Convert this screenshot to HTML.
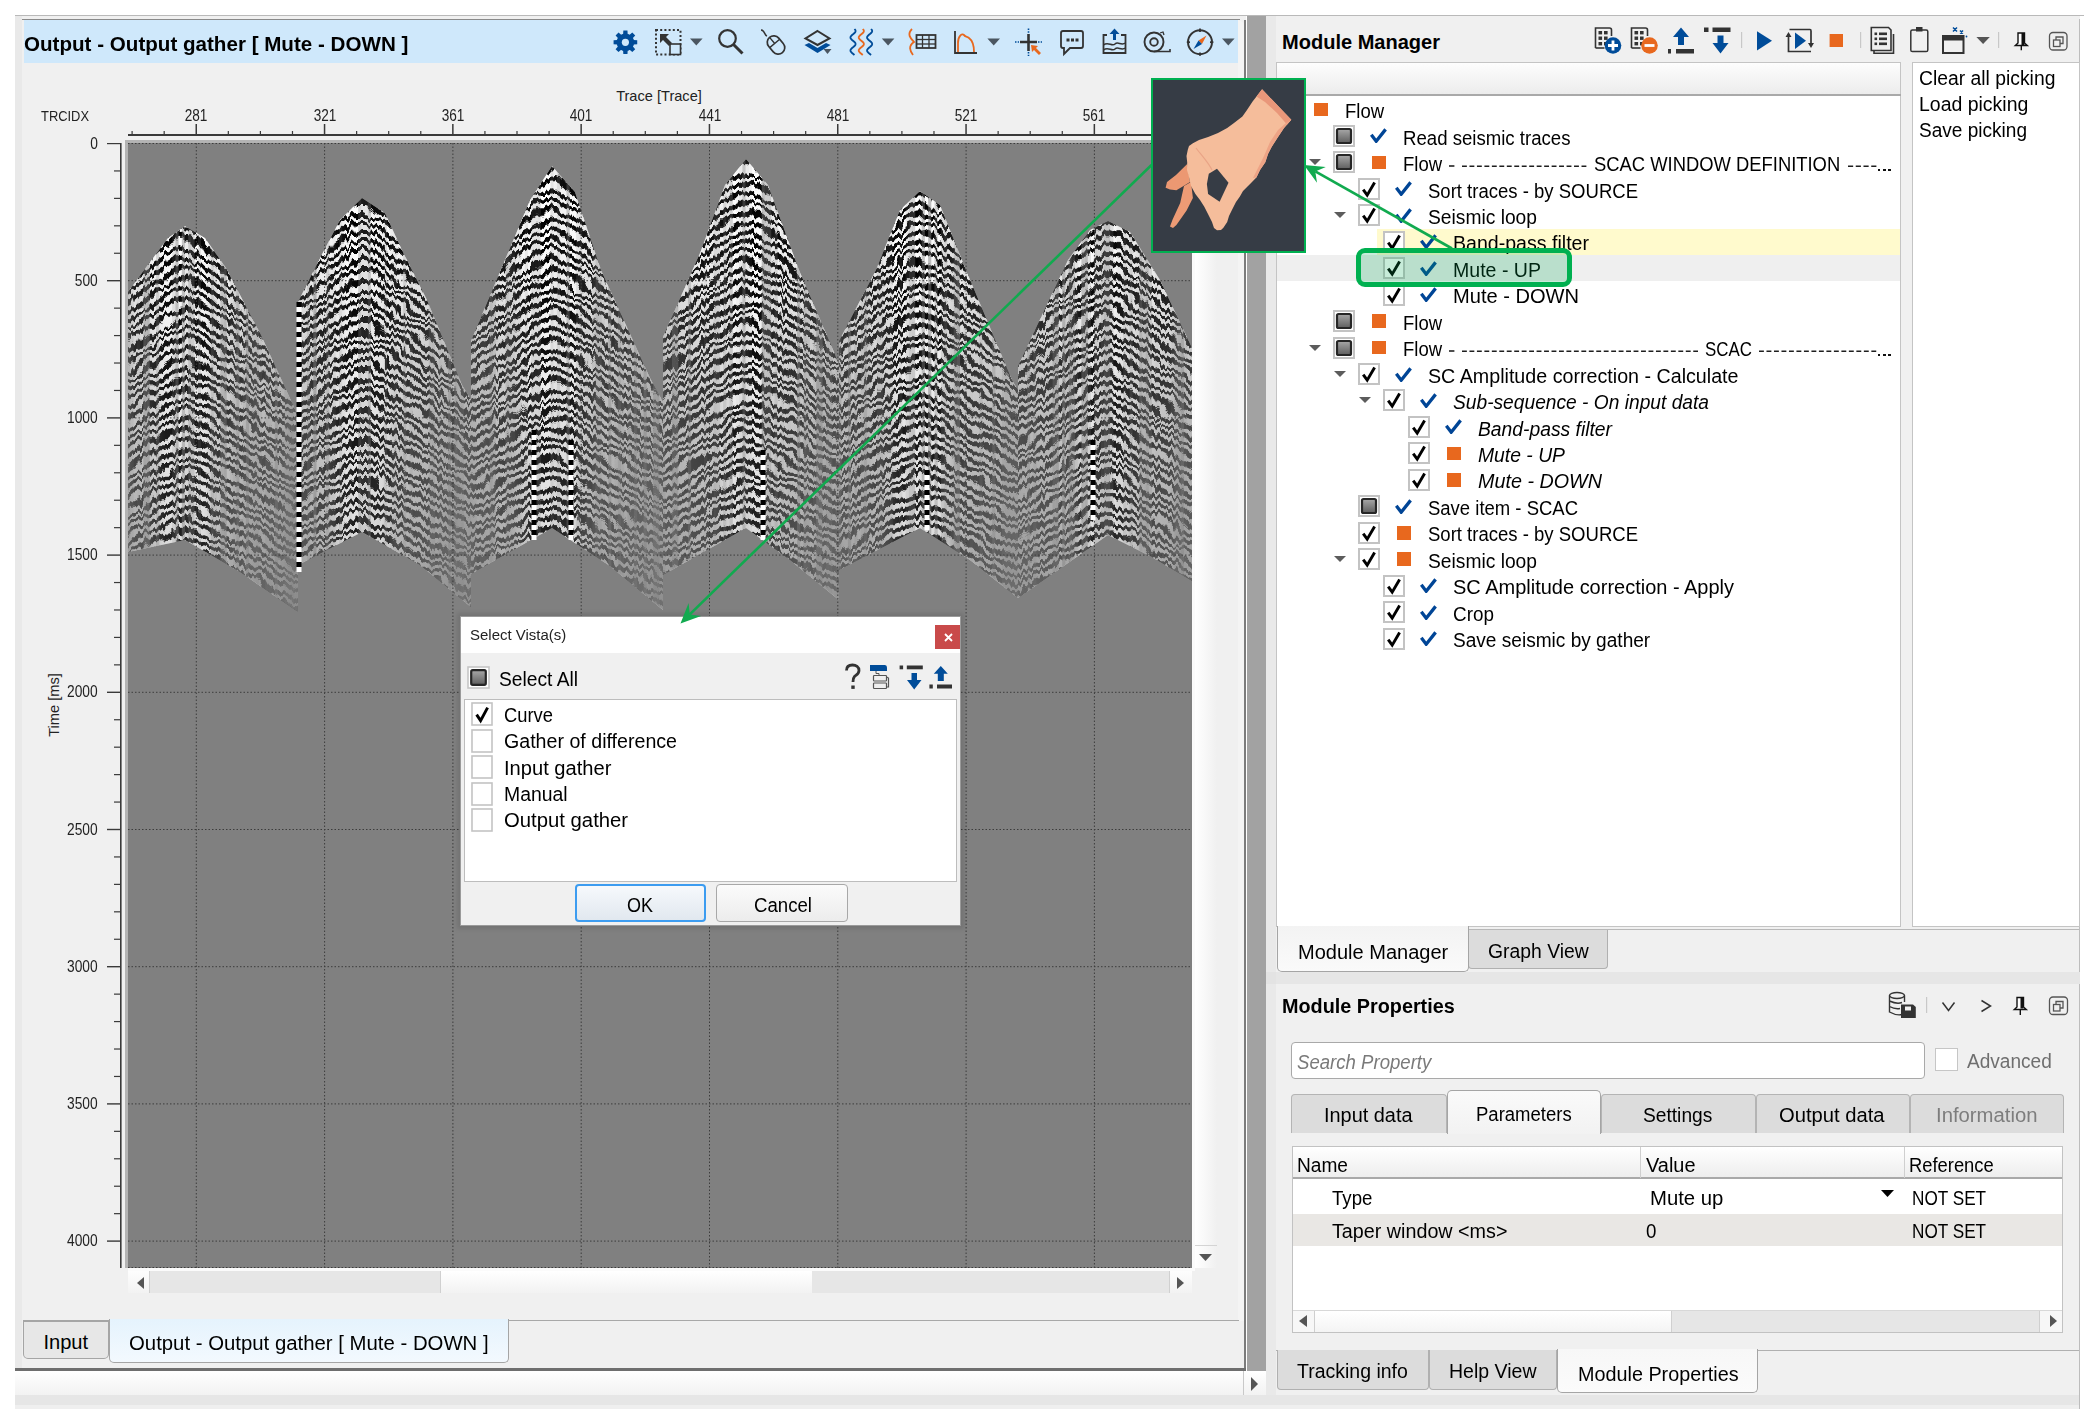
<!DOCTYPE html>
<html><head><meta charset="utf-8"><style>
html,body{margin:0;padding:0;}
body{width:2098px;height:1418px;position:relative;overflow:hidden;background:#fff;font-family:"Liberation Sans", sans-serif;}
</style></head><body>
<div style="position:absolute;left:15px;top:15px;width:2069px;height:1px;background:#b9b9b9"></div><div style="position:absolute;left:15px;top:16px;width:1231px;height:1355px;background:#f0f0f0"></div><div style="position:absolute;left:15px;top:16px;width:7px;height:1355px;background:#e9e9e9"></div><div style="position:absolute;left:22px;top:19px;width:1218px;height:1px;background:#8a8a8a"></div><div style="position:absolute;left:24px;top:20px;width:1214px;height:43px;background:#cfe8fb"></div><div style="position:absolute;left:1238px;top:20px;width:6px;height:1301px;background:#f4f4f4;border-top-right-radius:6px"></div><div style="position:absolute;left:1244px;top:20px;width:2px;height:1351px;background:#7c7c7c"></div><div style="position:absolute;left:15px;top:1368px;width:1231px;height:3px;background:#6e6e6e"></div><div style="position:absolute;left:1247px;top:16px;width:19px;height:1355px;background:#a2a2a2"></div><div style="position:absolute;left:15px;top:1371px;width:1251px;height:24px;background:linear-gradient(#ffffff,#f2f2f2)"></div><div style="position:absolute;left:1243px;top:1371px;width:1px;height:24px;background:#c9c9c9"></div><svg style="position:absolute;left:1250px;top:1377px;" width="9" height="14" viewBox="0 0 9 14"><path d="M1 0 L8 7 L1 14 Z" fill="#555"/></svg><div style="position:absolute;left:15px;top:1395px;width:2065px;height:13.6px;background:#efefef"></div><div style="position:absolute;left:15px;top:1395px;width:2065px;height:10px;background:#e6e6e6"></div><div style="position:absolute;left:1266px;top:16px;width:814px;height:1379px;background:#f0f0f0"></div><div style="position:absolute;left:1266px;top:16px;width:10px;height:1379px;background:#e9e9e9"></div><div style="position:absolute;left:2079px;top:19px;width:1.2px;height:1389.5px;background:#bdbdbd"></div><div style="position:absolute;top:33.53px;font-size:20.4px;line-height:20.4px;white-space:nowrap;color:#000;font-weight:700;left:24px;transform:scaleX(1.01);transform-origin:left 0;">Output - Output gather [ Mute - DOWN ]</div><div style="position:absolute;top:88.64px;font-size:14.6px;line-height:14.6px;white-space:nowrap;color:#222;left:359px;width:600px;text-align:center;">Trace [Trace]</div><div style="position:absolute;top:108.00px;font-size:15px;line-height:15px;white-space:nowrap;color:#222;left:41px;transform:scaleX(0.86);transform-origin:left 0;">TRCIDX</div><div style="position:absolute;top:108.45px;font-size:16px;line-height:16px;white-space:nowrap;color:#222;left:-103.69999999999999px;width:600px;text-align:center;transform:scaleX(0.85);transform-origin:center 0;">281</div><div style="position:absolute;top:108.45px;font-size:16px;line-height:16px;white-space:nowrap;color:#222;left:24.600000000000023px;width:600px;text-align:center;transform:scaleX(0.85);transform-origin:center 0;">321</div><div style="position:absolute;top:108.45px;font-size:16px;line-height:16px;white-space:nowrap;color:#222;left:152.90000000000003px;width:600px;text-align:center;transform:scaleX(0.85);transform-origin:center 0;">361</div><div style="position:absolute;top:108.45px;font-size:16px;line-height:16px;white-space:nowrap;color:#222;left:281.20000000000005px;width:600px;text-align:center;transform:scaleX(0.85);transform-origin:center 0;">401</div><div style="position:absolute;top:108.45px;font-size:16px;line-height:16px;white-space:nowrap;color:#222;left:409.5px;width:600px;text-align:center;transform:scaleX(0.85);transform-origin:center 0;">441</div><div style="position:absolute;top:108.45px;font-size:16px;line-height:16px;white-space:nowrap;color:#222;left:537.8px;width:600px;text-align:center;transform:scaleX(0.85);transform-origin:center 0;">481</div><div style="position:absolute;top:108.45px;font-size:16px;line-height:16px;white-space:nowrap;color:#222;left:666.1000000000001px;width:600px;text-align:center;transform:scaleX(0.85);transform-origin:center 0;">521</div><div style="position:absolute;top:108.45px;font-size:16px;line-height:16px;white-space:nowrap;color:#222;left:794.4000000000001px;width:600px;text-align:center;transform:scaleX(0.85);transform-origin:center 0;">561</div><svg style="position:absolute;left:128px;top:124px;" width="1064" height="12" viewBox="0 0 1064 12"><rect x="0" y="10" width="1064" height="2" fill="#3a3a3a"/><rect x="3.50" y="7" width="1.2" height="4" fill="#3a3a3a"/><rect x="35.58" y="7" width="1.2" height="4" fill="#3a3a3a"/><rect x="67.50" y="0" width="1.5" height="11" fill="#3a3a3a"/><rect x="99.72" y="7" width="1.2" height="4" fill="#3a3a3a"/><rect x="131.80" y="7" width="1.2" height="4" fill="#3a3a3a"/><rect x="163.88" y="7" width="1.2" height="4" fill="#3a3a3a"/><rect x="195.80" y="0" width="1.5" height="11" fill="#3a3a3a"/><rect x="228.03" y="7" width="1.2" height="4" fill="#3a3a3a"/><rect x="260.10" y="7" width="1.2" height="4" fill="#3a3a3a"/><rect x="292.17" y="7" width="1.2" height="4" fill="#3a3a3a"/><rect x="324.10" y="0" width="1.5" height="11" fill="#3a3a3a"/><rect x="356.33" y="7" width="1.2" height="4" fill="#3a3a3a"/><rect x="388.40" y="7" width="1.2" height="4" fill="#3a3a3a"/><rect x="420.48" y="7" width="1.2" height="4" fill="#3a3a3a"/><rect x="452.40" y="0" width="1.5" height="11" fill="#3a3a3a"/><rect x="484.62" y="7" width="1.2" height="4" fill="#3a3a3a"/><rect x="516.70" y="7" width="1.2" height="4" fill="#3a3a3a"/><rect x="548.78" y="7" width="1.2" height="4" fill="#3a3a3a"/><rect x="580.70" y="0" width="1.5" height="11" fill="#3a3a3a"/><rect x="612.93" y="7" width="1.2" height="4" fill="#3a3a3a"/><rect x="645.00" y="7" width="1.2" height="4" fill="#3a3a3a"/><rect x="677.08" y="7" width="1.2" height="4" fill="#3a3a3a"/><rect x="709.00" y="0" width="1.5" height="11" fill="#3a3a3a"/><rect x="741.23" y="7" width="1.2" height="4" fill="#3a3a3a"/><rect x="773.30" y="7" width="1.2" height="4" fill="#3a3a3a"/><rect x="805.38" y="7" width="1.2" height="4" fill="#3a3a3a"/><rect x="837.30" y="0" width="1.5" height="11" fill="#3a3a3a"/><rect x="869.53" y="7" width="1.2" height="4" fill="#3a3a3a"/><rect x="901.60" y="7" width="1.2" height="4" fill="#3a3a3a"/><rect x="933.68" y="7" width="1.2" height="4" fill="#3a3a3a"/><rect x="965.60" y="0" width="1.5" height="11" fill="#3a3a3a"/><rect x="997.82" y="7" width="1.2" height="4" fill="#3a3a3a"/><rect x="1029.90" y="7" width="1.2" height="4" fill="#3a3a3a"/><rect x="1061.98" y="7" width="1.2" height="4" fill="#3a3a3a"/></svg><svg style="position:absolute;left:107px;top:143px;" width="16" height="1126" viewBox="0 0 16 1126"><rect x="13" y="0" width="1.6" height="1125" fill="#3a3a3a"/><rect x="0" y="-0.20" width="14" height="1.4" fill="#3a3a3a"/><rect x="7" y="27.34" width="7" height="1.2" fill="#3a3a3a"/><rect x="7" y="54.78" width="7" height="1.2" fill="#3a3a3a"/><rect x="7" y="82.22" width="7" height="1.2" fill="#3a3a3a"/><rect x="7" y="109.66" width="7" height="1.2" fill="#3a3a3a"/><rect x="0" y="137.00" width="14" height="1.4" fill="#3a3a3a"/><rect x="7" y="164.54" width="7" height="1.2" fill="#3a3a3a"/><rect x="7" y="191.98" width="7" height="1.2" fill="#3a3a3a"/><rect x="7" y="219.42" width="7" height="1.2" fill="#3a3a3a"/><rect x="7" y="246.86" width="7" height="1.2" fill="#3a3a3a"/><rect x="0" y="274.20" width="14" height="1.4" fill="#3a3a3a"/><rect x="7" y="301.74" width="7" height="1.2" fill="#3a3a3a"/><rect x="7" y="329.18" width="7" height="1.2" fill="#3a3a3a"/><rect x="7" y="356.62" width="7" height="1.2" fill="#3a3a3a"/><rect x="7" y="384.06" width="7" height="1.2" fill="#3a3a3a"/><rect x="0" y="411.40" width="14" height="1.4" fill="#3a3a3a"/><rect x="7" y="438.94" width="7" height="1.2" fill="#3a3a3a"/><rect x="7" y="466.38" width="7" height="1.2" fill="#3a3a3a"/><rect x="7" y="493.82" width="7" height="1.2" fill="#3a3a3a"/><rect x="7" y="521.26" width="7" height="1.2" fill="#3a3a3a"/><rect x="0" y="548.60" width="14" height="1.4" fill="#3a3a3a"/><rect x="7" y="576.14" width="7" height="1.2" fill="#3a3a3a"/><rect x="7" y="603.58" width="7" height="1.2" fill="#3a3a3a"/><rect x="7" y="631.02" width="7" height="1.2" fill="#3a3a3a"/><rect x="7" y="658.46" width="7" height="1.2" fill="#3a3a3a"/><rect x="0" y="685.80" width="14" height="1.4" fill="#3a3a3a"/><rect x="7" y="713.34" width="7" height="1.2" fill="#3a3a3a"/><rect x="7" y="740.78" width="7" height="1.2" fill="#3a3a3a"/><rect x="7" y="768.22" width="7" height="1.2" fill="#3a3a3a"/><rect x="7" y="795.66" width="7" height="1.2" fill="#3a3a3a"/><rect x="0" y="823.00" width="14" height="1.4" fill="#3a3a3a"/><rect x="7" y="850.54" width="7" height="1.2" fill="#3a3a3a"/><rect x="7" y="877.98" width="7" height="1.2" fill="#3a3a3a"/><rect x="7" y="905.42" width="7" height="1.2" fill="#3a3a3a"/><rect x="7" y="932.86" width="7" height="1.2" fill="#3a3a3a"/><rect x="0" y="960.20" width="14" height="1.4" fill="#3a3a3a"/><rect x="7" y="987.74" width="7" height="1.2" fill="#3a3a3a"/><rect x="7" y="1015.18" width="7" height="1.2" fill="#3a3a3a"/><rect x="7" y="1042.62" width="7" height="1.2" fill="#3a3a3a"/><rect x="7" y="1070.06" width="7" height="1.2" fill="#3a3a3a"/><rect x="0" y="1097.40" width="14" height="1.4" fill="#3a3a3a"/></svg><div style="position:absolute;top:135.55px;font-size:16px;line-height:16px;white-space:nowrap;color:#222;right:2000px;text-align:right;transform:scaleX(0.86);transform-origin:right 0;">0</div><div style="position:absolute;top:272.75px;font-size:16px;line-height:16px;white-space:nowrap;color:#222;right:2000px;text-align:right;transform:scaleX(0.86);transform-origin:right 0;">500</div><div style="position:absolute;top:409.95px;font-size:16px;line-height:16px;white-space:nowrap;color:#222;right:2000px;text-align:right;transform:scaleX(0.86);transform-origin:right 0;">1000</div><div style="position:absolute;top:547.15px;font-size:16px;line-height:16px;white-space:nowrap;color:#222;right:2000px;text-align:right;transform:scaleX(0.86);transform-origin:right 0;">1500</div><div style="position:absolute;top:684.35px;font-size:16px;line-height:16px;white-space:nowrap;color:#222;right:2000px;text-align:right;transform:scaleX(0.86);transform-origin:right 0;">2000</div><div style="position:absolute;top:821.55px;font-size:16px;line-height:16px;white-space:nowrap;color:#222;right:2000px;text-align:right;transform:scaleX(0.86);transform-origin:right 0;">2500</div><div style="position:absolute;top:958.75px;font-size:16px;line-height:16px;white-space:nowrap;color:#222;right:2000px;text-align:right;transform:scaleX(0.86);transform-origin:right 0;">3000</div><div style="position:absolute;top:1095.95px;font-size:16px;line-height:16px;white-space:nowrap;color:#222;right:2000px;text-align:right;transform:scaleX(0.86);transform-origin:right 0;">3500</div><div style="position:absolute;top:1233.15px;font-size:16px;line-height:16px;white-space:nowrap;color:#222;right:2000px;text-align:right;transform:scaleX(0.86);transform-origin:right 0;">4000</div><div style="position:absolute;left:54px;top:705px;width:0;height:0;"><div style="position:absolute;left:-60px;top:-8px;width:120px;text-align:center;font-size:14.6px;line-height:16px;color:#222;transform:rotate(-90deg);white-space:nowrap;">Time [ms]</div></div><div style="position:absolute;left:125px;top:140px;width:1067px;height:3px;background:#b4b4b4"></div><div style="position:absolute;left:125px;top:143px;width:3px;height:1125px;background:#b4b4b4"></div><div style="position:absolute;left:128px;top:143px;width:1064px;height:1125px;background:#808080"></div><svg style="position:absolute;left:128px;top:143px;" width="1064" height="1125" viewBox="0 0 1064 1125"><defs><filter id="wob" x="-10%" y="-10%" width="120%" height="120%">
<feTurbulence type="fractalNoise" baseFrequency="0.035 0.05" numOctaves="2" seed="11" result="n"/>
<feDisplacementMap in="SourceGraphic" in2="n" scale="14" xChannelSelector="R" yChannelSelector="G" result="d1"/>
<feTurbulence type="fractalNoise" baseFrequency="0.33 0.006" numOctaves="1" seed="5" result="n2"/>
<feDisplacementMap in="d1" in2="n2" scale="9" xChannelSelector="A" yChannelSelector="R"/><feGaussianBlur stdDeviation="0.5"/>
</filter>
<linearGradient id="fade" gradientUnits="userSpaceOnUse" x1="0" y1="100" x2="0" y2="450">
<stop offset="0" stop-color="#808080" stop-opacity="0"/>
<stop offset="0.3" stop-color="#808080" stop-opacity="0.32"/>
<stop offset="0.6" stop-color="#808080" stop-opacity="0.58"/>
<stop offset="1" stop-color="#808080" stop-opacity="0.85"/>
</linearGradient><clipPath id="c0"><path d="M0,149 L22,119 L40,95 L57,83 L77,95 L98,125 L133,192 L165,262 L170,275 L170,469 L112,429 L57,397 L0,409 Z"/></clipPath><linearGradient id="mg0" gradientUnits="userSpaceOnUse" x1="-63" y1="0" x2="177" y2="0"><stop offset="0" stop-color="#fff"/><stop offset="0.35" stop-color="#bbb"/><stop offset="0.42" stop-color="#555"/><stop offset="0.58" stop-color="#555"/><stop offset="0.65" stop-color="#bbb"/><stop offset="1" stop-color="#fff"/></linearGradient><mask id="m0" maskUnits="userSpaceOnUse" x="0" y="0" width="1064" height="1125"><rect x="0" y="0" width="1064" height="1125" fill="url(#mg0)"/></mask><linearGradient id="hf0" gradientUnits="userSpaceOnUse" x1="-73" y1="0" x2="187" y2="0"><stop offset="0" stop-color="#808080" stop-opacity="0.35"/><stop offset="0.35" stop-color="#808080" stop-opacity="0.08"/><stop offset="0.5" stop-color="#808080" stop-opacity="0"/><stop offset="0.65" stop-color="#808080" stop-opacity="0.08"/><stop offset="1" stop-color="#808080" stop-opacity="0.35"/></linearGradient><clipPath id="c1"><path d="M170,159 L192,115 L212,77 L234,55 L257,70 L274,107 L299,157 L334,242 L343,257 L343,464 L292,422 L234,389 L170,422 Z"/></clipPath><linearGradient id="mg1" gradientUnits="userSpaceOnUse" x1="114" y1="0" x2="354" y2="0"><stop offset="0" stop-color="#fff"/><stop offset="0.35" stop-color="#bbb"/><stop offset="0.42" stop-color="#555"/><stop offset="0.58" stop-color="#555"/><stop offset="0.65" stop-color="#bbb"/><stop offset="1" stop-color="#fff"/></linearGradient><mask id="m1" maskUnits="userSpaceOnUse" x="0" y="0" width="1064" height="1125"><rect x="0" y="0" width="1064" height="1125" fill="url(#mg1)"/></mask><linearGradient id="hf1" gradientUnits="userSpaceOnUse" x1="104" y1="0" x2="364" y2="0"><stop offset="0" stop-color="#808080" stop-opacity="0.35"/><stop offset="0.35" stop-color="#808080" stop-opacity="0.08"/><stop offset="0.5" stop-color="#808080" stop-opacity="0"/><stop offset="0.65" stop-color="#808080" stop-opacity="0.08"/><stop offset="1" stop-color="#808080" stop-opacity="0.35"/></linearGradient><clipPath id="c2"><path d="M343,198 L374,124 L402,57 L424,23 L447,49 L473,127 L522,235 L535,259 L535,467 L482,423 L424,385 L343,431 Z"/></clipPath><linearGradient id="mg2" gradientUnits="userSpaceOnUse" x1="304" y1="0" x2="544" y2="0"><stop offset="0" stop-color="#fff"/><stop offset="0.35" stop-color="#bbb"/><stop offset="0.42" stop-color="#555"/><stop offset="0.58" stop-color="#555"/><stop offset="0.65" stop-color="#bbb"/><stop offset="1" stop-color="#fff"/></linearGradient><mask id="m2" maskUnits="userSpaceOnUse" x="0" y="0" width="1064" height="1125"><rect x="0" y="0" width="1064" height="1125" fill="url(#mg2)"/></mask><linearGradient id="hf2" gradientUnits="userSpaceOnUse" x1="294" y1="0" x2="554" y2="0"><stop offset="0" stop-color="#808080" stop-opacity="0.35"/><stop offset="0.35" stop-color="#808080" stop-opacity="0.08"/><stop offset="0.5" stop-color="#808080" stop-opacity="0"/><stop offset="0.65" stop-color="#808080" stop-opacity="0.08"/><stop offset="1" stop-color="#808080" stop-opacity="0.35"/></linearGradient><clipPath id="c3"><path d="M535,194 L572,110 L597,42 L618,16 L640,42 L671,127 L706,209 L711,222 L711,457 L662,417 L618,385 L535,432 Z"/></clipPath><linearGradient id="mg3" gradientUnits="userSpaceOnUse" x1="498" y1="0" x2="738" y2="0"><stop offset="0" stop-color="#fff"/><stop offset="0.35" stop-color="#bbb"/><stop offset="0.42" stop-color="#555"/><stop offset="0.58" stop-color="#555"/><stop offset="0.65" stop-color="#bbb"/><stop offset="1" stop-color="#fff"/></linearGradient><mask id="m3" maskUnits="userSpaceOnUse" x="0" y="0" width="1064" height="1125"><rect x="0" y="0" width="1064" height="1125" fill="url(#mg3)"/></mask><linearGradient id="hf3" gradientUnits="userSpaceOnUse" x1="488" y1="0" x2="748" y2="0"><stop offset="0" stop-color="#808080" stop-opacity="0.35"/><stop offset="0.35" stop-color="#808080" stop-opacity="0.08"/><stop offset="0.5" stop-color="#808080" stop-opacity="0"/><stop offset="0.65" stop-color="#808080" stop-opacity="0.08"/><stop offset="1" stop-color="#808080" stop-opacity="0.35"/></linearGradient><clipPath id="c4"><path d="M711,198 L748,127 L772,67 L792,48 L812,62 L838,127 L884,237 L890,247 L890,455 L842,417 L792,385 L711,427 Z"/></clipPath><linearGradient id="mg4" gradientUnits="userSpaceOnUse" x1="672" y1="0" x2="912" y2="0"><stop offset="0" stop-color="#fff"/><stop offset="0.35" stop-color="#bbb"/><stop offset="0.42" stop-color="#555"/><stop offset="0.58" stop-color="#555"/><stop offset="0.65" stop-color="#bbb"/><stop offset="1" stop-color="#fff"/></linearGradient><mask id="m4" maskUnits="userSpaceOnUse" x="0" y="0" width="1064" height="1125"><rect x="0" y="0" width="1064" height="1125" fill="url(#mg4)"/></mask><linearGradient id="hf4" gradientUnits="userSpaceOnUse" x1="662" y1="0" x2="922" y2="0"><stop offset="0" stop-color="#808080" stop-opacity="0.35"/><stop offset="0.35" stop-color="#808080" stop-opacity="0.08"/><stop offset="0.5" stop-color="#808080" stop-opacity="0"/><stop offset="0.65" stop-color="#808080" stop-opacity="0.08"/><stop offset="1" stop-color="#808080" stop-opacity="0.35"/></linearGradient><clipPath id="c5"><path d="M890,223 L940,117 L962,87 L980,78 L1002,89 L1032,137 L1064,205 L1064,438 L1022,413 L980,392 L890,455 Z"/></clipPath><linearGradient id="mg5" gradientUnits="userSpaceOnUse" x1="860" y1="0" x2="1100" y2="0"><stop offset="0" stop-color="#fff"/><stop offset="0.35" stop-color="#bbb"/><stop offset="0.42" stop-color="#555"/><stop offset="0.58" stop-color="#555"/><stop offset="0.65" stop-color="#bbb"/><stop offset="1" stop-color="#fff"/></linearGradient><mask id="m5" maskUnits="userSpaceOnUse" x="0" y="0" width="1064" height="1125"><rect x="0" y="0" width="1064" height="1125" fill="url(#mg5)"/></mask><linearGradient id="hf5" gradientUnits="userSpaceOnUse" x1="850" y1="0" x2="1110" y2="0"><stop offset="0" stop-color="#808080" stop-opacity="0.35"/><stop offset="0.35" stop-color="#808080" stop-opacity="0.08"/><stop offset="0.5" stop-color="#808080" stop-opacity="0"/><stop offset="0.65" stop-color="#808080" stop-opacity="0.08"/><stop offset="1" stop-color="#808080" stop-opacity="0.35"/></linearGradient></defs><g clip-path="url(#c0)"><rect x="-20" y="0" width="210" height="520" fill="#fff"/><g filter="url(#wob)" fill="#000"><polygon points="-20,73 -12,67 -4,62 4,56 12,50 20,44 28,39 36,33 44,28 52,24 60,23 68,27 76,32 84,38 92,43 100,49 108,54 116,60 124,66 132,72 140,77 148,83 156,89 164,94 172,100 180,106 188,112 196,117 196,122 188,117 180,111 172,105 164,99 156,94 148,88 140,82 132,77 124,71 116,65 108,59 100,54 92,48 84,43 76,37 68,32 60,28 52,29 44,33 36,38 28,44 20,49 12,55 4,61 -4,67 -12,72 -20,78"/><polygon points="-20,83 -12,77 -4,72 4,66 12,60 20,54 28,49 36,43 44,38 52,34 60,33 68,37 76,42 84,48 92,53 100,59 108,64 116,70 124,76 132,82 140,87 148,93 156,99 164,104 172,110 180,116 188,122 196,127 196,132 188,127 180,121 172,115 164,109 156,104 148,98 140,92 132,87 124,81 116,75 108,69 100,64 92,58 84,53 76,47 68,42 60,38 52,39 44,43 36,48 28,54 20,59 12,65 4,71 -4,77 -12,82 -20,88"/><polygon points="-20,93 -12,87 -4,82 4,76 12,70 20,64 28,59 36,53 44,48 52,44 60,43 68,47 76,52 84,58 92,63 100,69 108,74 116,80 124,86 132,92 140,97 148,103 156,109 164,114 172,120 180,126 188,132 196,137 196,142 188,137 180,131 172,125 164,119 156,114 148,108 140,102 132,97 124,91 116,85 108,79 100,74 92,68 84,63 76,57 68,52 60,48 52,49 44,53 36,58 28,64 20,69 12,75 4,81 -4,87 -12,92 -20,98"/><polygon points="-20,103 -12,97 -4,92 4,86 12,80 20,74 28,69 36,63 44,58 52,54 60,53 68,57 76,62 84,68 92,73 100,79 108,84 116,90 124,96 132,102 140,107 148,113 156,119 164,124 172,130 180,136 188,142 196,147 196,152 188,147 180,141 172,135 164,129 156,124 148,118 140,112 132,107 124,101 116,95 108,89 100,84 92,78 84,73 76,67 68,62 60,58 52,59 44,63 36,68 28,74 20,79 12,85 4,91 -4,97 -12,102 -20,108"/><polygon points="-20,113 -12,107 -4,102 4,96 12,90 20,84 28,79 36,73 44,68 52,64 60,63 68,67 76,72 84,78 92,83 100,89 108,94 116,100 124,106 132,112 140,117 148,123 156,129 164,134 172,140 180,146 188,152 196,157 196,162 188,157 180,151 172,145 164,139 156,134 148,128 140,122 132,117 124,111 116,105 108,99 100,94 92,88 84,83 76,77 68,72 60,68 52,69 44,73 36,78 28,84 20,89 12,95 4,101 -4,107 -12,112 -20,118"/><polygon points="-20,123 -12,117 -4,112 4,106 12,100 20,94 28,89 36,83 44,78 52,74 60,73 68,77 76,82 84,88 92,93 100,99 108,104 116,110 124,116 132,122 140,127 148,133 156,139 164,144 172,150 180,156 188,162 196,167 196,172 188,167 180,161 172,155 164,149 156,144 148,138 140,132 132,127 124,121 116,115 108,109 100,104 92,98 84,93 76,87 68,82 60,78 52,79 44,83 36,88 28,94 20,99 12,105 4,111 -4,117 -12,122 -20,128"/><polygon points="-20,133 -12,127 -4,122 4,116 12,110 20,104 28,99 36,93 44,88 52,84 60,83 68,87 76,92 84,98 92,103 100,109 108,114 116,120 124,126 132,132 140,137 148,143 156,149 164,154 172,160 180,166 188,172 196,177 196,182 188,176 180,171 172,165 164,159 156,153 148,148 140,142 132,136 124,131 116,125 108,119 100,114 92,108 84,102 76,97 68,92 60,88 52,89 44,93 36,98 28,104 20,109 12,115 4,121 -4,126 -12,132 -20,138"/><polygon points="-20,143 -12,137 -4,131 4,126 12,120 20,114 28,109 36,103 44,98 52,94 60,93 68,97 76,102 84,107 92,113 100,118 108,124 116,130 124,135 132,141 140,147 148,152 156,158 164,164 172,170 180,175 188,181 196,187 196,191 188,185 180,180 172,174 164,168 156,163 148,157 140,152 132,146 124,140 116,135 108,129 100,123 92,118 84,112 76,107 68,102 60,98 52,99 44,103 36,108 28,114 20,119 12,125 4,130 -4,136 -12,142 -20,147"/><polygon points="-20,152 -12,146 -4,141 4,135 12,130 20,124 28,119 36,113 44,108 52,104 60,103 68,107 76,112 84,117 92,123 100,128 108,134 116,139 124,145 132,151 140,156 148,162 156,168 164,173 172,179 180,184 188,190 196,196 196,200 188,195 180,189 172,183 164,178 156,172 148,167 140,161 132,155 124,150 116,144 108,139 100,133 92,128 84,122 76,117 68,112 60,108 52,109 44,113 36,118 28,124 20,129 12,135 4,140 -4,146 -12,151 -20,157"/><polygon points="-20,162 -12,156 -4,150 4,145 12,139 20,134 28,128 36,123 44,118 52,114 60,113 68,117 76,122 84,127 92,133 100,138 108,144 116,149 124,155 132,160 140,166 148,171 156,177 164,182 172,188 180,194 188,199 196,205 196,209 188,204 180,198 172,193 164,187 156,182 148,176 140,170 132,165 124,159 116,154 108,148 100,143 92,137 84,132 76,127 68,122 60,118 52,119 44,123 36,128 28,133 20,139 12,144 4,150 -4,155 -12,161 -20,166"/><polygon points="-20,171 -12,166 -4,160 4,155 12,149 20,144 28,138 36,133 44,128 52,124 60,123 68,127 76,132 84,137 92,142 100,148 108,153 116,159 124,164 132,170 140,175 148,181 156,186 164,192 172,197 180,203 188,208 196,214 196,218 188,213 180,207 172,202 164,196 156,191 148,185 140,180 132,174 124,169 116,164 108,158 100,153 92,147 84,142 76,137 68,132 60,128 52,129 44,133 36,138 28,143 20,149 12,154 4,159 -4,165 -12,170 -20,176"/><polygon points="-20,181 -12,175 -4,170 4,164 12,159 20,153 28,148 36,143 44,138 52,134 60,133 68,137 76,142 84,147 92,152 100,158 108,163 116,168 124,174 132,179 140,185 148,190 156,196 164,201 172,207 180,212 188,218 196,223 196,228 188,222 180,217 172,211 164,206 156,200 148,195 140,189 132,184 124,179 116,173 108,168 100,162 92,157 84,152 76,147 68,142 60,138 52,139 44,143 36,148 28,153 20,158 12,164 4,169 -4,175 -12,180 -20,185"/><polygon points="-20,190 -12,185 -4,179 4,174 12,169 20,163 28,158 36,153 44,148 52,144 60,143 68,147 76,152 84,157 92,162 100,167 108,173 116,178 124,183 132,189 140,194 148,200 156,205 164,210 172,216 180,221 188,227 196,232 196,237 188,231 180,226 172,220 164,215 156,210 148,204 140,199 132,194 124,188 116,183 108,177 100,172 92,167 84,162 76,157 68,152 60,148 52,149 44,153 36,158 28,163 20,168 12,173 4,179 -4,184 -12,190 -20,195"/><polygon points="-20,200 -12,194 -4,189 4,184 12,178 20,173 28,168 36,163 44,158 52,154 60,153 68,157 76,161 84,167 92,172 100,177 108,182 116,188 124,193 132,198 140,204 148,209 156,214 164,220 172,225 180,230 188,236 196,241 196,246 188,240 180,235 172,230 164,224 156,219 148,214 140,208 132,203 124,198 116,192 108,187 100,182 92,177 84,171 76,166 68,162 60,158 52,159 44,163 36,168 28,173 20,178 12,183 4,189 -4,194 -12,199 -20,204"/><polygon points="-20,209 -12,204 -4,199 4,193 12,188 20,183 28,178 36,173 44,168 52,164 60,163 68,167 76,171 84,176 92,182 100,187 108,192 116,197 124,203 132,208 140,213 148,218 156,224 164,229 172,234 180,240 188,245 196,250 196,255 188,250 180,244 172,239 164,234 156,228 148,223 140,218 132,213 124,207 116,202 108,197 100,192 92,186 84,181 76,176 68,172 60,168 52,169 44,173 36,178 28,183 20,188 12,193 4,198 -4,203 -12,209 -20,214"/><polygon points="-20,219 -12,213 -4,208 4,203 12,198 20,193 28,188 36,183 44,178 52,174 60,173 68,177 76,181 84,186 92,191 100,197 108,202 116,207 124,212 132,217 140,223 148,228 156,233 164,238 172,244 180,249 188,254 196,259 196,264 188,259 180,254 172,248 164,243 156,238 148,233 140,227 132,222 124,217 116,212 108,207 100,201 92,196 84,191 76,186 68,182 60,178 52,179 44,183 36,187 28,192 20,198 12,203 4,208 -4,213 -12,218 -20,223"/><polygon points="-20,228 -12,223 -4,218 4,213 12,208 20,202 28,197 36,192 44,188 52,184 60,183 68,187 76,191 84,196 92,201 100,206 108,211 116,217 124,222 132,227 140,232 148,237 156,243 164,248 172,253 180,258 188,263 196,269 196,273 188,268 180,263 172,258 164,252 156,247 148,242 140,237 132,232 124,227 116,221 108,216 100,211 92,206 84,201 76,196 68,192 60,188 52,189 44,193 36,197 28,202 20,207 12,212 4,218 -4,223 -12,228 -20,233"/><polygon points="-20,238 -12,233 -4,228 4,222 12,217 20,212 28,207 36,202 44,198 52,194 60,193 68,197 76,201 84,206 92,211 100,216 108,221 116,226 124,231 132,236 140,242 148,247 156,252 164,257 172,262 180,267 188,273 196,278 196,282 188,277 180,272 172,267 164,262 156,257 148,251 140,246 132,241 124,236 116,231 108,226 100,221 92,216 84,211 76,206 68,202 60,198 52,199 44,203 36,207 28,212 20,217 12,222 4,227 -4,232 -12,237 -20,243"/><polygon points="-20,247 -12,242 -4,237 4,232 12,227 20,222 28,217 36,212 44,208 52,204 60,203 68,207 76,211 84,216 92,221 100,226 108,231 116,236 124,241 132,246 140,251 148,256 156,261 164,266 172,271 180,277 188,282 196,287 196,291 188,286 180,281 172,276 164,271 156,266 148,261 140,256 132,251 124,246 116,241 108,236 100,231 92,226 84,221 76,216 68,212 60,208 52,209 44,213 36,217 28,222 20,227 12,232 4,237 -4,242 -12,247 -20,252"/><polygon points="-20,257 -12,252 -4,247 4,242 12,237 20,232 28,227 36,222 44,218 52,214 60,213 68,217 76,221 84,226 92,231 100,236 108,241 116,246 124,251 132,256 140,261 148,266 156,271 164,276 172,281 180,286 188,291 196,296 196,300 188,295 180,290 172,285 164,280 156,275 148,270 140,265 132,260 124,255 116,250 108,245 100,240 92,236 84,231 76,226 68,222 60,218 52,219 44,223 36,227 28,232 20,237 12,242 4,247 -4,252 -12,257 -20,262"/><polygon points="-20,266 -12,261 -4,256 4,251 12,247 20,242 28,237 36,232 44,228 52,224 60,223 68,226 76,231 84,236 92,240 100,245 108,250 116,255 124,260 132,265 140,270 148,275 156,280 164,285 172,290 180,295 188,300 196,305 196,310 188,305 180,300 172,295 164,290 156,285 148,280 140,275 132,270 124,265 116,260 108,255 100,250 92,245 84,241 76,236 68,231 60,228 52,229 44,233 36,237 28,242 20,247 12,251 4,256 -4,261 -12,266 -20,271"/><polygon points="-20,276 -12,271 -4,266 4,261 12,256 20,251 28,247 36,242 44,237 52,234 60,233 68,236 76,241 84,245 92,250 100,255 108,260 116,265 124,270 132,275 140,280 148,285 156,289 164,294 172,299 180,304 188,309 196,314 196,319 188,314 180,309 172,304 164,299 156,294 148,289 140,284 132,279 124,275 116,270 108,265 100,260 92,255 84,250 76,246 68,241 60,238 52,239 44,242 36,247 28,252 20,256 12,261 4,266 -4,271 -12,276 -20,281"/><polygon points="-20,285 -12,281 -4,276 4,271 12,266 20,261 28,256 36,252 44,247 52,244 60,243 68,246 76,251 84,255 92,260 100,265 108,270 116,274 124,279 132,284 140,289 148,294 156,299 164,304 172,309 180,313 188,318 196,323 196,328 188,323 180,318 172,313 164,308 156,303 148,299 140,294 132,289 124,284 116,279 108,275 100,270 92,265 84,260 76,256 68,251 60,248 52,249 44,252 36,257 28,261 20,266 12,271 4,276 -4,281 -12,285 -20,290"/><polygon points="-20,295 -12,290 -4,285 4,281 12,276 20,271 28,266 36,262 44,257 52,254 60,253 68,256 76,261 84,265 92,270 100,275 108,279 116,284 124,289 132,294 140,299 148,303 156,308 164,313 172,318 180,323 188,327 196,332 196,337 188,332 180,327 172,322 164,318 156,313 148,308 140,303 132,299 124,294 116,289 108,284 100,279 92,275 84,270 76,266 68,261 60,258 52,259 44,262 36,267 28,271 20,276 12,281 4,285 -4,290 -12,295 -20,300"/><polygon points="-20,304 -12,300 -4,295 4,290 12,286 20,281 28,276 36,272 44,267 52,264 60,263 68,266 76,271 84,275 92,280 100,284 108,289 116,294 124,299 132,303 140,308 148,313 156,318 164,322 172,327 180,332 188,337 196,341 196,346 188,341 180,336 172,332 164,327 156,322 148,318 140,313 132,308 124,303 116,299 108,294 100,289 92,285 84,280 76,275 68,271 60,268 52,269 44,272 36,277 28,281 20,286 12,290 4,295 -4,300 -12,305 -20,309"/><polygon points="-20,314 -12,309 -4,305 4,300 12,295 20,291 28,286 36,282 44,277 52,274 60,273 68,276 76,280 84,285 92,289 100,294 108,299 116,303 124,308 132,313 140,318 148,322 156,327 164,332 172,336 180,341 188,346 196,351 196,355 188,350 180,346 172,341 164,336 156,332 148,327 140,322 132,318 124,313 116,308 108,304 100,299 92,294 84,290 76,285 68,281 60,278 52,279 44,282 36,286 28,291 20,296 12,300 4,305 -4,309 -12,314 -20,319"/><polygon points="-20,324 -12,319 -4,314 4,310 12,305 20,300 28,296 36,291 44,287 52,284 60,283 68,286 76,290 84,295 92,299 100,304 108,308 116,313 124,318 132,322 140,327 148,332 156,336 164,341 172,346 180,350 188,355 196,360 196,364 188,360 180,355 172,350 164,346 156,341 148,336 140,332 132,327 124,323 116,318 108,313 100,309 92,304 84,300 76,295 68,291 60,288 52,289 44,292 36,296 28,301 20,305 12,310 4,314 -4,319 -12,324 -20,328"/><polygon points="-20,333 -12,328 -4,324 4,319 12,315 20,310 28,306 36,301 44,297 52,294 60,293 68,296 76,300 84,305 92,309 100,314 108,318 116,323 124,327 132,332 140,336 148,341 156,346 164,350 172,355 180,360 188,364 196,369 196,373 188,369 180,364 172,360 164,355 156,350 148,346 140,341 132,337 124,332 116,328 108,323 100,318 92,314 84,310 76,305 68,301 60,298 52,299 44,302 36,306 28,311 20,315 12,320 4,324 -4,329 -12,333 -20,338"/><polygon points="-20,343 -12,338 -4,334 4,329 12,325 20,320 28,316 36,311 44,307 52,304 60,303 68,306 76,310 84,314 92,319 100,323 108,328 116,332 124,337 132,341 140,346 148,351 156,355 164,360 172,364 180,369 188,373 196,378 196,382 188,378 180,373 172,369 164,364 156,360 148,355 140,351 132,346 124,342 116,337 108,333 100,328 92,324 84,319 76,315 68,311 60,308 52,309 44,312 36,316 28,321 20,325 12,329 4,334 -4,338 -12,343 -20,347"/><polygon points="-20,352 -12,348 -4,343 4,339 12,334 20,330 28,325 36,321 44,317 52,314 60,313 68,316 76,320 84,324 92,329 100,333 108,338 116,342 124,347 132,351 140,355 148,360 156,364 164,369 172,373 180,378 188,382 196,387 196,391 188,387 180,383 172,378 164,374 156,369 148,365 140,360 132,356 124,351 116,347 108,342 100,338 92,334 84,329 76,325 68,321 60,318 52,319 44,322 36,326 28,330 20,335 12,339 4,344 -4,348 -12,352 -20,357"/><polygon points="-20,362 -12,357 -4,353 4,348 12,344 20,340 28,335 36,331 44,327 52,324 60,323 68,326 76,330 84,334 92,339 100,343 108,347 116,352 124,356 132,361 140,365 148,369 156,374 164,378 172,383 180,387 188,392 196,396 196,401 188,396 180,392 172,387 164,383 156,379 148,374 140,370 132,365 124,361 116,357 108,352 100,348 92,343 84,339 76,335 68,331 60,328 52,329 44,332 36,336 28,340 20,345 12,349 4,353 -4,358 -12,362 -20,366"/><polygon points="-20,371 -12,367 -4,362 4,358 12,354 20,349 28,345 36,341 44,337 52,334 60,333 68,336 76,340 84,344 92,348 100,353 108,357 116,361 124,366 132,370 140,374 148,379 156,383 164,388 172,392 180,396 188,401 196,405 196,410 188,405 180,401 172,397 164,392 156,388 148,384 140,379 132,375 124,370 116,366 108,362 100,358 92,353 84,349 76,345 68,341 60,338 52,339 44,342 36,346 28,350 20,354 12,359 4,363 -4,367 -12,372 -20,376"/><polygon points="-20,381 -12,376 -4,372 4,368 12,363 20,359 28,355 36,351 44,347 52,344 60,343 68,346 76,350 84,354 92,358 100,362 108,367 116,371 124,375 132,380 140,384 148,388 156,393 164,397 172,401 180,406 188,410 196,414 196,419 188,414 180,410 172,406 164,402 156,397 148,393 140,389 132,384 124,380 116,376 108,372 100,367 92,363 84,359 76,355 68,351 60,348 52,349 44,352 36,356 28,360 20,364 12,368 4,373 -4,377 -12,381 -20,385"/><polygon points="-20,390 -12,386 -4,382 4,377 12,373 20,369 28,365 36,361 44,357 52,354 60,353 68,356 76,360 84,364 92,368 100,372 108,376 116,381 124,385 132,389 140,393 148,398 156,402 164,406 172,411 180,415 188,419 196,423 196,428 188,424 180,419 172,415 164,411 156,407 148,402 140,398 132,394 124,390 116,385 108,381 100,377 92,373 84,369 76,365 68,361 60,358 52,359 44,362 36,366 28,370 20,374 12,378 4,382 -4,387 -12,391 -20,395"/><polygon points="-20,400 -12,396 -4,391 4,387 12,383 20,379 28,375 36,371 44,367 52,364 60,363 68,366 76,370 84,374 92,378 100,382 108,386 116,390 124,394 132,399 140,403 148,407 156,411 164,416 172,420 180,424 188,428 196,432 196,437 188,433 180,429 172,424 164,420 156,416 148,412 140,408 132,403 124,399 116,395 108,391 100,387 92,383 84,379 76,375 68,371 60,368 52,369 44,372 36,376 28,380 20,384 12,388 4,392 -4,396 -12,400 -20,405"/><polygon points="-20,409 -12,405 -4,401 4,397 12,393 20,389 28,385 36,381 44,377 52,374 60,373 68,376 76,380 84,384 92,388 100,392 108,396 116,400 124,404 132,408 140,412 148,417 156,421 164,425 172,429 180,433 188,437 196,442 196,446 188,442 180,438 172,434 164,430 156,425 148,421 140,417 132,413 124,409 116,405 108,401 100,397 92,392 84,388 76,385 68,381 60,378 52,379 44,382 36,386 28,389 20,393 12,398 4,402 -4,406 -12,410 -20,414"/><polygon points="-20,419 -12,415 -4,411 4,407 12,402 20,398 28,394 36,390 44,387 52,384 60,383 68,386 76,390 84,393 92,397 100,401 108,405 116,410 124,414 132,418 140,422 148,426 156,430 164,434 172,438 180,442 188,447 196,451 196,455 188,451 180,447 172,443 164,439 156,435 148,431 140,427 132,423 124,418 116,414 108,410 100,406 92,402 84,398 76,394 68,391 60,388 52,389 44,392 36,395 28,399 20,403 12,407 4,411 -4,415 -12,419 -20,424"/><polygon points="-20,428 -12,424 -4,420 4,416 12,412 20,408 28,404 36,400 44,397 52,394 60,393 68,396 76,399 84,403 92,407 100,411 108,415 116,419 124,423 132,427 140,431 148,435 156,439 164,444 172,448 180,452 188,456 196,460 196,464 188,460 180,456 172,452 164,448 156,444 148,440 140,436 132,432 124,428 116,424 108,420 100,416 92,412 84,408 76,404 68,401 60,398 52,399 44,402 36,405 28,409 20,413 12,417 4,421 -4,425 -12,429 -20,433"/><polygon points="-20,438 -12,434 -4,430 4,426 12,422 20,418 28,414 36,410 44,407 52,404 60,403 68,406 76,409 84,413 92,417 100,421 108,425 116,429 124,433 132,437 140,441 148,445 156,449 164,453 172,457 180,461 188,465 196,469 196,473 188,469 180,465 172,462 164,458 156,454 148,450 140,446 132,442 124,438 116,434 108,430 100,426 92,422 84,418 76,414 68,411 60,408 52,409 44,412 36,415 28,419 20,423 12,427 4,431 -4,435 -12,439 -20,443"/><polygon points="-20,447 -12,443 -4,440 4,436 12,432 20,428 28,424 36,420 44,417 52,414 60,413 68,416 76,419 84,423 92,427 100,431 108,435 116,439 124,442 132,446 140,450 148,454 156,458 164,462 172,466 180,470 188,474 196,478 196,483 188,479 180,475 172,471 164,467 156,463 148,459 140,455 132,451 124,447 116,443 108,439 100,436 92,432 84,428 76,424 68,421 60,418 52,419 44,422 36,425 28,429 20,433 12,437 4,440 -4,444 -12,448 -20,452"/><polygon points="-20,457 -12,453 -4,449 4,445 12,441 20,438 28,434 36,430 44,427 52,424 60,423 68,426 76,429 84,433 92,437 100,440 108,444 116,448 124,452 132,456 140,460 148,464 156,468 164,472 172,475 180,479 188,483 196,487 196,492 188,488 180,484 172,480 164,476 156,472 148,468 140,465 132,461 124,457 116,453 108,449 100,445 92,442 84,438 76,434 68,431 60,428 52,429 44,432 36,435 28,439 20,442 12,446 4,450 -4,454 -12,458 -20,462"/><polygon points="-20,466 -12,463 -4,459 4,455 12,451 20,447 28,444 36,440 44,436 52,434 60,433 68,436 76,439 84,443 92,446 100,450 108,454 116,458 124,462 132,465 140,469 148,473 156,477 164,481 172,485 180,489 188,492 196,496 196,501 188,497 180,493 172,489 164,485 156,482 148,478 140,474 132,470 124,466 116,463 108,459 100,455 92,451 84,448 76,444 68,441 60,438 52,439 44,441 36,445 28,449 20,452 12,456 4,460 -4,464 -12,467 -20,471"/><polygon points="-20,476 -12,472 -4,468 4,465 12,461 20,457 28,453 36,450 44,446 52,444 60,443 68,446 76,449 84,453 92,456 100,460 108,464 116,467 124,471 132,475 140,479 148,483 156,486 164,490 172,494 180,498 188,502 196,505 196,510 188,506 180,502 172,499 164,495 156,491 148,487 140,484 132,480 124,476 116,472 108,469 100,465 92,461 84,458 76,454 68,451 60,448 52,449 44,451 36,455 28,458 20,462 12,466 4,470 -4,473 -12,477 -20,481"/><polygon points="-20,485 -12,482 -4,478 4,474 12,471 20,467 28,463 36,460 44,456 52,454 60,453 68,456 76,459 84,462 92,466 100,470 108,473 116,477 124,481 132,485 140,488 148,492 156,496 164,499 172,503 180,507 188,511 196,514 196,519 188,515 180,512 172,508 164,504 156,500 148,497 140,493 132,489 124,486 116,482 108,478 100,475 92,471 84,467 76,464 68,461 60,458 52,459 44,461 36,465 28,468 20,472 12,476 4,479 -4,483 -12,487 -20,490"/><polygon points="-20,495 -12,491 -4,488 4,484 12,480 20,477 28,473 36,470 44,466 52,464 60,463 68,466 76,469 84,472 92,476 100,479 108,483 116,487 124,490 132,494 140,498 148,501 156,505 164,509 172,512 180,516 188,520 196,524 196,528 188,524 180,521 172,517 164,513 156,510 148,506 140,503 132,499 124,495 116,492 108,488 100,484 92,481 84,477 76,474 68,471 60,468 52,469 44,471 36,475 28,478 20,482 12,485 4,489 -4,493 -12,496 -20,500"/><polygon points="-20,505 -12,501 -4,497 4,494 12,490 20,487 28,483 36,480 44,476 52,474 60,473 68,476 76,479 84,482 92,486 100,489 108,493 116,496 124,500 132,504 140,507 148,511 156,515 164,518 172,522 180,525 188,529 196,533 196,537 188,534 180,530 172,526 164,523 156,519 148,516 140,512 132,508 124,505 116,501 108,498 100,494 92,491 84,487 76,484 68,481 60,478 52,479 44,481 36,485 28,488 20,491 12,495 4,499 -4,502 -12,506 -20,509"/><polygon points="-20,514 -12,511 -4,507 4,503 12,500 20,496 28,493 36,489 44,486 52,484 60,483 68,486 76,489 84,492 92,495 100,499 108,503 116,506 124,510 132,513 140,517 148,520 156,524 164,527 172,531 180,535 188,538 196,542 196,546 188,543 180,539 172,536 164,532 156,529 148,525 140,521 132,518 124,514 116,511 108,507 100,504 92,500 84,497 76,494 68,490 60,488 52,489 44,491 36,494 28,498 20,501 12,505 4,508 -4,512 -12,515 -20,519"/><polygon points="-20,524 -12,520 -4,517 4,513 12,510 20,506 28,503 36,499 44,496 52,494 60,493 68,495 76,499 84,502 92,505 100,509 108,512 116,516 124,519 132,523 140,526 148,530 156,533 164,537 172,540 180,544 188,547 196,551 196,555 188,552 180,548 172,545 164,541 156,538 148,534 140,531 132,527 124,524 116,521 108,517 100,514 92,510 84,507 76,504 68,500 60,498 52,499 44,501 36,504 28,508 20,511 12,514 4,518 -4,521 -12,525 -20,528"/><polygon points="-20,533 -12,530 -4,526 4,523 12,519 20,516 28,513 36,509 44,506 52,504 60,503 68,505 76,508 84,512 92,515 100,519 108,522 116,525 124,529 132,532 140,536 148,539 156,543 164,546 172,550 180,553 188,556 196,560 196,565 188,561 180,558 172,554 164,551 156,547 148,544 140,540 132,537 124,534 116,530 108,527 100,523 92,520 84,517 76,513 68,510 60,508 52,509 44,511 36,514 28,518 20,521 12,524 4,528 -4,531 -12,534 -20,538"/><polygon points="-20,543 -12,539 -4,536 4,532 12,529 20,526 28,522 36,519 44,516 52,514 60,513 68,515 76,518 84,522 92,525 100,528 108,532 116,535 124,538 132,542 140,545 148,549 156,552 164,555 172,559 180,562 188,566 196,569 196,574 188,570 180,567 172,563 164,560 156,557 148,553 140,550 132,547 124,543 116,540 108,536 100,533 92,530 84,527 76,523 68,520 60,518 52,519 44,521 36,524 28,527 20,531 12,534 4,537 -4,541 -12,544 -20,547"/><polygon points="-20,552 -12,549 -4,546 4,542 12,539 20,536 28,532 36,529 44,526 52,524 60,523 68,525 76,528 84,531 92,535 100,538 108,541 116,545 124,548 132,551 140,555 148,558 156,561 164,565 172,568 180,571 188,575 196,578 196,583 188,579 180,576 172,573 164,569 156,566 148,563 140,559 132,556 124,553 116,549 108,546 100,543 92,540 84,536 76,533 68,530 60,528 52,529 44,531 36,534 28,537 20,540 12,544 4,547 -4,550 -12,554 -20,557"/><polygon points="-20,562 -12,558 -4,555 4,552 12,549 20,545 28,542 36,539 44,536 52,534 60,533 68,535 76,538 84,541 92,545 100,548 108,551 116,554 124,558 132,561 140,564 148,567 156,571 164,574 172,577 180,581 188,584 196,587 196,592 188,589 180,585 172,582 164,579 156,575 148,572 140,569 132,566 124,562 116,559 108,556 100,553 92,549 84,546 76,543 68,540 60,538 52,539 44,541 36,544 28,547 20,550 12,553 4,557 -4,560 -12,563 -20,566"/><polygon points="-20,571 -12,568 -4,565 4,562 12,558 20,555 28,552 36,549 44,546 52,544 60,543 68,545 76,548 84,551 92,554 100,558 108,561 116,564 124,567 132,570 140,574 148,577 156,580 164,583 172,587 180,590 188,593 196,596 196,601 188,598 180,594 172,591 164,588 156,585 148,582 140,578 132,575 124,572 116,569 108,566 100,562 92,559 84,556 76,553 68,550 60,548 52,549 44,551 36,554 28,557 20,560 12,563 4,566 -4,570 -12,573 -20,576"/></g><rect x="-16.8" y="0" width="3.21" height="520" fill="#808080" fill-opacity="0.09"/><rect x="-13.6" y="0" width="3.21" height="520" fill="#808080" fill-opacity="0.28"/><rect x="-10.4" y="0" width="3.21" height="520" fill="#808080" fill-opacity="0.23"/><rect x="-7.2" y="0" width="3.21" height="520" fill="#808080" fill-opacity="0.25"/><rect x="-4.0" y="0" width="3.21" height="520" fill="#808080" fill-opacity="0.08"/><rect x="-0.8" y="0" width="3.21" height="520" fill="#808080" fill-opacity="0.31"/><rect x="2.5" y="0" width="3.21" height="520" fill="#808080" fill-opacity="0.13"/><rect x="8.9" y="0" width="3.21" height="520" fill="#808080" fill-opacity="0.09"/><rect x="15.3" y="0" width="3.21" height="520" fill="#808080" fill-opacity="0.43"/><rect x="18.5" y="0" width="3.21" height="520" fill="#808080" fill-opacity="0.44"/><rect x="28.1" y="0" width="3.21" height="520" fill="#808080" fill-opacity="0.28"/><rect x="44.2" y="0" width="3.21" height="520" fill="#808080" fill-opacity="0.18"/><rect x="47.4" y="0" width="3.21" height="520" fill="#808080" fill-opacity="0.46"/><rect x="53.8" y="0" width="3.21" height="520" fill="#808080" fill-opacity="0.45"/><rect x="57.0" y="0" width="3.21" height="520" fill="#808080" fill-opacity="0.14"/><rect x="60.2" y="0" width="3.21" height="520" fill="#808080" fill-opacity="0.40"/><rect x="63.4" y="0" width="3.21" height="520" fill="#808080" fill-opacity="0.32"/><rect x="69.8" y="0" width="3.21" height="520" fill="#808080" fill-opacity="0.19"/><rect x="79.4" y="0" width="3.21" height="520" fill="#808080" fill-opacity="0.06"/><rect x="82.7" y="0" width="3.21" height="520" fill="#808080" fill-opacity="0.28"/><rect x="85.9" y="0" width="3.21" height="520" fill="#808080" fill-opacity="0.14"/><rect x="92.3" y="0" width="3.21" height="520" fill="#808080" fill-opacity="0.34"/><rect x="95.5" y="0" width="3.21" height="520" fill="#808080" fill-opacity="0.41"/><rect x="101.9" y="0" width="3.21" height="520" fill="#808080" fill-opacity="0.09"/><rect x="105.1" y="0" width="3.21" height="520" fill="#808080" fill-opacity="0.19"/><rect x="108.3" y="0" width="3.21" height="520" fill="#808080" fill-opacity="0.40"/><rect x="114.7" y="0" width="3.21" height="520" fill="#808080" fill-opacity="0.14"/><rect x="117.9" y="0" width="3.21" height="520" fill="#808080" fill-opacity="0.47"/><rect x="121.2" y="0" width="3.21" height="520" fill="#808080" fill-opacity="0.17"/><rect x="124.4" y="0" width="3.21" height="520" fill="#808080" fill-opacity="0.24"/><rect x="127.6" y="0" width="3.21" height="520" fill="#808080" fill-opacity="0.29"/><rect x="130.8" y="0" width="3.21" height="520" fill="#808080" fill-opacity="0.11"/><rect x="137.2" y="0" width="3.21" height="520" fill="#808080" fill-opacity="0.16"/><rect x="140.4" y="0" width="3.21" height="520" fill="#808080" fill-opacity="0.12"/><rect x="146.8" y="0" width="3.21" height="520" fill="#808080" fill-opacity="0.35"/><rect x="150.0" y="0" width="3.21" height="520" fill="#808080" fill-opacity="0.05"/><rect x="153.2" y="0" width="3.21" height="520" fill="#808080" fill-opacity="0.10"/><rect x="156.4" y="0" width="3.21" height="520" fill="#808080" fill-opacity="0.27"/><rect x="159.6" y="0" width="3.21" height="520" fill="#808080" fill-opacity="0.32"/><rect x="162.9" y="0" width="3.21" height="520" fill="#808080" fill-opacity="0.39"/><rect x="166.1" y="0" width="3.21" height="520" fill="#808080" fill-opacity="0.19"/><rect x="172.5" y="0" width="3.21" height="520" fill="#808080" fill-opacity="0.35"/><rect x="175.7" y="0" width="3.21" height="520" fill="#808080" fill-opacity="0.41"/><rect x="178.9" y="0" width="3.21" height="520" fill="#808080" fill-opacity="0.24"/><rect x="182.1" y="0" width="3.21" height="520" fill="#808080" fill-opacity="0.28"/><rect x="185.3" y="0" width="3.21" height="520" fill="#808080" fill-opacity="0.12"/><rect x="188.5" y="0" width="3.21" height="520" fill="#808080" fill-opacity="0.11"/><rect x="-20" y="0" width="210" height="520" fill="url(#hf0)"/><rect x="-20" y="0" width="210" height="520" fill="url(#fade)" mask="url(#m0)"/></g><g clip-path="url(#c1)"><rect x="150" y="0" width="213" height="520" fill="#fff"/><g filter="url(#wob)" fill="#000"><polygon points="150,50 158,44 166,39 174,33 182,27 190,21 198,16 206,10 214,5 222,-0 230,-4 238,-4 246,-0 254,5 262,10 270,16 278,21 286,27 294,33 302,39 310,44 318,50 326,56 334,61 342,67 350,73 358,79 366,84 366,89 358,84 350,78 342,72 334,66 326,61 318,55 310,49 302,44 294,38 286,32 278,26 270,21 262,15 254,10 246,5 238,1 230,1 222,5 214,10 206,15 198,21 190,26 182,32 174,38 166,44 158,49 150,55"/><polygon points="150,60 158,54 166,49 174,43 182,37 190,31 198,26 206,20 214,15 222,10 230,6 238,6 246,10 254,15 262,20 270,26 278,31 286,37 294,43 302,49 310,54 318,60 326,66 334,71 342,77 350,83 358,89 366,94 366,99 358,94 350,88 342,82 334,76 326,71 318,65 310,59 302,54 294,48 286,42 278,36 270,31 262,25 254,20 246,15 238,11 230,11 222,15 214,20 206,25 198,31 190,36 182,42 174,48 166,54 158,59 150,65"/><polygon points="150,70 158,64 166,59 174,53 182,47 190,41 198,36 206,30 214,25 222,20 230,16 238,16 246,20 254,25 262,30 270,36 278,41 286,47 294,53 302,59 310,64 318,70 326,76 334,81 342,87 350,93 358,99 366,104 366,109 358,104 350,98 342,92 334,86 326,81 318,75 310,69 302,64 294,58 286,52 278,46 270,41 262,35 254,30 246,25 238,21 230,21 222,25 214,30 206,35 198,41 190,46 182,52 174,58 166,64 158,69 150,75"/><polygon points="150,80 158,74 166,69 174,63 182,57 190,51 198,46 206,40 214,35 222,30 230,26 238,26 246,30 254,35 262,40 270,46 278,51 286,57 294,63 302,69 310,74 318,80 326,86 334,91 342,97 350,103 358,109 366,114 366,119 358,114 350,108 342,102 334,96 326,91 318,85 310,79 302,74 294,68 286,62 278,56 270,51 262,45 254,40 246,35 238,31 230,31 222,35 214,40 206,45 198,51 190,56 182,62 174,68 166,74 158,79 150,85"/><polygon points="150,90 158,84 166,79 174,73 182,67 190,61 198,56 206,50 214,45 222,40 230,36 238,36 246,40 254,45 262,50 270,56 278,61 286,67 294,73 302,79 310,84 318,90 326,96 334,101 342,107 350,113 358,119 366,124 366,129 358,124 350,118 342,112 334,106 326,101 318,95 310,89 302,84 294,78 286,72 278,66 270,61 262,55 254,50 246,45 238,41 230,41 222,45 214,50 206,55 198,61 190,66 182,72 174,78 166,84 158,89 150,95"/><polygon points="150,100 158,94 166,89 174,83 182,77 190,71 198,66 206,60 214,55 222,50 230,46 238,46 246,50 254,55 262,60 270,66 278,71 286,77 294,83 302,89 310,94 318,100 326,106 334,111 342,117 350,123 358,129 366,134 366,139 358,134 350,128 342,122 334,116 326,111 318,105 310,99 302,94 294,88 286,82 278,76 270,71 262,65 254,60 246,55 238,51 230,51 222,55 214,60 206,65 198,71 190,76 182,82 174,88 166,94 158,99 150,105"/><polygon points="150,110 158,104 166,99 174,93 182,87 190,81 198,76 206,70 214,65 222,60 230,56 238,56 246,60 254,65 262,70 270,76 278,81 286,87 294,93 302,99 310,104 318,110 326,116 334,121 342,127 350,133 358,139 366,144 366,149 358,143 350,138 342,132 334,126 326,120 318,115 310,109 302,103 294,98 286,92 278,86 270,81 262,75 254,70 246,65 238,61 230,61 222,65 214,70 206,75 198,81 190,86 182,92 174,98 166,103 158,109 150,115"/><polygon points="150,119 158,114 166,108 174,102 182,97 190,91 198,86 206,80 214,75 222,70 230,66 238,66 246,70 254,75 262,80 270,86 278,91 286,97 294,102 302,108 310,114 318,119 326,125 334,131 342,137 350,142 358,148 366,154 366,158 358,153 350,147 342,141 334,136 326,130 318,124 310,119 302,113 294,107 286,102 278,96 270,90 262,85 254,80 246,75 238,71 230,71 222,75 214,80 206,85 198,90 190,96 182,102 174,107 166,113 158,119 150,124"/><polygon points="150,129 158,123 166,118 174,112 182,107 190,101 198,95 206,90 214,85 222,80 230,76 238,76 246,80 254,85 262,90 270,95 278,101 286,107 294,112 302,118 310,123 318,129 326,135 334,140 342,146 350,151 358,157 366,163 366,167 358,162 350,156 342,151 334,145 326,139 318,134 310,128 302,123 294,117 286,111 278,106 270,100 262,95 254,90 246,85 238,81 230,81 222,85 214,90 206,95 198,100 190,106 182,111 174,117 166,123 158,128 150,134"/><polygon points="150,138 158,133 166,127 174,122 182,116 190,111 198,105 206,100 214,94 222,89 230,86 238,86 246,89 254,94 262,100 270,105 278,111 286,116 294,122 302,127 310,133 318,138 326,144 334,150 342,155 350,161 358,166 366,172 366,176 358,171 350,165 342,160 334,154 326,149 318,143 310,138 302,132 294,127 286,121 278,116 270,110 262,105 254,99 246,94 238,91 230,91 222,94 214,99 206,105 198,110 190,116 182,121 174,127 166,132 158,138 150,143"/><polygon points="150,148 158,142 166,137 174,131 182,126 190,120 198,115 206,110 214,104 222,99 230,96 238,96 246,99 254,104 262,110 270,115 278,120 286,126 294,131 302,137 310,142 318,148 326,153 334,159 342,164 350,170 358,176 366,181 366,186 358,180 350,175 342,169 334,164 326,158 318,153 310,147 302,142 294,136 286,131 278,125 270,120 262,115 254,109 246,104 238,101 230,101 222,104 214,109 206,115 198,120 190,125 182,131 174,136 166,142 158,147 150,153"/><polygon points="150,157 158,152 166,146 174,141 182,136 190,130 198,125 206,119 214,114 222,109 230,106 238,106 246,109 254,114 262,119 270,125 278,130 286,136 294,141 302,146 310,152 318,157 326,163 334,168 342,174 350,179 358,185 366,190 366,195 358,189 350,184 342,178 334,173 326,168 318,162 310,157 302,151 294,146 286,140 278,135 270,130 262,124 254,119 246,114 238,111 230,111 222,114 214,119 206,124 198,130 190,135 182,140 174,146 166,151 158,157 150,162"/><polygon points="150,167 158,161 166,156 174,151 182,145 190,140 198,135 206,129 214,124 222,119 230,116 238,116 246,119 254,124 262,129 270,135 278,140 286,145 294,151 302,156 310,161 318,167 326,172 334,178 342,183 350,189 358,194 366,199 366,204 358,199 350,193 342,188 334,182 326,177 318,172 310,166 302,161 294,155 286,150 278,145 270,140 262,134 254,129 246,124 238,121 230,121 222,124 214,129 206,134 198,140 190,145 182,150 174,155 166,161 158,166 150,172"/><polygon points="150,176 158,171 166,166 174,160 182,155 190,150 198,144 206,139 214,134 222,129 230,126 238,126 246,129 254,134 262,139 270,144 278,150 286,155 294,160 302,166 310,171 318,176 326,182 334,187 342,192 350,198 358,203 366,209 366,213 358,208 350,202 342,197 334,192 326,186 318,181 310,176 302,170 294,165 286,160 278,155 270,149 262,144 254,139 246,134 238,131 230,131 222,134 214,139 206,144 198,149 190,155 182,160 174,165 166,170 158,176 150,181"/><polygon points="150,186 158,181 166,175 174,170 182,165 190,159 198,154 206,149 214,144 222,139 230,136 238,136 246,139 254,144 262,149 270,154 278,159 286,165 294,170 302,175 310,181 318,186 326,191 334,196 342,202 350,207 358,212 366,218 366,222 358,217 350,212 342,206 334,201 326,196 318,191 310,185 302,180 294,175 286,170 278,164 270,159 262,154 254,149 246,144 238,141 230,141 222,144 214,149 206,154 198,159 190,164 182,170 174,175 166,180 158,185 150,191"/><polygon points="150,195 158,190 166,185 174,180 182,174 190,169 198,164 206,159 214,154 222,149 230,146 238,146 246,149 254,154 262,159 270,164 278,169 286,174 294,180 302,185 310,190 318,195 326,201 334,206 342,211 350,216 358,222 366,227 366,231 358,226 350,221 342,216 334,210 326,205 318,200 310,195 302,190 294,184 286,179 278,174 270,169 262,164 254,159 246,154 238,151 230,151 222,154 214,159 206,164 198,169 190,174 182,179 174,184 166,190 158,195 150,200"/><polygon points="150,205 158,200 166,194 174,189 182,184 190,179 198,174 206,169 214,164 222,159 230,156 238,156 246,159 254,164 262,169 270,174 278,179 286,184 294,189 302,194 310,200 318,205 326,210 334,215 342,220 350,226 358,231 366,236 366,241 358,235 350,230 342,225 334,220 326,215 318,210 310,204 302,199 294,194 286,189 278,184 270,179 262,174 254,169 246,164 238,161 230,161 222,164 214,169 206,174 198,179 190,184 182,189 174,194 166,199 158,204 150,210"/><polygon points="150,214 158,209 166,204 174,199 182,194 190,189 198,184 206,179 214,174 222,169 230,166 238,166 246,169 254,174 262,179 270,184 278,189 286,194 294,199 302,204 310,209 318,214 326,219 334,225 342,230 350,235 358,240 366,245 366,250 358,245 350,239 342,234 334,229 326,224 318,219 310,214 302,209 294,204 286,199 278,194 270,189 262,184 254,179 246,174 238,171 230,171 222,174 214,179 206,184 198,189 190,194 182,199 174,204 166,209 158,214 150,219"/><polygon points="150,224 158,219 166,214 174,209 182,203 190,198 198,193 206,188 214,184 222,179 230,176 238,176 246,179 254,184 262,188 270,193 278,198 286,203 294,209 302,214 310,219 318,224 326,229 334,234 342,239 350,244 358,249 366,254 366,259 358,254 350,249 342,244 334,239 326,234 318,228 310,223 302,218 294,213 286,208 278,203 270,198 262,193 254,189 246,184 238,181 230,181 222,184 214,189 206,193 198,198 190,203 182,208 174,213 166,218 158,223 150,228"/><polygon points="150,233 158,228 166,223 174,218 182,213 190,208 198,203 206,198 214,194 222,189 230,186 238,186 246,189 254,194 262,198 270,203 278,208 286,213 294,218 302,223 310,228 318,233 326,238 334,243 342,248 350,253 358,258 366,263 366,268 358,263 350,258 342,253 334,248 326,243 318,238 310,233 302,228 294,223 286,218 278,213 270,208 262,203 254,199 246,194 238,191 230,191 222,194 214,199 206,203 198,208 190,213 182,218 174,223 166,228 158,233 150,238"/><polygon points="150,243 158,238 166,233 174,228 182,223 190,218 198,213 206,208 214,203 222,199 230,196 238,196 246,199 254,203 262,208 270,213 278,218 286,223 294,228 302,233 310,238 318,243 326,248 334,253 342,258 350,263 358,268 366,273 366,277 358,272 350,267 342,262 334,257 326,252 318,247 310,243 302,238 294,233 286,228 278,223 270,218 262,213 254,208 246,204 238,201 230,201 222,204 214,208 206,213 198,218 190,223 182,228 174,233 166,238 158,243 150,247"/><polygon points="150,252 158,247 166,242 174,237 182,233 190,228 198,223 206,218 214,213 222,209 230,206 238,206 246,209 254,213 262,218 270,223 278,228 286,233 294,237 302,242 310,247 318,252 326,257 334,262 342,267 350,272 358,277 366,282 366,286 358,281 350,277 342,272 334,267 326,262 318,257 310,252 302,247 294,242 286,237 278,233 270,228 262,223 254,218 246,214 238,211 230,211 222,214 214,218 206,223 198,228 190,233 182,237 174,242 166,247 158,252 150,257"/><polygon points="150,262 158,257 166,252 174,247 182,242 190,237 198,233 206,228 214,223 222,219 230,216 238,216 246,219 254,223 262,228 270,233 278,237 286,242 294,247 302,252 310,257 318,262 326,267 334,271 342,276 350,281 358,286 366,291 366,295 358,291 350,286 342,281 334,276 326,271 318,266 310,262 302,257 294,252 286,247 278,242 270,238 262,233 254,228 246,224 238,221 230,221 222,224 214,228 206,233 198,238 190,242 182,247 174,252 166,257 158,262 150,266"/><polygon points="150,271 158,266 166,262 174,257 182,252 190,247 198,242 206,238 214,233 222,229 230,226 238,226 246,229 254,233 262,238 270,242 278,247 286,252 294,257 302,262 310,266 318,271 326,276 334,281 342,286 350,290 358,295 366,300 366,305 358,300 350,295 342,290 334,285 326,281 318,276 310,271 302,266 294,262 286,257 278,252 270,247 262,243 254,238 246,234 238,231 230,231 222,234 214,238 206,243 198,247 190,252 182,257 174,262 166,266 158,271 150,276"/><polygon points="150,281 158,276 166,271 174,266 182,262 190,257 198,252 206,248 214,243 222,239 230,236 238,236 246,239 254,243 262,248 270,252 278,257 286,262 294,266 302,271 310,276 318,281 326,285 334,290 342,295 350,300 358,304 366,309 366,314 358,309 350,304 342,300 334,295 326,290 318,285 310,281 302,276 294,271 286,267 278,262 270,257 262,253 254,248 246,244 238,241 230,241 222,244 214,248 206,253 198,257 190,262 182,267 174,271 166,276 158,281 150,285"/><polygon points="150,290 158,285 166,281 174,276 182,271 190,267 198,262 206,257 214,253 222,249 230,246 238,246 246,249 254,253 262,257 270,262 278,267 286,271 294,276 302,281 310,285 318,290 326,295 334,300 342,304 350,309 358,314 366,318 366,323 358,318 350,314 342,309 334,304 326,300 318,295 310,290 302,286 294,281 286,276 278,272 270,267 262,262 254,258 246,254 238,251 230,251 222,254 214,258 206,262 198,267 190,272 182,276 174,281 166,286 158,290 150,295"/><polygon points="150,300 158,295 166,290 174,286 182,281 190,276 198,272 206,267 214,263 222,259 230,256 238,256 246,259 254,263 262,267 270,272 278,276 286,281 294,286 302,290 310,295 318,300 326,304 334,309 342,314 350,318 358,323 366,328 366,332 358,327 350,323 342,318 334,314 326,309 318,304 310,300 302,295 294,290 286,286 278,281 270,277 262,272 254,268 246,264 238,261 230,261 222,264 214,268 206,272 198,277 190,281 182,286 174,290 166,295 158,300 150,304"/><polygon points="150,309 158,304 166,300 174,295 182,291 190,286 198,282 206,277 214,273 222,269 230,266 238,266 246,269 254,273 262,277 270,282 278,286 286,291 294,295 302,300 310,304 318,309 326,314 334,318 342,323 350,327 358,332 366,337 366,341 358,337 350,332 342,328 334,323 326,318 318,314 310,309 302,305 294,300 286,296 278,291 270,287 262,282 254,278 246,274 238,271 230,271 222,274 214,278 206,282 198,287 190,291 182,296 174,300 166,305 158,309 150,314"/><polygon points="150,319 158,314 166,309 174,305 182,300 190,296 198,291 206,287 214,283 222,279 230,276 238,276 246,279 254,283 262,287 270,291 278,296 286,300 294,305 302,309 310,314 318,319 326,323 334,328 342,332 350,337 358,341 366,346 366,350 358,346 350,341 342,337 334,332 326,328 318,323 310,319 302,314 294,310 286,305 278,301 270,296 262,292 254,288 246,284 238,281 230,281 222,284 214,288 206,292 198,296 190,301 182,305 174,310 166,314 158,319 150,323"/><polygon points="150,328 158,324 166,319 174,315 182,310 190,306 198,301 206,297 214,293 222,289 230,286 238,286 246,289 254,293 262,297 270,301 278,306 286,310 294,315 302,319 310,324 318,328 326,333 334,337 342,342 350,346 358,351 366,355 366,360 358,355 350,351 342,346 334,342 326,337 318,333 310,328 302,324 294,319 286,315 278,311 270,306 262,302 254,298 246,294 238,291 230,291 222,294 214,298 206,302 198,306 190,311 182,315 174,319 166,324 158,328 150,333"/><polygon points="150,338 158,333 166,329 174,324 182,320 190,315 198,311 206,307 214,303 222,299 230,296 238,296 246,299 254,303 262,307 270,311 278,315 286,320 294,324 302,329 310,333 318,338 326,342 334,346 342,351 350,355 358,360 366,364 366,369 358,364 350,360 342,355 334,351 326,347 318,342 310,338 302,333 294,329 286,325 278,320 270,316 262,312 254,307 246,304 238,301 230,301 222,304 214,307 206,312 198,316 190,320 182,325 174,329 166,333 158,338 150,342"/><polygon points="150,347 158,343 166,338 174,334 182,330 190,325 198,321 206,317 214,312 222,309 230,306 238,306 246,309 254,312 262,317 270,321 278,325 286,330 294,334 302,338 310,343 318,347 326,351 334,356 342,360 350,365 358,369 366,373 366,378 358,374 350,369 342,365 334,360 326,356 318,352 310,347 302,343 294,339 286,334 278,330 270,326 262,322 254,317 246,314 238,311 230,311 222,314 214,317 206,322 198,326 190,330 182,334 174,339 166,343 158,347 150,352"/><polygon points="150,356 158,352 166,348 174,344 182,339 190,335 198,331 206,326 214,322 222,318 230,316 238,316 246,318 254,322 262,326 270,331 278,335 286,339 294,344 302,348 310,352 318,356 326,361 334,365 342,369 350,374 358,378 366,382 366,387 358,383 350,378 342,374 334,370 326,366 318,361 310,357 302,353 294,348 286,344 278,340 270,336 262,331 254,327 246,323 238,321 230,321 222,323 214,327 206,331 198,336 190,340 182,344 174,348 166,353 158,357 150,361"/><polygon points="150,366 158,362 166,357 174,353 182,349 190,345 198,340 206,336 214,332 222,328 230,326 238,326 246,328 254,332 262,336 270,340 278,345 286,349 294,353 302,357 310,362 318,366 326,370 334,374 342,379 350,383 358,387 366,392 366,396 358,392 350,388 342,383 334,379 326,375 318,371 310,366 302,362 294,358 286,354 278,350 270,345 262,341 254,337 246,333 238,331 230,331 222,333 214,337 206,341 198,345 190,350 182,354 174,358 166,362 158,366 150,371"/><polygon points="150,375 158,371 166,367 174,363 182,359 190,354 198,350 206,346 214,342 222,338 230,335 238,335 246,338 254,342 262,346 270,350 278,354 286,359 294,363 302,367 310,371 318,375 326,380 334,384 342,388 350,392 358,397 366,401 366,405 358,401 350,397 342,393 334,389 326,384 318,380 310,376 302,372 294,368 286,363 278,359 270,355 262,351 254,347 246,343 238,340 230,340 222,343 214,347 206,351 198,355 190,359 182,363 174,368 166,372 158,376 150,380"/><polygon points="150,385 158,381 166,377 174,372 182,368 190,364 198,360 206,356 214,352 222,348 230,345 238,345 246,348 254,352 262,356 270,360 278,364 286,368 294,372 302,377 310,381 318,385 326,389 334,393 342,397 350,402 358,406 366,410 366,415 358,410 350,406 342,402 334,398 326,394 318,390 310,386 302,381 294,377 286,373 278,369 270,365 262,361 254,357 246,353 238,350 230,350 222,353 214,357 206,361 198,365 190,369 182,373 174,377 166,381 158,386 150,390"/><polygon points="150,394 158,390 166,386 174,382 182,378 190,374 198,370 206,366 214,362 222,358 230,355 238,355 246,358 254,362 262,366 270,370 278,374 286,378 294,382 302,386 310,390 318,394 326,399 334,403 342,407 350,411 358,415 366,419 366,424 358,420 350,415 342,411 334,407 326,403 318,399 310,395 302,391 294,387 286,383 278,379 270,375 262,371 254,367 246,363 238,360 230,360 222,363 214,367 206,371 198,375 190,379 182,383 174,387 166,391 158,395 150,399"/><polygon points="150,404 158,400 166,396 174,392 182,388 190,384 198,380 206,376 214,372 222,368 230,365 238,365 246,368 254,372 262,376 270,380 278,384 286,388 294,392 302,396 310,400 318,404 326,408 334,412 342,416 350,420 358,424 366,428 366,433 358,429 350,425 342,421 334,417 326,413 318,409 310,405 302,401 294,397 286,393 278,389 270,385 262,381 254,377 246,373 238,370 230,370 222,373 214,377 206,381 198,385 190,389 182,393 174,397 166,401 158,405 150,409"/><polygon points="150,413 158,409 166,405 174,401 182,397 190,393 198,390 206,386 214,382 222,378 230,375 238,375 246,378 254,382 262,386 270,390 278,393 286,397 294,401 302,405 310,409 318,413 326,417 334,421 342,425 350,429 358,433 366,437 366,442 358,438 350,434 342,430 334,426 326,422 318,418 310,414 302,410 294,406 286,402 278,398 270,394 262,391 254,387 246,383 238,380 230,380 222,383 214,387 206,391 198,394 190,398 182,402 174,406 166,410 158,414 150,418"/><polygon points="150,423 158,419 166,415 174,411 182,407 190,403 198,399 206,395 214,392 222,388 230,385 238,385 246,388 254,392 262,395 270,399 278,403 286,407 294,411 302,415 310,419 318,423 326,427 334,431 342,435 350,439 358,443 366,447 366,451 358,447 350,443 342,439 334,435 326,431 318,428 310,424 302,420 294,416 286,412 278,408 270,404 262,400 254,397 246,393 238,390 230,390 222,393 214,397 206,400 198,404 190,408 182,412 174,416 166,420 158,424 150,428"/><polygon points="150,432 158,428 166,425 174,421 182,417 190,413 198,409 206,405 214,402 222,398 230,395 238,395 246,398 254,402 262,405 270,409 278,413 286,417 294,421 302,425 310,428 318,432 326,436 334,440 342,444 350,448 358,452 366,456 366,460 358,456 350,453 342,449 334,445 326,441 318,437 310,433 302,429 294,425 286,422 278,418 270,414 262,410 254,407 246,403 238,400 230,400 222,403 214,407 206,410 198,414 190,418 182,422 174,425 166,429 158,433 150,437"/><polygon points="150,442 158,438 166,434 174,430 182,426 190,423 198,419 206,415 214,412 222,408 230,405 238,405 246,408 254,412 262,415 270,419 278,423 286,426 294,430 302,434 310,438 318,442 326,446 334,449 342,453 350,457 358,461 366,465 366,469 358,466 350,462 342,458 334,454 326,450 318,447 310,443 302,439 294,435 286,431 278,428 270,424 262,420 254,416 246,413 238,410 230,410 222,413 214,416 206,420 198,424 190,428 182,431 174,435 166,439 158,443 150,447"/><polygon points="150,451 158,447 166,444 174,440 182,436 190,432 198,429 206,425 214,421 222,418 230,415 238,415 246,418 254,421 262,425 270,429 278,432 286,436 294,440 302,444 310,447 318,451 326,455 334,459 342,463 350,466 358,470 366,474 366,479 358,475 350,471 342,467 334,464 326,460 318,456 310,452 302,449 294,445 286,441 278,437 270,434 262,430 254,426 246,423 238,420 230,420 222,423 214,426 206,430 198,434 190,437 182,441 174,445 166,449 158,452 150,456"/><polygon points="150,461 158,457 166,453 174,450 182,446 190,442 198,439 206,435 214,431 222,428 230,425 238,425 246,428 254,431 262,435 270,439 278,442 286,446 294,450 302,453 310,457 318,461 326,464 334,468 342,472 350,476 358,479 366,483 366,488 358,484 350,480 342,477 334,473 326,469 318,465 310,462 302,458 294,454 286,451 278,447 270,443 262,440 254,436 246,433 238,430 230,430 222,433 214,436 206,440 198,443 190,447 182,451 174,454 166,458 158,462 150,465"/><polygon points="150,470 158,467 166,463 174,459 182,456 190,452 198,448 206,445 214,441 222,438 230,435 238,435 246,438 254,441 262,445 270,448 278,452 286,456 294,459 302,463 310,467 318,470 326,474 334,478 342,481 350,485 358,489 366,492 366,497 358,493 350,490 342,486 334,482 326,479 318,475 310,471 302,468 294,464 286,460 278,457 270,453 262,450 254,446 246,443 238,440 230,440 222,443 214,446 206,450 198,453 190,457 182,460 174,464 166,468 158,471 150,475"/><polygon points="150,480 158,476 166,472 174,469 182,465 190,462 198,458 206,455 214,451 222,448 230,445 238,445 246,448 254,451 262,455 270,458 278,462 286,465 294,469 302,472 310,476 318,480 326,483 334,487 342,491 350,494 358,498 366,501 366,506 358,502 350,499 342,495 334,492 326,488 318,484 310,481 302,477 294,474 286,470 278,467 270,463 262,460 254,456 246,453 238,450 230,450 222,453 214,456 206,460 198,463 190,467 182,470 174,474 166,477 158,481 150,484"/><polygon points="150,489 158,486 166,482 174,479 182,475 190,471 198,468 206,464 214,461 222,458 230,455 238,455 246,458 254,461 262,464 270,468 278,471 286,475 294,479 302,482 310,486 318,489 326,493 334,496 342,500 350,503 358,507 366,511 366,515 358,512 350,508 342,505 334,501 326,497 318,494 310,490 302,487 294,483 286,480 278,476 270,473 262,469 254,466 246,463 238,460 230,460 222,463 214,466 206,469 198,473 190,476 182,480 174,483 166,487 158,490 150,494"/><polygon points="150,499 158,495 166,492 174,488 182,485 190,481 198,478 206,474 214,471 222,468 230,465 238,465 246,468 254,471 262,474 270,478 278,481 286,485 294,488 302,492 310,495 318,499 326,502 334,506 342,509 350,513 358,516 366,520 366,524 358,521 350,517 342,514 334,510 326,507 318,503 310,500 302,496 294,493 286,490 278,486 270,483 262,479 254,476 246,473 238,470 230,470 222,473 214,476 206,479 198,483 190,486 182,490 174,493 166,496 158,500 150,503"/><polygon points="150,508 158,505 166,501 174,498 182,494 190,491 198,488 206,484 214,481 222,478 230,475 238,475 246,478 254,481 262,484 270,488 278,491 286,494 294,498 302,501 310,505 318,508 326,512 334,515 342,519 350,522 358,525 366,529 366,534 358,530 350,527 342,523 334,520 326,516 318,513 310,509 302,506 294,503 286,499 278,496 270,492 262,489 254,486 246,483 238,480 230,480 222,483 214,486 206,489 198,492 190,496 182,499 174,503 166,506 158,509 150,513"/><polygon points="150,518 158,514 166,511 174,507 182,504 190,501 198,497 206,494 214,491 222,488 230,485 238,485 246,488 254,491 262,494 270,497 278,501 286,504 294,507 302,511 310,514 318,518 326,521 334,524 342,528 350,531 358,535 366,538 366,543 358,539 350,536 342,533 334,529 326,526 318,522 310,519 302,516 294,512 286,509 278,506 270,502 262,499 254,496 246,493 238,490 230,490 222,493 214,496 206,499 198,502 190,506 182,509 174,512 166,516 158,519 150,522"/><polygon points="150,527 158,524 166,520 174,517 182,514 190,510 198,507 206,504 214,501 222,498 230,495 238,495 246,498 254,501 262,504 270,507 278,510 286,514 294,517 302,520 310,524 318,527 326,530 334,534 342,537 350,541 358,544 366,547 366,552 358,548 350,545 342,542 334,538 326,535 318,532 310,529 302,525 294,522 286,519 278,515 270,512 262,509 254,506 246,503 238,500 230,500 222,503 214,506 206,509 198,512 190,515 182,519 174,522 166,525 158,529 150,532"/><polygon points="150,537 158,533 166,530 174,527 182,523 190,520 198,517 206,514 214,511 222,508 230,505 238,505 246,508 254,511 262,514 270,517 278,520 286,523 294,527 302,530 310,533 318,537 326,540 334,543 342,546 350,550 358,553 366,556 366,561 358,558 350,554 342,551 334,548 326,545 318,541 310,538 302,535 294,532 286,528 278,525 270,522 262,519 254,516 246,513 238,510 230,510 222,513 214,516 206,519 198,522 190,525 182,528 174,532 166,535 158,538 150,541"/><polygon points="150,546 158,543 166,540 174,536 182,533 190,530 198,527 206,524 214,521 222,518 230,515 238,515 246,518 254,521 262,524 270,527 278,530 286,533 294,536 302,540 310,543 318,546 326,549 334,553 342,556 350,559 358,562 366,566 366,570 358,567 350,564 342,560 334,557 326,554 318,551 310,548 302,544 294,541 286,538 278,535 270,532 262,529 254,525 246,523 238,520 230,520 222,523 214,525 206,529 198,532 190,535 182,538 174,541 166,544 158,548 150,551"/></g><rect x="150.0" y="0" width="3.21" height="520" fill="#808080" fill-opacity="0.15"/><rect x="156.4" y="0" width="3.21" height="520" fill="#808080" fill-opacity="0.46"/><rect x="159.6" y="0" width="3.21" height="520" fill="#808080" fill-opacity="0.42"/><rect x="162.8" y="0" width="3.21" height="520" fill="#808080" fill-opacity="0.09"/><rect x="166.0" y="0" width="3.21" height="520" fill="#808080" fill-opacity="0.20"/><rect x="178.9" y="0" width="3.21" height="520" fill="#808080" fill-opacity="0.22"/><rect x="185.3" y="0" width="3.21" height="520" fill="#808080" fill-opacity="0.47"/><rect x="198.1" y="0" width="3.21" height="520" fill="#808080" fill-opacity="0.28"/><rect x="201.3" y="0" width="3.21" height="520" fill="#808080" fill-opacity="0.05"/><rect x="204.5" y="0" width="3.21" height="520" fill="#808080" fill-opacity="0.10"/><rect x="211.0" y="0" width="3.21" height="520" fill="#808080" fill-opacity="0.19"/><rect x="214.2" y="0" width="3.21" height="520" fill="#808080" fill-opacity="0.07"/><rect x="220.6" y="0" width="3.21" height="520" fill="#808080" fill-opacity="0.08"/><rect x="230.2" y="0" width="3.21" height="520" fill="#808080" fill-opacity="0.33"/><rect x="233.4" y="0" width="3.21" height="520" fill="#808080" fill-opacity="0.21"/><rect x="236.6" y="0" width="3.21" height="520" fill="#808080" fill-opacity="0.20"/><rect x="239.8" y="0" width="3.21" height="520" fill="#808080" fill-opacity="0.38"/><rect x="243.0" y="0" width="3.21" height="520" fill="#808080" fill-opacity="0.06"/><rect x="246.2" y="0" width="3.21" height="520" fill="#808080" fill-opacity="0.06"/><rect x="249.4" y="0" width="3.21" height="520" fill="#808080" fill-opacity="0.08"/><rect x="252.7" y="0" width="3.21" height="520" fill="#808080" fill-opacity="0.07"/><rect x="255.9" y="0" width="3.21" height="520" fill="#808080" fill-opacity="0.21"/><rect x="262.3" y="0" width="3.21" height="520" fill="#808080" fill-opacity="0.09"/><rect x="265.5" y="0" width="3.21" height="520" fill="#808080" fill-opacity="0.13"/><rect x="275.1" y="0" width="3.21" height="520" fill="#808080" fill-opacity="0.23"/><rect x="281.5" y="0" width="3.21" height="520" fill="#808080" fill-opacity="0.14"/><rect x="300.8" y="0" width="3.21" height="520" fill="#808080" fill-opacity="0.22"/><rect x="304.0" y="0" width="3.21" height="520" fill="#808080" fill-opacity="0.25"/><rect x="307.2" y="0" width="3.21" height="520" fill="#808080" fill-opacity="0.05"/><rect x="310.4" y="0" width="3.21" height="520" fill="#808080" fill-opacity="0.20"/><rect x="313.6" y="0" width="3.21" height="520" fill="#808080" fill-opacity="0.10"/><rect x="316.8" y="0" width="3.21" height="520" fill="#808080" fill-opacity="0.11"/><rect x="320.0" y="0" width="3.21" height="520" fill="#808080" fill-opacity="0.37"/><rect x="326.4" y="0" width="3.21" height="520" fill="#808080" fill-opacity="0.37"/><rect x="329.6" y="0" width="3.21" height="520" fill="#808080" fill-opacity="0.22"/><rect x="332.9" y="0" width="3.21" height="520" fill="#808080" fill-opacity="0.22"/><rect x="348.9" y="0" width="3.21" height="520" fill="#808080" fill-opacity="0.44"/><rect x="352.1" y="0" width="3.21" height="520" fill="#808080" fill-opacity="0.37"/><rect x="355.3" y="0" width="3.21" height="520" fill="#808080" fill-opacity="0.34"/><rect x="361.7" y="0" width="3.21" height="520" fill="#808080" fill-opacity="0.23"/><rect x="150" y="0" width="213" height="520" fill="url(#hf1)"/><rect x="150" y="0" width="213" height="520" fill="url(#fade)" mask="url(#m1)"/></g><g clip-path="url(#c2)"><rect x="323" y="0" width="232" height="520" fill="#fff"/><g filter="url(#wob)" fill="#000"><polygon points="323,30 331,24 339,19 347,13 355,7 363,2 371,-4 379,-10 387,-16 395,-21 403,-27 411,-32 419,-36 427,-37 435,-33 443,-28 451,-22 459,-17 467,-11 475,-6 483,0 491,6 499,12 507,17 515,23 523,29 531,34 539,40 547,46 555,52 555,57 547,51 539,45 531,39 523,34 515,28 507,22 499,17 491,11 483,5 475,-1 467,-6 459,-12 451,-17 443,-23 435,-28 427,-32 419,-31 411,-27 403,-22 395,-16 387,-11 379,-5 371,1 363,7 355,12 347,18 339,24 331,29 323,35"/><polygon points="323,40 331,34 339,29 347,23 355,17 363,12 371,6 379,0 387,-6 395,-11 403,-17 411,-22 419,-26 427,-27 435,-23 443,-18 451,-12 459,-7 467,-1 475,4 483,10 491,16 499,22 507,27 515,33 523,39 531,44 539,50 547,56 555,62 555,67 547,61 539,55 531,49 523,44 515,38 507,32 499,27 491,21 483,15 475,9 467,4 459,-2 451,-7 443,-13 435,-18 427,-22 419,-21 411,-17 403,-12 395,-6 387,-1 379,5 371,11 363,17 355,22 347,28 339,34 331,39 323,45"/><polygon points="323,50 331,44 339,39 347,33 355,27 363,22 371,16 379,10 387,4 395,-1 403,-7 411,-12 419,-16 427,-17 435,-13 443,-8 451,-2 459,3 467,9 475,14 483,20 491,26 499,32 507,37 515,43 523,49 531,54 539,60 547,66 555,72 555,77 547,71 539,65 531,59 523,54 515,48 507,42 499,37 491,31 483,25 475,19 467,14 459,8 451,3 443,-3 435,-8 427,-12 419,-11 411,-7 403,-2 395,4 387,9 379,15 371,21 363,27 355,32 347,38 339,44 331,49 323,55"/><polygon points="323,60 331,54 339,49 347,43 355,37 363,32 371,26 379,20 387,14 395,9 403,3 411,-2 419,-6 427,-7 435,-3 443,2 451,8 459,13 467,19 475,24 483,30 491,36 499,42 507,47 515,53 523,59 531,64 539,70 547,76 555,82 555,87 547,81 539,75 531,69 523,64 515,58 507,52 499,47 491,41 483,35 475,29 467,24 459,18 451,13 443,7 435,2 427,-2 419,-1 411,3 403,8 395,14 387,19 379,25 371,31 363,37 355,42 347,48 339,54 331,59 323,65"/><polygon points="323,70 331,64 339,59 347,53 355,47 363,42 371,36 379,30 387,24 395,19 403,13 411,8 419,4 427,3 435,7 443,12 451,18 459,23 467,29 475,34 483,40 491,46 499,52 507,57 515,63 523,69 531,74 539,80 547,86 555,92 555,97 547,91 539,85 531,79 523,74 515,68 507,62 499,57 491,51 483,45 475,39 467,34 459,28 451,23 443,17 435,12 427,8 419,9 411,13 403,18 395,24 387,29 379,35 371,41 363,47 355,52 347,58 339,64 331,69 323,75"/><polygon points="323,80 331,74 339,69 347,63 355,57 363,52 371,46 379,40 387,34 395,29 403,23 411,18 419,14 427,13 435,17 443,22 451,28 459,33 467,39 475,44 483,50 491,56 499,62 507,67 515,73 523,79 531,84 539,90 547,96 555,102 555,107 547,101 539,95 531,89 523,84 515,78 507,72 499,67 491,61 483,55 475,49 467,44 459,38 451,33 443,27 435,22 427,18 419,19 411,23 403,28 395,34 387,39 379,45 371,51 363,57 355,62 347,68 339,74 331,79 323,85"/><polygon points="323,90 331,84 339,79 347,73 355,67 363,62 371,56 379,50 387,44 395,39 403,33 411,28 419,24 427,23 435,27 443,32 451,38 459,43 467,49 475,54 483,60 491,66 499,72 507,77 515,83 523,89 531,94 539,100 547,106 555,112 555,116 547,111 539,105 531,99 523,93 515,88 507,82 499,76 491,71 483,65 475,59 467,54 459,48 451,42 443,37 435,32 427,28 419,29 411,33 403,38 395,44 387,49 379,55 371,61 363,66 355,72 347,78 339,83 331,89 323,95"/><polygon points="323,100 331,94 339,88 347,83 355,77 363,71 371,66 379,60 387,54 395,49 403,43 411,38 419,34 427,33 435,37 443,42 451,47 459,53 467,58 475,64 483,70 491,75 499,81 507,87 515,92 523,98 531,104 539,110 547,115 555,121 555,125 547,120 539,114 531,108 523,103 515,97 507,92 499,86 491,80 483,75 475,69 467,63 459,58 451,52 443,47 435,42 427,38 419,39 411,43 403,48 395,54 387,59 379,65 371,70 363,76 355,82 347,87 339,93 331,99 323,104"/><polygon points="323,109 331,103 339,98 347,92 355,86 363,81 371,75 379,70 387,64 395,59 403,53 411,48 419,44 427,43 435,47 443,52 451,57 459,63 467,68 475,74 483,79 491,85 499,91 507,96 515,102 523,108 531,113 539,119 547,124 555,130 555,135 547,129 539,123 531,118 523,112 515,107 507,101 499,95 491,90 483,84 475,79 467,73 459,68 451,62 443,57 435,52 427,48 419,49 411,53 403,58 395,64 387,69 379,75 371,80 363,86 355,91 347,97 339,102 331,108 323,114"/><polygon points="323,118 331,113 339,107 347,102 355,96 363,90 371,85 379,79 387,74 395,68 403,63 411,58 419,54 427,53 435,57 443,62 451,67 459,73 467,78 475,84 483,89 491,95 499,100 507,106 515,111 523,117 531,122 539,128 547,134 555,139 555,144 547,138 539,133 531,127 523,122 515,116 507,110 499,105 491,99 483,94 475,88 467,83 459,77 451,72 443,67 435,62 427,58 419,59 411,63 403,68 395,73 387,79 379,84 371,90 363,95 355,101 347,106 339,112 331,117 323,123"/><polygon points="323,128 331,122 339,117 347,111 355,106 363,100 371,95 379,89 387,84 395,78 403,73 411,68 419,64 427,63 435,67 443,72 451,77 459,82 467,88 475,93 483,99 491,104 499,110 507,115 515,121 523,126 531,132 539,137 547,143 555,148 555,153 547,147 539,142 531,136 523,131 515,125 507,120 499,114 491,109 483,104 475,98 467,93 459,87 451,82 443,77 435,72 427,68 419,69 411,73 403,78 395,83 387,89 379,94 371,99 363,105 355,110 347,116 339,121 331,127 323,132"/><polygon points="323,137 331,132 339,126 347,121 355,115 363,110 371,104 379,99 387,93 395,88 403,83 411,78 419,74 427,73 435,77 443,82 451,87 459,92 467,98 475,103 483,108 491,114 499,119 507,125 515,130 523,136 531,141 539,147 547,152 555,158 555,162 547,157 539,151 531,146 523,140 515,135 507,129 499,124 491,119 483,113 475,108 467,102 459,97 451,92 443,87 435,82 427,78 419,79 411,83 403,88 395,93 387,98 379,104 371,109 363,115 355,120 347,125 339,131 331,136 323,142"/><polygon points="323,146 331,141 339,136 347,130 355,125 363,119 371,114 379,109 387,103 395,98 403,93 411,88 419,84 427,83 435,87 443,92 451,97 459,102 467,107 475,113 483,118 491,123 499,129 507,134 515,140 523,145 531,150 539,156 547,161 555,167 555,171 547,166 539,160 531,155 523,150 515,144 507,139 499,134 491,128 483,123 475,117 467,112 459,107 451,102 443,97 435,92 427,88 419,89 411,93 403,98 395,103 387,108 379,113 371,119 363,124 355,130 347,135 339,140 331,146 323,151"/><polygon points="323,156 331,150 339,145 347,140 355,134 363,129 371,124 379,118 387,113 395,108 403,103 411,98 419,94 427,93 435,97 443,101 451,107 459,112 467,117 475,122 483,128 491,133 499,138 507,144 515,149 523,154 531,160 539,165 547,170 555,176 555,180 547,175 539,170 531,164 523,159 515,154 507,148 499,143 491,138 483,132 475,127 467,122 459,117 451,111 443,106 435,102 427,98 419,99 411,103 403,108 395,113 387,118 379,123 371,129 363,134 355,139 347,144 339,150 331,155 323,160"/><polygon points="323,165 331,160 339,154 347,149 355,144 363,139 371,133 379,128 387,123 395,118 403,113 411,108 419,104 427,103 435,107 443,111 451,116 459,122 467,127 475,132 483,137 491,143 499,148 507,153 515,158 523,164 531,169 539,174 547,180 555,185 555,190 547,184 539,179 531,174 523,168 515,163 507,158 499,153 491,147 483,142 475,137 467,132 459,126 451,121 443,116 435,112 427,108 419,109 411,113 403,118 395,123 387,128 379,133 371,138 363,143 355,149 347,154 339,159 331,165 323,170"/><polygon points="323,174 331,169 339,164 347,159 355,153 363,148 371,143 379,138 387,133 395,128 403,123 411,118 419,114 427,113 435,117 443,121 451,126 459,131 467,137 475,142 483,147 491,152 499,157 507,163 515,168 523,173 531,178 539,184 547,189 555,194 555,199 547,194 539,188 531,183 523,178 515,173 507,167 499,162 491,157 483,152 475,147 467,141 459,136 451,131 443,126 435,122 427,118 419,119 411,123 403,127 395,132 387,138 379,143 371,148 363,153 355,158 347,163 339,169 331,174 323,179"/><polygon points="323,184 331,179 339,173 347,168 355,163 363,158 371,153 379,148 387,142 395,137 403,132 411,128 419,124 427,123 435,127 443,131 451,136 459,141 467,146 475,151 483,157 491,162 499,167 507,172 515,177 523,183 531,188 539,193 547,198 555,203 555,208 547,203 539,198 531,192 523,187 515,182 507,177 499,172 491,167 483,161 475,156 467,151 459,146 451,141 443,136 435,132 427,128 419,129 411,133 403,137 395,142 387,147 379,152 371,158 363,163 355,168 347,173 339,178 331,183 323,189"/><polygon points="323,193 331,188 339,183 347,178 355,173 363,168 371,162 379,157 387,152 395,147 403,142 411,138 419,134 427,133 435,137 443,141 451,146 459,151 467,156 475,161 483,166 491,171 499,176 507,182 515,187 523,192 531,197 539,202 547,207 555,213 555,217 547,212 539,207 531,202 523,197 515,191 507,186 499,181 491,176 483,171 475,166 467,161 459,156 451,151 443,146 435,142 427,138 419,139 411,143 403,147 395,152 387,157 379,162 371,167 363,172 355,177 347,183 339,188 331,193 323,198"/><polygon points="323,203 331,197 339,192 347,187 355,182 363,177 371,172 379,167 387,162 395,157 403,152 411,148 419,144 427,143 435,147 443,151 451,156 459,161 467,166 475,171 483,176 491,181 499,186 507,191 515,196 523,201 531,206 539,211 547,217 555,222 555,226 547,221 539,216 531,211 523,206 515,201 507,196 499,191 491,186 483,181 475,176 467,171 459,166 451,161 443,156 435,152 427,148 419,149 411,153 403,157 395,162 387,167 379,172 371,177 363,182 355,187 347,192 339,197 331,202 323,207"/><polygon points="323,212 331,207 339,202 347,197 355,192 363,187 371,182 379,177 387,172 395,167 403,162 411,158 419,154 427,153 435,157 443,161 451,166 459,171 467,176 475,181 483,186 491,191 499,196 507,201 515,206 523,211 531,216 539,221 547,226 555,231 555,235 547,230 539,225 531,220 523,215 515,210 507,205 499,200 491,195 483,190 475,185 467,180 459,176 451,171 443,166 435,162 427,158 419,159 411,163 403,167 395,172 387,177 379,182 371,187 363,192 355,197 347,202 339,207 331,212 323,217"/><polygon points="323,221 331,216 339,211 347,206 355,201 363,196 371,191 379,187 387,182 395,177 403,172 411,168 419,164 427,163 435,166 443,171 451,176 459,180 467,185 475,190 483,195 491,200 499,205 507,210 515,215 523,220 531,225 539,230 547,235 555,240 555,245 547,240 539,235 531,230 523,225 515,220 507,215 499,210 491,205 483,200 475,195 467,190 459,185 451,181 443,176 435,171 427,168 419,169 411,173 403,177 395,182 387,187 379,191 371,196 363,201 355,206 347,211 339,216 331,221 323,226"/><polygon points="323,231 331,226 339,221 347,216 355,211 363,206 371,201 379,196 387,191 395,187 403,182 411,177 419,174 427,173 435,176 443,181 451,185 459,190 467,195 475,200 483,205 491,210 499,215 507,220 515,225 523,229 531,234 539,239 547,244 555,249 555,254 547,249 539,244 531,239 523,234 515,229 507,224 499,219 491,215 483,210 475,205 467,200 459,195 451,190 443,186 435,181 427,178 419,179 411,182 403,187 395,192 387,196 379,201 371,206 363,211 355,216 347,221 339,226 331,230 323,235"/><polygon points="323,240 331,235 339,230 347,225 355,221 363,216 371,211 379,206 387,201 395,196 403,192 411,187 419,184 427,183 435,186 443,191 451,195 459,200 467,205 475,210 483,214 491,219 499,224 507,229 515,234 523,239 531,244 539,249 547,253 555,258 555,263 547,258 539,253 531,248 523,243 515,239 507,234 499,229 491,224 483,219 475,215 467,210 459,205 451,200 443,196 435,191 427,188 419,189 411,192 403,197 395,201 387,206 379,211 371,216 363,221 355,225 347,230 339,235 331,240 323,245"/><polygon points="323,249 331,245 339,240 347,235 355,230 363,225 371,221 379,216 387,211 395,206 403,202 411,197 419,194 427,193 435,196 443,201 451,205 459,210 467,215 475,219 483,224 491,229 499,234 507,239 515,243 523,248 531,253 539,258 547,263 555,267 555,272 547,267 539,262 531,258 523,253 515,248 507,243 499,239 491,234 483,229 475,224 467,219 459,215 451,210 443,206 435,201 427,198 419,199 411,202 403,207 395,211 387,216 379,221 371,225 363,230 355,235 347,240 339,244 331,249 323,254"/><polygon points="323,259 331,254 339,249 347,244 355,240 363,235 371,230 379,226 387,221 395,216 403,212 411,207 419,204 427,203 435,206 443,211 451,215 459,220 467,224 475,229 483,234 491,239 499,243 507,248 515,253 523,258 531,262 539,267 547,272 555,277 555,281 547,276 539,272 531,267 523,262 515,258 507,253 499,248 491,243 483,239 475,234 467,229 459,225 451,220 443,215 435,211 427,208 419,209 411,212 403,217 395,221 387,226 379,230 371,235 363,240 355,245 347,249 339,254 331,259 323,263"/><polygon points="323,268 331,263 339,259 347,254 355,249 363,245 371,240 379,235 387,231 395,226 403,222 411,217 419,214 427,213 435,216 443,220 451,225 459,229 467,234 475,239 483,243 491,248 499,253 507,258 515,262 523,267 531,272 539,276 547,281 555,286 555,290 547,286 539,281 531,276 523,272 515,267 507,262 499,258 491,253 483,248 475,244 467,239 459,234 451,230 443,225 435,221 427,218 419,219 411,222 403,226 395,231 387,236 379,240 371,245 363,249 355,254 347,259 339,263 331,268 323,273"/><polygon points="323,277 331,273 339,268 347,264 355,259 363,254 371,250 379,245 387,240 395,236 403,231 411,227 419,224 427,223 435,226 443,230 451,235 459,239 467,244 475,248 483,253 491,258 499,262 507,267 515,272 523,276 531,281 539,286 547,290 555,295 555,300 547,295 539,290 531,286 523,281 515,276 507,272 499,267 491,263 483,258 475,253 467,249 459,244 451,240 443,235 435,231 427,228 419,229 411,232 403,236 395,241 387,245 379,250 371,254 363,259 355,264 347,268 339,273 331,278 323,282"/><polygon points="323,287 331,282 339,278 347,273 355,268 363,264 371,259 379,255 387,250 395,246 403,241 411,237 419,234 427,233 435,236 443,240 451,245 459,249 467,254 475,258 483,263 491,267 499,272 507,276 515,281 523,286 531,290 539,295 547,300 555,304 555,309 547,304 539,300 531,295 523,290 515,286 507,281 499,277 491,272 483,268 475,263 467,258 459,254 451,250 443,245 435,241 427,238 419,239 411,242 403,246 395,251 387,255 379,260 371,264 363,269 355,273 347,278 339,282 331,287 323,292"/><polygon points="323,296 331,292 339,287 347,283 355,278 363,274 371,269 379,265 387,260 395,256 403,251 411,247 419,244 427,243 435,246 443,250 451,254 459,259 467,263 475,268 483,272 491,277 499,281 507,286 515,291 523,295 531,300 539,304 547,309 555,313 555,318 547,313 539,309 531,304 523,300 515,295 507,291 499,286 491,282 483,277 475,273 467,268 459,264 451,259 443,255 435,251 427,248 419,249 411,252 403,256 395,261 387,265 379,269 371,274 363,278 355,283 347,287 339,292 331,296 323,301"/><polygon points="323,306 331,301 339,297 347,292 355,288 363,283 371,279 379,274 387,270 395,265 403,261 411,257 419,254 427,253 435,256 443,260 451,264 459,269 467,273 475,278 483,282 491,287 499,291 507,295 515,300 523,304 531,309 539,313 547,318 555,322 555,327 547,323 539,318 531,314 523,309 515,305 507,300 499,296 491,291 483,287 475,282 467,278 459,274 451,269 443,265 435,261 427,258 419,259 411,262 403,266 395,270 387,275 379,279 371,284 363,288 355,292 347,297 339,301 331,306 323,310"/><polygon points="323,315 331,311 339,306 347,302 355,297 363,293 371,288 379,284 387,280 395,275 403,271 411,267 419,264 427,263 435,266 443,270 451,274 459,279 467,283 475,287 483,292 491,296 499,301 507,305 515,309 523,314 531,318 539,323 547,327 555,332 555,336 547,332 539,327 531,323 523,319 515,314 507,310 499,305 491,301 483,297 475,292 467,288 459,283 451,279 443,275 435,271 427,268 419,269 411,272 403,276 395,280 387,285 379,289 371,293 363,298 355,302 347,306 339,311 331,315 323,320"/><polygon points="323,324 331,320 339,316 347,311 355,307 363,302 371,298 379,294 387,289 395,285 403,281 411,277 419,274 427,273 435,276 443,280 451,284 459,288 467,293 475,297 483,301 491,306 499,310 507,314 515,319 523,323 531,328 539,332 547,336 555,341 555,345 547,341 539,337 531,332 523,328 515,324 507,319 499,315 491,310 483,306 475,302 467,298 459,293 451,289 443,285 435,281 427,278 419,279 411,282 403,286 395,290 387,294 379,299 371,303 363,307 355,312 347,316 339,320 331,325 323,329"/><polygon points="323,334 331,329 339,325 347,321 355,316 363,312 371,308 379,303 387,299 395,295 403,291 411,287 419,284 427,283 435,286 443,290 451,294 459,298 467,302 475,307 483,311 491,315 499,320 507,324 515,328 523,333 531,337 539,341 547,346 555,350 555,354 547,350 539,346 531,342 523,337 515,333 507,329 499,324 491,320 483,316 475,312 467,307 459,303 451,299 443,295 435,291 427,288 419,289 411,292 403,296 395,300 387,304 379,308 371,313 363,317 355,321 347,325 339,330 331,334 323,338"/><polygon points="323,343 331,339 339,334 347,330 355,326 363,322 371,317 379,313 387,309 395,305 403,301 411,297 419,294 427,293 435,296 443,300 451,304 459,308 467,312 475,316 483,321 491,325 499,329 507,333 515,338 523,342 531,346 539,351 547,355 555,359 555,364 547,359 539,355 531,351 523,347 515,342 507,338 499,334 491,330 483,325 475,321 467,317 459,313 451,309 443,305 435,301 427,298 419,299 411,302 403,306 395,310 387,314 379,318 371,322 363,327 355,331 347,335 339,339 331,343 323,348"/><polygon points="323,352 331,348 339,344 347,340 355,336 363,331 371,327 379,323 387,319 395,315 403,311 411,307 419,304 427,303 435,306 443,310 451,314 459,318 467,322 475,326 483,330 491,334 499,339 507,343 515,347 523,351 531,356 539,360 547,364 555,368 555,373 547,369 539,364 531,360 523,356 515,352 507,348 499,343 491,339 483,335 475,331 467,327 459,323 451,319 443,315 435,311 427,308 419,309 411,312 403,316 395,320 387,324 379,328 371,332 363,336 355,340 347,345 339,349 331,353 323,357"/><polygon points="323,362 331,358 339,353 347,349 355,345 363,341 371,337 379,333 387,329 395,325 403,321 411,317 419,314 427,313 435,316 443,320 451,324 459,328 467,332 475,336 483,340 491,344 499,348 507,352 515,357 523,361 531,365 539,369 547,373 555,377 555,382 547,378 539,374 531,370 523,365 515,361 507,357 499,353 491,349 483,345 475,341 467,337 459,332 451,328 443,325 435,321 427,318 419,319 411,322 403,326 395,329 387,333 379,338 371,342 363,346 355,350 347,354 339,358 331,362 323,366"/><polygon points="323,371 331,367 339,363 347,359 355,355 363,351 371,347 379,342 387,338 395,334 403,330 411,327 419,324 427,323 435,326 443,330 451,333 459,337 467,341 475,345 483,350 491,354 499,358 507,362 515,366 523,370 531,374 539,378 547,382 555,387 555,391 547,387 539,383 531,379 523,375 515,371 507,367 499,363 491,358 483,354 475,350 467,346 459,342 451,338 443,334 435,331 427,328 419,329 411,332 403,335 395,339 387,343 379,347 371,351 363,355 355,359 347,364 339,368 331,372 323,376"/><polygon points="323,380 331,376 339,372 347,368 355,364 363,360 371,356 379,352 387,348 395,344 403,340 411,337 419,334 427,333 435,336 443,339 451,343 459,347 467,351 475,355 483,359 491,363 499,367 507,371 515,375 523,379 531,384 539,388 547,392 555,396 555,400 547,396 539,392 531,388 523,384 515,380 507,376 499,372 491,368 483,364 475,360 467,356 459,352 451,348 443,344 435,341 427,338 419,339 411,342 403,345 395,349 387,353 379,357 371,361 363,365 355,369 347,373 339,377 331,381 323,385"/><polygon points="323,390 331,386 339,382 347,378 355,374 363,370 371,366 379,362 387,358 395,354 403,350 411,347 419,344 427,343 435,346 443,349 451,353 459,357 467,361 475,365 483,369 491,373 499,377 507,381 515,385 523,389 531,393 539,397 547,401 555,405 555,409 547,405 539,402 531,398 523,394 515,390 507,386 499,382 491,378 483,374 475,370 467,366 459,362 451,358 443,354 435,351 427,348 419,349 411,352 403,355 395,359 387,363 379,367 371,371 363,375 355,379 347,383 339,387 331,391 323,395"/><polygon points="323,399 331,395 339,391 347,387 355,383 363,380 371,376 379,372 387,368 395,364 403,360 411,357 419,354 427,353 435,356 443,359 451,363 459,367 467,371 475,375 483,379 491,382 499,386 507,390 515,394 523,398 531,402 539,406 547,410 555,414 555,419 547,415 539,411 531,407 523,403 515,399 507,395 499,391 491,387 483,383 475,379 467,376 459,372 451,368 443,364 435,361 427,358 419,359 411,362 403,365 395,369 387,373 379,377 371,380 363,384 355,388 347,392 339,396 331,400 323,404"/><polygon points="323,409 331,405 339,401 347,397 355,393 363,389 371,385 379,381 387,378 395,374 403,370 411,367 419,364 427,363 435,366 443,369 451,373 459,377 467,380 475,384 483,388 491,392 499,396 507,400 515,404 523,408 531,412 539,415 547,419 555,423 555,428 547,424 539,420 531,416 523,412 515,408 507,405 499,401 491,397 483,393 475,389 467,385 459,382 451,378 443,374 435,371 427,368 419,369 411,372 403,375 395,379 387,382 379,386 371,390 363,394 355,398 347,402 339,406 331,409 323,413"/><polygon points="323,418 331,414 339,410 347,406 355,403 363,399 371,395 379,391 387,387 395,384 403,380 411,376 419,374 427,373 435,376 443,379 451,383 459,386 467,390 475,394 483,398 491,402 499,405 507,409 515,413 523,417 531,421 539,425 547,429 555,432 555,437 547,433 539,429 531,425 523,422 515,418 507,414 499,410 491,406 483,403 475,399 467,395 459,391 451,388 443,384 435,381 427,378 419,379 411,381 403,385 395,389 387,392 379,396 371,400 363,404 355,407 347,411 339,415 331,419 323,423"/><polygon points="323,427 331,424 339,420 347,416 355,412 363,408 371,405 379,401 387,397 395,393 403,390 411,386 419,384 427,383 435,386 443,389 451,393 459,396 467,400 475,404 483,407 491,411 499,415 507,419 515,423 523,426 531,430 539,434 547,438 555,442 555,446 547,442 539,439 531,435 523,431 515,427 507,424 499,420 491,416 483,412 475,409 467,405 459,401 451,398 443,394 435,391 427,388 419,389 411,391 403,395 395,398 387,402 379,406 371,410 363,413 355,417 347,421 339,424 331,428 323,432"/><polygon points="323,437 331,433 339,429 347,425 355,422 363,418 371,414 379,411 387,407 395,403 403,400 411,396 419,394 427,393 435,396 443,399 451,402 459,406 467,410 475,413 483,417 491,421 499,425 507,428 515,432 523,436 531,439 539,443 547,447 555,451 555,455 547,452 539,448 531,444 523,440 515,437 507,433 499,429 491,426 483,422 475,418 467,415 459,411 451,407 443,404 435,401 427,398 419,399 411,401 403,405 395,408 387,412 379,416 371,419 363,423 355,427 347,430 339,434 331,438 323,441"/><polygon points="323,446 331,442 339,439 347,435 355,431 363,428 371,424 379,420 387,417 395,413 403,410 411,406 419,404 427,403 435,406 443,409 451,412 459,416 467,419 475,423 483,427 491,430 499,434 507,438 515,441 523,445 531,449 539,452 547,456 555,460 555,464 547,461 539,457 531,453 523,450 515,446 507,443 499,439 491,435 483,432 475,428 467,424 459,421 451,417 443,414 435,411 427,408 419,409 411,411 403,415 395,418 387,422 379,425 371,429 363,433 355,436 347,440 339,443 331,447 323,451"/><polygon points="323,455 331,452 339,448 347,445 355,441 363,437 371,434 379,430 387,427 395,423 403,420 411,416 419,414 427,413 435,416 443,419 451,422 459,426 467,429 475,433 483,436 491,440 499,444 507,447 515,451 523,455 531,458 539,462 547,465 555,469 555,474 547,470 539,466 531,463 523,459 515,456 507,452 499,448 491,445 483,441 475,438 467,434 459,431 451,427 443,424 435,421 427,418 419,419 411,421 403,425 395,428 387,431 379,435 371,439 363,442 355,446 347,449 339,453 331,456 323,460"/><polygon points="323,465 331,461 339,458 347,454 355,451 363,447 371,443 379,440 387,436 395,433 403,429 411,426 419,424 427,423 435,426 443,429 451,432 459,435 467,439 475,443 483,446 491,450 499,453 507,457 515,460 523,464 531,467 539,471 547,475 555,478 555,483 547,479 539,476 531,472 523,469 515,465 507,461 499,458 491,454 483,451 475,447 467,444 459,440 451,437 443,434 435,430 427,428 419,429 411,431 403,434 395,438 387,441 379,445 371,448 363,452 355,455 347,459 339,462 331,466 323,469"/><polygon points="323,474 331,471 339,467 347,464 355,460 363,457 371,453 379,450 387,446 395,443 403,439 411,436 419,434 427,433 435,435 443,439 451,442 459,445 467,449 475,452 483,456 491,459 499,463 507,466 515,470 523,473 531,477 539,480 547,484 555,487 555,492 547,488 539,485 531,481 523,478 515,474 507,471 499,467 491,464 483,461 475,457 467,454 459,450 451,447 443,444 435,440 427,438 419,439 411,441 403,444 395,448 387,451 379,454 371,458 363,461 355,465 347,468 339,472 331,475 323,479"/><polygon points="323,484 331,480 339,477 347,473 355,470 363,466 371,463 379,459 387,456 395,453 403,449 411,446 419,444 427,443 435,445 443,448 451,452 459,455 467,459 475,462 483,465 491,469 499,472 507,476 515,479 523,483 531,486 539,490 547,493 555,496 555,501 547,498 539,494 531,491 523,487 515,484 507,480 499,477 491,474 483,470 475,467 467,463 459,460 451,457 443,453 435,450 427,448 419,449 411,451 403,454 395,458 387,461 379,464 371,468 363,471 355,474 347,478 339,481 331,485 323,488"/><polygon points="323,493 331,489 339,486 347,483 355,479 363,476 371,472 379,469 387,466 395,462 403,459 411,456 419,454 427,453 435,455 443,458 451,462 459,465 467,468 475,472 483,475 491,478 499,482 507,485 515,489 523,492 531,495 539,499 547,502 555,506 555,510 547,507 539,503 531,500 523,497 515,493 507,490 499,487 491,483 483,480 475,476 467,473 459,470 451,467 443,463 435,460 427,458 419,459 411,461 403,464 395,467 387,471 379,474 371,477 363,481 355,484 347,487 339,491 331,494 323,498"/><polygon points="323,502 331,499 339,496 347,492 355,489 363,486 371,482 379,479 387,476 395,472 403,469 411,466 419,464 427,463 435,465 443,468 451,471 459,475 467,478 475,481 483,485 491,488 499,491 507,495 515,498 523,501 531,505 539,508 547,511 555,515 555,519 547,516 539,513 531,509 523,506 515,503 507,499 499,496 491,493 483,489 475,486 467,483 459,480 451,476 443,473 435,470 427,468 419,469 411,471 403,474 395,477 387,480 379,484 371,487 363,490 355,494 347,497 339,500 331,504 323,507"/><polygon points="323,512 331,508 339,505 347,502 355,498 363,495 371,492 379,489 387,485 395,482 403,479 411,476 419,474 427,473 435,475 443,478 451,481 459,485 467,488 475,491 483,494 491,498 499,501 507,504 515,507 523,511 531,514 539,517 547,521 555,524 555,529 547,525 539,522 531,519 523,515 515,512 507,509 499,506 491,502 483,499 475,496 467,493 459,489 451,486 443,483 435,480 427,478 419,479 411,481 403,484 395,487 387,490 379,493 371,497 363,500 355,503 347,506 339,510 331,513 323,516"/><polygon points="323,521 331,518 339,514 347,511 355,508 363,505 371,502 379,498 387,495 395,492 403,489 411,486 419,484 427,483 435,485 443,488 451,491 459,494 467,498 475,501 483,504 491,507 499,510 507,514 515,517 523,520 531,523 539,527 547,530 555,533 555,538 547,534 539,531 531,528 523,525 515,522 507,518 499,515 491,512 483,509 475,506 467,502 459,499 451,496 443,493 435,490 427,488 419,489 411,491 403,494 395,497 387,500 379,503 371,506 363,510 355,513 347,516 339,519 331,522 323,526"/></g><rect x="326.2" y="0" width="3.21" height="520" fill="#808080" fill-opacity="0.17"/><rect x="332.6" y="0" width="3.21" height="520" fill="#808080" fill-opacity="0.24"/><rect x="335.8" y="0" width="3.21" height="520" fill="#808080" fill-opacity="0.17"/><rect x="339.0" y="0" width="3.21" height="520" fill="#808080" fill-opacity="0.06"/><rect x="342.2" y="0" width="3.21" height="520" fill="#808080" fill-opacity="0.17"/><rect x="345.5" y="0" width="3.21" height="520" fill="#808080" fill-opacity="0.14"/><rect x="351.9" y="0" width="3.21" height="520" fill="#808080" fill-opacity="0.12"/><rect x="355.1" y="0" width="3.21" height="520" fill="#808080" fill-opacity="0.17"/><rect x="358.3" y="0" width="3.21" height="520" fill="#808080" fill-opacity="0.12"/><rect x="361.5" y="0" width="3.21" height="520" fill="#808080" fill-opacity="0.38"/><rect x="364.7" y="0" width="3.21" height="520" fill="#808080" fill-opacity="0.25"/><rect x="367.9" y="0" width="3.21" height="520" fill="#808080" fill-opacity="0.06"/><rect x="377.5" y="0" width="3.21" height="520" fill="#808080" fill-opacity="0.31"/><rect x="380.7" y="0" width="3.21" height="520" fill="#808080" fill-opacity="0.22"/><rect x="384.0" y="0" width="3.21" height="520" fill="#808080" fill-opacity="0.17"/><rect x="387.2" y="0" width="3.21" height="520" fill="#808080" fill-opacity="0.08"/><rect x="390.4" y="0" width="3.21" height="520" fill="#808080" fill-opacity="0.11"/><rect x="396.8" y="0" width="3.21" height="520" fill="#808080" fill-opacity="0.12"/><rect x="403.2" y="0" width="3.21" height="520" fill="#808080" fill-opacity="0.18"/><rect x="406.4" y="0" width="3.21" height="520" fill="#808080" fill-opacity="0.18"/><rect x="409.6" y="0" width="3.21" height="520" fill="#808080" fill-opacity="0.21"/><rect x="422.4" y="0" width="3.21" height="520" fill="#808080" fill-opacity="0.22"/><rect x="425.7" y="0" width="3.21" height="520" fill="#808080" fill-opacity="0.11"/><rect x="428.9" y="0" width="3.21" height="520" fill="#808080" fill-opacity="0.26"/><rect x="432.1" y="0" width="3.21" height="520" fill="#808080" fill-opacity="0.08"/><rect x="435.3" y="0" width="3.21" height="520" fill="#808080" fill-opacity="0.07"/><rect x="438.5" y="0" width="3.21" height="520" fill="#808080" fill-opacity="0.40"/><rect x="448.1" y="0" width="3.21" height="520" fill="#808080" fill-opacity="0.16"/><rect x="451.3" y="0" width="3.21" height="520" fill="#808080" fill-opacity="0.18"/><rect x="454.5" y="0" width="3.21" height="520" fill="#808080" fill-opacity="0.08"/><rect x="457.7" y="0" width="3.21" height="520" fill="#808080" fill-opacity="0.14"/><rect x="460.9" y="0" width="3.21" height="520" fill="#808080" fill-opacity="0.08"/><rect x="464.2" y="0" width="3.21" height="520" fill="#808080" fill-opacity="0.21"/><rect x="467.4" y="0" width="3.21" height="520" fill="#808080" fill-opacity="0.39"/><rect x="470.6" y="0" width="3.21" height="520" fill="#808080" fill-opacity="0.33"/><rect x="473.8" y="0" width="3.21" height="520" fill="#808080" fill-opacity="0.19"/><rect x="477.0" y="0" width="3.21" height="520" fill="#808080" fill-opacity="0.10"/><rect x="480.2" y="0" width="3.21" height="520" fill="#808080" fill-opacity="0.44"/><rect x="483.4" y="0" width="3.21" height="520" fill="#808080" fill-opacity="0.09"/><rect x="486.6" y="0" width="3.21" height="520" fill="#808080" fill-opacity="0.18"/><rect x="489.8" y="0" width="3.21" height="520" fill="#808080" fill-opacity="0.37"/><rect x="493.0" y="0" width="3.21" height="520" fill="#808080" fill-opacity="0.22"/><rect x="496.2" y="0" width="3.21" height="520" fill="#808080" fill-opacity="0.06"/><rect x="499.4" y="0" width="3.21" height="520" fill="#808080" fill-opacity="0.26"/><rect x="502.6" y="0" width="3.21" height="520" fill="#808080" fill-opacity="0.16"/><rect x="505.9" y="0" width="3.21" height="520" fill="#808080" fill-opacity="0.41"/><rect x="509.1" y="0" width="3.21" height="520" fill="#808080" fill-opacity="0.18"/><rect x="512.3" y="0" width="3.21" height="520" fill="#808080" fill-opacity="0.13"/><rect x="515.5" y="0" width="3.21" height="520" fill="#808080" fill-opacity="0.47"/><rect x="518.7" y="0" width="3.21" height="520" fill="#808080" fill-opacity="0.12"/><rect x="521.9" y="0" width="3.21" height="520" fill="#808080" fill-opacity="0.07"/><rect x="525.1" y="0" width="3.21" height="520" fill="#808080" fill-opacity="0.43"/><rect x="528.3" y="0" width="3.21" height="520" fill="#808080" fill-opacity="0.44"/><rect x="537.9" y="0" width="3.21" height="520" fill="#808080" fill-opacity="0.36"/><rect x="541.1" y="0" width="3.21" height="520" fill="#808080" fill-opacity="0.38"/><rect x="544.4" y="0" width="3.21" height="520" fill="#808080" fill-opacity="0.06"/><rect x="550.8" y="0" width="3.21" height="520" fill="#808080" fill-opacity="0.22"/><rect x="554.0" y="0" width="3.21" height="520" fill="#808080" fill-opacity="0.44"/><rect x="323" y="0" width="232" height="520" fill="url(#hf2)"/><rect x="323" y="0" width="232" height="520" fill="url(#fade)" mask="url(#m2)"/></g><g clip-path="url(#c3)"><rect x="515" y="0" width="216" height="520" fill="#fff"/><g filter="url(#wob)" fill="#000"><polygon points="515,25 523,19 531,13 539,7 547,2 555,-4 563,-10 571,-15 579,-21 587,-27 595,-32 603,-38 611,-42 619,-44 627,-41 635,-36 643,-31 651,-25 659,-20 667,-14 675,-8 683,-3 691,3 699,9 707,15 715,20 723,26 731,32 731,37 723,31 715,25 707,20 699,14 691,8 683,2 675,-3 667,-9 659,-15 651,-20 643,-26 635,-31 627,-36 619,-39 611,-37 603,-33 595,-27 587,-22 579,-16 571,-10 563,-5 555,1 547,7 539,12 531,18 523,24 515,30"/><polygon points="515,35 523,29 531,23 539,17 547,12 555,6 563,0 571,-5 579,-11 587,-17 595,-22 603,-28 611,-32 619,-34 627,-31 635,-26 643,-21 651,-15 659,-10 667,-4 675,2 683,7 691,13 699,19 707,25 715,30 723,36 731,42 731,47 723,41 715,35 707,30 699,24 691,18 683,12 675,7 667,1 659,-5 651,-10 643,-16 635,-21 627,-26 619,-29 611,-27 603,-23 595,-17 587,-12 579,-6 571,-0 563,5 555,11 547,17 539,22 531,28 523,34 515,40"/><polygon points="515,45 523,39 531,33 539,27 547,22 555,16 563,10 571,5 579,-1 587,-7 595,-12 603,-18 611,-22 619,-24 627,-21 635,-16 643,-11 651,-5 659,0 667,6 675,12 683,17 691,23 699,29 707,35 715,40 723,46 731,52 731,57 723,51 715,45 707,40 699,34 691,28 683,22 675,17 667,11 659,5 651,-0 643,-6 635,-11 627,-16 619,-19 611,-17 603,-13 595,-7 587,-2 579,4 571,10 563,15 555,21 547,27 539,32 531,38 523,44 515,50"/><polygon points="515,55 523,49 531,43 539,37 547,32 555,26 563,20 571,15 579,9 587,3 595,-2 603,-8 611,-12 619,-14 627,-11 635,-6 643,-1 651,5 659,10 667,16 675,22 683,27 691,33 699,39 707,45 715,50 723,56 731,62 731,67 723,61 715,55 707,50 699,44 691,38 683,32 675,27 667,21 659,15 651,10 643,4 635,-1 627,-6 619,-9 611,-7 603,-3 595,3 587,8 579,14 571,20 563,25 555,31 547,37 539,42 531,48 523,54 515,60"/><polygon points="515,65 523,59 531,53 539,47 547,42 555,36 563,30 571,25 579,19 587,13 595,8 603,2 611,-2 619,-4 627,-1 635,4 643,9 651,15 659,20 667,26 675,32 683,37 691,43 699,49 707,55 715,60 723,66 731,72 731,77 723,71 715,65 707,60 699,54 691,48 683,42 675,37 667,31 659,25 651,20 643,14 635,9 627,4 619,1 611,3 603,7 595,13 587,18 579,24 571,30 563,35 555,41 547,47 539,52 531,58 523,64 515,70"/><polygon points="515,75 523,69 531,63 539,57 547,52 555,46 563,40 571,35 579,29 587,23 595,18 603,12 611,8 619,6 627,9 635,14 643,19 651,25 659,30 667,36 675,42 683,47 691,53 699,59 707,65 715,70 723,76 731,82 731,87 723,81 715,75 707,70 699,64 691,58 683,52 675,47 667,41 659,35 651,30 643,24 635,19 627,14 619,11 611,13 603,17 595,23 587,28 579,34 571,40 563,45 555,51 547,57 539,62 531,68 523,74 515,80"/><polygon points="515,85 523,79 531,73 539,67 547,62 555,56 563,50 571,45 579,39 587,33 595,28 603,22 611,18 619,16 627,19 635,24 643,29 651,35 659,40 667,46 675,52 683,57 691,63 699,69 707,75 715,80 723,86 731,92 731,96 723,91 715,85 707,79 699,74 691,68 683,62 675,57 667,51 659,45 651,40 643,34 635,29 627,24 619,21 611,23 603,27 595,33 587,38 579,44 571,49 563,55 555,61 547,66 539,72 531,78 523,84 515,89"/><polygon points="515,94 523,88 531,83 539,77 547,71 555,66 563,60 571,54 579,49 587,43 595,38 603,32 611,28 619,26 627,29 635,34 643,39 651,45 659,50 667,56 675,61 683,67 691,73 699,78 707,84 715,90 723,95 731,101 731,106 723,100 715,94 707,89 699,83 691,77 683,72 675,66 667,61 659,55 651,49 643,44 635,39 627,34 619,31 611,33 603,37 595,43 587,48 579,54 571,59 563,65 555,70 547,76 539,82 531,87 523,93 515,99"/><polygon points="515,103 523,98 531,92 539,86 547,81 555,75 563,70 571,64 579,58 587,53 595,48 603,42 611,38 619,36 627,39 635,44 643,49 651,54 659,60 667,65 675,71 683,77 691,82 699,88 707,93 715,99 723,105 731,110 731,115 723,109 715,104 707,98 699,93 691,87 683,81 675,76 667,70 659,65 651,59 643,54 635,49 627,44 619,41 611,43 603,47 595,52 587,58 579,63 571,69 563,74 555,80 547,86 539,91 531,97 523,102 515,108"/><polygon points="515,113 523,107 531,102 539,96 547,90 555,85 563,79 571,74 579,68 587,63 595,57 603,52 611,48 619,46 627,49 635,54 643,59 651,64 659,70 667,75 675,81 683,86 691,92 699,97 707,103 715,108 723,114 731,120 731,124 723,119 715,113 707,108 699,102 691,97 683,91 675,86 667,80 659,75 651,69 643,64 635,59 627,54 619,51 611,53 603,57 595,62 587,68 579,73 571,79 563,84 555,90 547,95 539,101 531,106 523,112 515,117"/><polygon points="515,122 523,117 531,111 539,105 547,100 555,94 563,89 571,83 579,78 587,73 595,67 603,62 611,58 619,56 627,59 635,63 643,69 651,74 659,79 667,85 675,90 683,96 691,101 699,107 707,112 715,118 723,123 731,129 731,134 723,128 715,123 707,117 699,112 691,106 683,101 675,95 667,90 659,84 651,79 643,74 635,68 627,64 619,61 611,63 603,67 595,72 587,78 579,83 571,88 563,94 555,99 547,105 539,110 531,116 523,121 515,127"/><polygon points="515,131 523,126 531,120 539,115 547,110 555,104 563,99 571,93 579,88 587,82 595,77 603,72 611,68 619,66 627,69 635,73 643,79 651,84 659,89 667,95 675,100 683,105 691,111 699,116 707,122 715,127 723,133 731,138 731,143 723,137 715,132 707,127 699,121 691,116 683,110 675,105 667,99 659,94 651,89 643,83 635,78 627,74 619,71 611,73 603,77 595,82 587,87 579,93 571,98 563,103 555,109 547,114 539,120 531,125 523,131 515,136"/><polygon points="515,141 523,135 531,130 539,124 547,119 555,114 563,108 571,103 579,98 587,92 595,87 603,82 611,78 619,76 627,79 635,83 643,88 651,94 659,99 667,104 675,110 683,115 691,120 699,126 707,131 715,137 723,142 731,148 731,152 723,147 715,141 707,136 699,131 691,125 683,120 675,114 667,109 659,104 651,99 643,93 635,88 627,84 619,81 611,83 603,87 595,92 587,97 579,102 571,108 563,113 555,119 547,124 539,129 531,135 523,140 515,145"/><polygon points="515,150 523,145 531,139 539,134 547,129 555,123 563,118 571,113 579,107 587,102 595,97 603,92 611,88 619,86 627,89 635,93 643,98 651,103 659,109 667,114 675,119 683,125 691,130 699,135 707,141 715,146 723,151 731,157 731,161 723,156 715,151 707,145 699,140 691,135 683,129 675,124 667,119 659,114 651,108 643,103 635,98 627,94 619,91 611,93 603,97 595,102 587,107 579,112 571,118 563,123 555,128 547,133 539,139 531,144 523,149 515,155"/><polygon points="515,159 523,154 531,149 539,144 547,138 555,133 563,128 571,122 579,117 587,112 595,107 603,102 611,98 619,96 627,99 635,103 643,108 651,113 659,118 667,124 675,129 683,134 691,140 699,145 707,150 715,155 723,161 731,166 731,171 723,165 715,160 707,155 699,150 691,144 683,139 675,134 667,129 659,123 651,118 643,113 635,108 627,104 619,101 611,103 603,107 595,112 587,117 579,122 571,127 563,133 555,138 547,143 539,148 531,154 523,159 515,164"/><polygon points="515,169 523,164 531,158 539,153 547,148 555,143 563,137 571,132 579,127 587,122 595,117 603,112 611,108 619,106 627,109 635,113 643,118 651,123 659,128 667,133 675,139 683,144 691,149 699,154 707,160 715,165 723,170 731,175 731,180 723,175 715,170 707,164 699,159 691,154 683,149 675,143 667,138 659,133 651,128 643,123 635,118 627,114 619,111 611,113 603,117 595,122 587,127 579,132 571,137 563,142 555,147 547,153 539,158 531,163 523,168 515,173"/><polygon points="515,178 523,173 531,168 539,163 547,157 555,152 563,147 571,142 579,137 587,132 595,127 603,122 611,118 619,116 627,119 635,123 643,128 651,133 659,138 667,143 675,148 683,153 691,159 699,164 707,169 715,174 723,179 731,185 731,189 723,184 715,179 707,174 699,169 691,163 683,158 675,153 667,148 659,143 651,138 643,133 635,128 627,124 619,121 611,123 603,127 595,132 587,137 579,142 571,147 563,152 555,157 547,162 539,167 531,172 523,178 515,183"/><polygon points="515,187 523,182 531,177 539,172 547,167 555,162 563,157 571,152 579,147 587,141 595,137 603,132 611,128 619,126 627,129 635,133 643,138 651,143 659,148 667,153 675,158 683,163 691,168 699,173 707,178 715,184 723,189 731,194 731,199 723,193 715,188 707,183 699,178 691,173 683,168 675,163 667,158 659,153 651,148 643,143 635,138 627,134 619,131 611,133 603,137 595,141 587,146 579,151 571,156 563,162 555,167 547,172 539,177 531,182 523,187 515,192"/><polygon points="515,197 523,192 531,187 539,182 547,176 555,171 563,166 571,161 579,156 587,151 595,146 603,142 611,138 619,136 627,139 635,143 643,148 651,153 659,158 667,163 675,168 683,173 691,178 699,183 707,188 715,193 723,198 731,203 731,208 723,203 715,198 707,193 699,188 691,183 683,178 675,172 667,167 659,162 651,157 643,153 635,148 627,144 619,141 611,143 603,147 595,151 587,156 579,161 571,166 563,171 555,176 547,181 539,186 531,191 523,196 515,202"/><polygon points="515,206 523,201 531,196 539,191 547,186 555,181 563,176 571,171 579,166 587,161 595,156 603,152 611,148 619,146 627,149 635,153 643,158 651,162 659,167 667,172 675,177 683,182 691,187 699,192 707,197 715,202 723,207 731,212 731,217 723,212 715,207 707,202 699,197 691,192 683,187 675,182 667,177 659,172 651,167 643,162 635,158 627,154 619,151 611,153 603,157 595,161 587,166 579,171 571,176 563,181 555,186 547,191 539,196 531,201 523,206 515,211"/><polygon points="515,216 523,211 531,206 539,201 547,196 555,191 563,186 571,181 579,176 587,171 595,166 603,162 611,158 619,156 627,159 635,163 643,167 651,172 659,177 667,182 675,187 683,192 691,197 699,202 707,207 715,212 723,217 731,222 731,226 723,221 715,216 707,212 699,207 691,202 683,197 675,192 667,187 659,182 651,177 643,172 635,168 627,164 619,161 611,163 603,167 595,171 587,176 579,181 571,186 563,191 555,195 547,200 539,205 531,210 523,215 515,220"/><polygon points="515,225 523,220 531,215 539,210 547,205 555,200 563,195 571,191 579,186 587,181 595,176 603,172 611,168 619,166 627,168 635,173 643,177 651,182 659,187 667,192 675,197 683,202 691,206 699,211 707,216 715,221 723,226 731,231 731,236 723,231 715,226 707,221 699,216 691,211 683,206 675,201 667,197 659,192 651,187 643,182 635,178 627,173 619,171 611,173 603,177 595,181 587,186 579,191 571,195 563,200 555,205 547,210 539,215 531,220 523,225 515,230"/><polygon points="515,234 523,229 531,224 539,220 547,215 555,210 563,205 571,200 579,195 587,191 595,186 603,181 611,178 619,176 627,178 635,183 643,187 651,192 659,197 667,201 675,206 683,211 691,216 699,221 707,226 715,231 723,235 731,240 731,245 723,240 715,235 707,230 699,226 691,221 683,216 675,211 667,206 659,202 651,197 643,192 635,188 627,183 619,181 611,183 603,186 595,191 587,196 579,200 571,205 563,210 555,215 547,220 539,224 531,229 523,234 515,239"/><polygon points="515,244 523,239 531,234 539,229 547,224 555,220 563,215 571,210 579,205 587,201 595,196 603,191 611,188 619,186 627,188 635,193 643,197 651,202 659,206 667,211 675,216 683,221 691,226 699,230 707,235 715,240 723,245 731,250 731,254 723,249 715,245 707,240 699,235 691,230 683,226 675,221 667,216 659,211 651,207 643,202 635,197 627,193 619,191 611,193 603,196 595,201 587,205 579,210 571,215 563,220 555,224 547,229 539,234 531,239 523,243 515,248"/><polygon points="515,253 523,248 531,243 539,239 547,234 555,229 563,224 571,220 579,215 587,210 595,206 603,201 611,198 619,196 627,198 635,202 643,207 651,212 659,216 667,221 675,226 683,230 691,235 699,240 707,245 715,249 723,254 731,259 731,264 723,259 715,254 707,249 699,245 691,240 683,235 675,230 667,226 659,221 651,216 643,212 635,207 627,203 619,201 611,203 603,206 595,211 587,215 579,220 571,225 563,229 555,234 547,239 539,243 531,248 523,253 515,258"/><polygon points="515,262 523,258 531,253 539,248 547,243 555,239 563,234 571,229 579,225 587,220 595,216 603,211 611,208 619,206 627,208 635,212 643,217 651,221 659,226 667,231 675,235 683,240 691,245 699,249 707,254 715,259 723,263 731,268 731,273 723,268 715,263 707,259 699,254 691,249 683,245 675,240 667,235 659,231 651,226 643,222 635,217 627,213 619,211 611,213 603,216 595,221 587,225 579,230 571,234 563,239 555,244 547,248 539,253 531,258 523,262 515,267"/><polygon points="515,272 523,267 531,262 539,258 547,253 555,248 563,244 571,239 579,235 587,230 595,226 603,221 611,218 619,216 627,218 635,222 643,227 651,231 659,236 667,240 675,245 683,250 691,254 699,259 707,263 715,268 723,273 731,277 731,282 723,277 715,273 707,268 699,264 691,259 683,254 675,250 667,245 659,241 651,236 643,232 635,227 627,223 619,221 611,223 603,226 595,230 587,235 579,239 571,244 563,249 555,253 547,258 539,262 531,267 523,272 515,276"/><polygon points="515,281 523,276 531,272 539,267 547,263 555,258 563,253 571,249 579,244 587,240 595,235 603,231 611,228 619,226 627,228 635,232 643,237 651,241 659,245 667,250 675,255 683,259 691,264 699,268 707,273 715,278 723,282 731,287 731,291 723,287 715,282 707,278 699,273 691,269 683,264 675,259 667,255 659,250 651,246 643,241 635,237 627,233 619,231 611,233 603,236 595,240 587,245 579,249 571,254 563,258 555,263 547,267 539,272 531,277 523,281 515,286"/><polygon points="515,290 523,286 531,281 539,277 547,272 555,268 563,263 571,259 579,254 587,250 595,245 603,241 611,237 619,236 627,238 635,242 643,246 651,251 659,255 667,260 675,264 683,269 691,273 699,278 707,282 715,287 723,291 731,296 731,301 723,296 715,292 707,287 699,283 691,278 683,274 675,269 667,265 659,260 651,256 643,251 635,247 627,243 619,241 611,242 603,246 595,250 587,255 579,259 571,263 563,268 555,272 547,277 539,281 531,286 523,291 515,295"/><polygon points="515,300 523,295 531,291 539,286 547,282 555,277 563,273 571,268 579,264 587,260 595,255 603,251 611,247 619,246 627,248 635,252 643,256 651,261 659,265 667,269 675,274 683,278 691,283 699,287 707,292 715,296 723,301 731,305 731,310 723,305 715,301 707,297 699,292 691,288 683,283 675,279 667,274 659,270 651,266 643,261 635,257 627,253 619,251 611,252 603,256 595,260 587,264 579,269 571,273 563,278 555,282 547,287 539,291 531,295 523,300 515,304"/><polygon points="515,309 523,305 531,300 539,296 547,291 555,287 563,282 571,278 579,274 587,269 595,265 603,261 611,257 619,256 627,258 635,262 643,266 651,270 659,275 667,279 675,284 683,288 691,292 699,297 707,301 715,306 723,310 731,315 731,319 723,315 715,310 707,306 699,302 691,297 683,293 675,288 667,284 659,280 651,275 643,271 635,267 627,263 619,261 611,262 603,266 595,270 587,274 579,279 571,283 563,287 555,292 547,296 539,301 531,305 523,309 515,314"/><polygon points="515,318 523,314 531,310 539,305 547,301 555,297 563,292 571,288 579,283 587,279 595,275 603,271 611,267 619,266 627,268 635,272 643,276 651,280 659,285 667,289 675,293 683,298 691,302 699,306 707,311 715,315 723,319 731,324 731,329 723,324 715,320 707,315 699,311 691,307 683,302 675,298 667,294 659,289 651,285 643,281 635,277 627,273 619,271 611,272 603,276 595,280 587,284 579,288 571,293 563,297 555,301 547,306 539,310 531,314 523,319 515,323"/><polygon points="515,328 523,323 531,319 539,315 547,310 555,306 563,302 571,298 579,293 587,289 595,285 603,281 611,277 619,276 627,278 635,282 643,286 651,290 659,294 667,299 675,303 683,307 691,312 699,316 707,320 715,325 723,329 731,333 731,338 723,334 715,329 707,325 699,321 691,316 683,312 675,308 667,303 659,299 651,295 643,291 635,287 627,283 619,281 611,282 603,286 595,290 587,294 579,298 571,302 563,307 555,311 547,315 539,320 531,324 523,328 515,332"/><polygon points="515,337 523,333 531,329 539,324 547,320 555,316 563,312 571,307 579,303 587,299 595,295 603,291 611,287 619,286 627,288 635,292 643,296 651,300 659,304 667,308 675,313 683,317 691,321 699,325 707,330 715,334 723,338 731,342 731,347 723,343 715,339 707,334 699,330 691,326 683,322 675,317 667,313 659,309 651,305 643,301 635,297 627,293 619,291 611,292 603,296 595,300 587,304 579,308 571,312 563,316 555,321 547,325 539,329 531,333 523,338 515,342"/><polygon points="515,346 523,342 531,338 539,334 547,330 555,325 563,321 571,317 579,313 587,309 595,305 603,301 611,297 619,296 627,298 635,302 643,306 651,310 659,314 667,318 675,322 683,326 691,331 699,335 707,339 715,343 723,348 731,352 731,356 723,352 715,348 707,344 699,340 691,335 683,331 675,327 667,323 659,319 651,315 643,311 635,307 627,303 619,301 611,302 603,306 595,310 587,314 579,318 571,322 563,326 555,330 547,334 539,339 531,343 523,347 515,351"/><polygon points="515,356 523,352 531,347 539,343 547,339 555,335 563,331 571,327 579,323 587,319 595,315 603,311 611,307 619,306 627,308 635,312 643,316 651,320 659,324 667,328 675,332 683,336 691,340 699,344 707,349 715,353 723,357 731,361 731,366 723,362 715,357 707,353 699,349 691,345 683,341 675,337 667,333 659,329 651,324 643,320 635,317 627,313 619,311 611,312 603,316 595,319 587,323 579,328 571,332 563,336 555,340 547,344 539,348 531,352 523,356 515,360"/><polygon points="515,365 523,361 531,357 539,353 547,349 555,345 563,341 571,336 579,332 587,328 595,324 603,321 611,317 619,316 627,318 635,322 643,325 651,329 659,333 667,337 675,342 683,346 691,350 699,354 707,358 715,362 723,366 731,370 731,375 723,371 715,367 707,363 699,359 691,355 683,350 675,346 667,342 659,338 651,334 643,330 635,327 627,323 619,321 611,322 603,326 595,329 587,333 579,337 571,341 563,345 555,349 547,354 539,358 531,362 523,366 515,370"/><polygon points="515,375 523,370 531,366 539,362 547,358 555,354 563,350 571,346 579,342 587,338 595,334 603,331 611,327 619,326 627,328 635,331 643,335 651,339 659,343 667,347 675,351 683,355 691,359 699,363 707,367 715,371 723,376 731,380 731,384 723,380 715,376 707,372 699,368 691,364 683,360 675,356 667,352 659,348 651,344 643,340 635,336 627,333 619,331 611,332 603,336 595,339 587,343 579,347 571,351 563,355 555,359 547,363 539,367 531,371 523,375 515,379"/><polygon points="515,384 523,380 531,376 539,372 547,368 555,364 563,360 571,356 579,352 587,348 595,344 603,341 611,337 619,336 627,338 635,341 643,345 651,349 659,353 667,357 675,361 683,365 691,369 699,373 707,377 715,381 723,385 731,389 731,394 723,390 715,386 707,382 699,378 691,374 683,370 675,366 667,362 659,358 651,354 643,350 635,346 627,343 619,341 611,342 603,345 595,349 587,353 579,357 571,361 563,365 555,369 547,373 539,377 531,381 523,385 515,389"/><polygon points="515,393 523,389 531,385 539,381 547,377 555,373 563,370 571,366 579,362 587,358 595,354 603,350 611,347 619,346 627,348 635,351 643,355 651,359 659,363 667,367 675,371 683,374 691,378 699,382 707,386 715,390 723,394 731,398 731,403 723,399 715,395 707,391 699,387 691,383 683,379 675,375 667,371 659,368 651,364 643,360 635,356 627,353 619,351 611,352 603,355 595,359 587,363 579,367 571,371 563,374 555,378 547,382 539,386 531,390 523,394 515,398"/><polygon points="515,403 523,399 531,395 539,391 547,387 555,383 563,379 571,375 579,372 587,368 595,364 603,360 611,357 619,356 627,358 635,361 643,365 651,369 659,372 667,376 675,380 683,384 691,388 699,392 707,396 715,400 723,404 731,407 731,412 723,408 715,404 707,400 699,397 691,393 683,389 675,385 667,381 659,377 651,374 643,370 635,366 627,363 619,361 611,362 603,365 595,369 587,373 579,376 571,380 563,384 555,388 547,392 539,396 531,400 523,403 515,407"/><polygon points="515,412 523,408 531,404 539,400 547,397 555,393 563,389 571,385 579,381 587,378 595,374 603,370 611,367 619,366 627,368 635,371 643,375 651,379 659,382 667,386 675,390 683,394 691,398 699,401 707,405 715,409 723,413 731,417 731,421 723,418 715,414 707,410 699,406 691,402 683,398 675,395 667,391 659,387 651,383 643,380 635,376 627,373 619,371 611,372 603,375 595,379 587,382 579,386 571,390 563,394 555,398 547,401 539,405 531,409 523,413 515,417"/><polygon points="515,421 523,417 531,414 539,410 547,406 555,402 563,399 571,395 579,391 587,387 595,384 603,380 611,377 619,376 627,378 635,381 643,385 651,388 659,392 667,396 675,400 683,403 691,407 699,411 707,415 715,418 723,422 731,426 731,431 723,427 715,423 707,419 699,416 691,412 683,408 675,404 667,401 659,397 651,393 643,390 635,386 627,383 619,381 611,382 603,385 595,389 587,392 579,396 571,400 563,403 555,407 547,411 539,415 531,418 523,422 515,426"/><polygon points="515,431 523,427 531,423 539,419 547,416 555,412 563,408 571,405 579,401 587,397 595,394 603,390 611,387 619,386 627,388 635,391 643,395 651,398 659,402 667,405 675,409 683,413 691,417 699,420 707,424 715,428 723,432 731,435 731,440 723,436 715,433 707,429 699,425 691,421 683,418 675,414 667,410 659,407 651,403 643,399 635,396 627,393 619,391 611,392 603,395 595,399 587,402 579,406 571,409 563,413 555,417 547,420 539,424 531,428 523,432 515,435"/><polygon points="515,440 523,436 531,433 539,429 547,425 555,422 563,418 571,414 579,411 587,407 595,404 603,400 611,397 619,396 627,398 635,401 643,404 651,408 659,412 667,415 675,419 683,423 691,426 699,430 707,434 715,437 723,441 731,445 731,449 723,446 715,442 707,438 699,435 691,431 683,427 675,424 667,420 659,416 651,413 643,409 635,406 627,403 619,401 611,402 603,405 595,408 587,412 579,416 571,419 563,423 555,426 547,430 539,434 531,437 523,441 515,445"/><polygon points="515,449 523,446 531,442 539,438 547,435 555,431 563,428 571,424 579,420 587,417 595,413 603,410 611,407 619,406 627,408 635,411 643,414 651,418 659,421 667,425 675,429 683,432 691,436 699,439 707,443 715,447 723,450 731,454 731,458 723,455 715,451 707,448 699,444 691,441 683,437 675,433 667,430 659,426 651,423 643,419 635,416 627,413 619,411 611,412 603,415 595,418 587,422 579,425 571,429 563,432 555,436 547,440 539,443 531,447 523,450 515,454"/><polygon points="515,459 523,455 531,452 539,448 547,444 555,441 563,437 571,434 579,430 587,427 595,423 603,420 611,417 619,416 627,418 635,421 643,424 651,428 659,431 667,435 675,438 683,442 691,445 699,449 707,452 715,456 723,460 731,463 731,468 723,464 715,461 707,457 699,454 691,450 683,447 675,443 667,440 659,436 651,433 643,429 635,426 627,423 619,421 611,422 603,425 595,428 587,432 579,435 571,439 563,442 555,446 547,449 539,453 531,456 523,460 515,463"/><polygon points="515,468 523,465 531,461 539,457 547,454 555,450 563,447 571,443 579,440 587,437 595,433 603,430 611,427 619,426 627,428 635,431 643,434 651,437 659,441 667,444 675,448 683,451 691,455 699,458 707,462 715,465 723,469 731,472 731,477 723,474 715,470 707,467 699,463 691,460 683,456 675,453 667,449 659,446 651,442 643,439 635,436 627,433 619,431 611,432 603,435 595,438 587,442 579,445 571,448 563,452 555,455 547,459 539,462 531,466 523,469 515,473"/><polygon points="515,477 523,474 531,470 539,467 547,464 555,460 563,457 571,453 579,450 587,446 595,443 603,440 611,437 619,436 627,438 635,441 643,444 651,447 659,451 667,454 675,458 683,461 691,464 699,468 707,471 715,475 723,478 731,482 731,486 723,483 715,479 707,476 699,473 691,469 683,466 675,462 667,459 659,456 651,452 643,449 635,446 627,443 619,441 611,442 603,445 595,448 587,451 579,455 571,458 563,461 555,465 547,468 539,472 531,475 523,479 515,482"/><polygon points="515,487 523,483 531,480 539,477 547,473 555,470 563,466 571,463 579,460 587,456 595,453 603,450 611,447 619,446 627,448 635,451 643,454 651,457 659,460 667,464 675,467 683,471 691,474 699,477 707,481 715,484 723,488 731,491 731,496 723,492 715,489 707,485 699,482 691,479 683,475 675,472 667,469 659,465 651,462 643,459 635,456 627,453 619,451 611,452 603,455 595,458 587,461 579,464 571,468 563,471 555,475 547,478 539,481 531,485 523,488 515,491"/><polygon points="515,496 523,493 531,489 539,486 547,483 555,479 563,476 571,473 579,469 587,466 595,463 603,460 611,457 619,456 627,458 635,461 643,464 651,467 659,470 667,474 675,477 683,480 691,484 699,487 707,490 715,494 723,497 731,500 731,505 723,502 715,498 707,495 699,492 691,488 683,485 675,482 667,478 659,475 651,472 643,469 635,465 627,463 619,461 611,462 603,465 595,468 587,471 579,474 571,478 563,481 555,484 547,487 539,491 531,494 523,497 515,501"/><polygon points="515,505 523,502 531,499 539,496 547,492 555,489 563,486 571,482 579,479 587,476 595,473 603,470 611,467 619,466 627,468 635,470 643,474 651,477 659,480 667,483 675,486 683,490 691,493 699,496 707,500 715,503 723,506 731,510 731,514 723,511 715,508 707,504 699,501 691,498 683,495 675,491 667,488 659,485 651,482 643,478 635,475 627,473 619,471 611,472 603,475 595,478 587,481 579,484 571,487 563,491 555,494 547,497 539,500 531,504 523,507 515,510"/><polygon points="515,515 523,512 531,508 539,505 547,502 555,499 563,495 571,492 579,489 587,486 595,483 603,480 611,477 619,476 627,478 635,480 643,483 651,487 659,490 667,493 675,496 683,499 691,503 699,506 707,509 715,512 723,516 731,519 731,523 723,520 715,517 707,514 699,511 691,507 683,504 675,501 667,498 659,495 651,491 643,488 635,485 627,483 619,481 611,482 603,485 595,488 587,491 579,494 571,497 563,500 555,503 547,507 539,510 531,513 523,516 515,519"/></g><rect x="515.0" y="0" width="3.21" height="520" fill="#808080" fill-opacity="0.48"/><rect x="518.2" y="0" width="3.21" height="520" fill="#808080" fill-opacity="0.09"/><rect x="521.4" y="0" width="3.21" height="520" fill="#808080" fill-opacity="0.24"/><rect x="524.6" y="0" width="3.21" height="520" fill="#808080" fill-opacity="0.25"/><rect x="534.2" y="0" width="3.21" height="520" fill="#808080" fill-opacity="0.16"/><rect x="540.7" y="0" width="3.21" height="520" fill="#808080" fill-opacity="0.06"/><rect x="543.9" y="0" width="3.21" height="520" fill="#808080" fill-opacity="0.39"/><rect x="547.1" y="0" width="3.21" height="520" fill="#808080" fill-opacity="0.37"/><rect x="559.9" y="0" width="3.21" height="520" fill="#808080" fill-opacity="0.33"/><rect x="576.0" y="0" width="3.21" height="520" fill="#808080" fill-opacity="0.12"/><rect x="582.4" y="0" width="3.21" height="520" fill="#808080" fill-opacity="0.07"/><rect x="585.6" y="0" width="3.21" height="520" fill="#808080" fill-opacity="0.25"/><rect x="588.8" y="0" width="3.21" height="520" fill="#808080" fill-opacity="0.24"/><rect x="592.0" y="0" width="3.21" height="520" fill="#808080" fill-opacity="0.07"/><rect x="595.2" y="0" width="3.21" height="520" fill="#808080" fill-opacity="0.29"/><rect x="598.4" y="0" width="3.21" height="520" fill="#808080" fill-opacity="0.15"/><rect x="601.6" y="0" width="3.21" height="520" fill="#808080" fill-opacity="0.33"/><rect x="608.0" y="0" width="3.21" height="520" fill="#808080" fill-opacity="0.06"/><rect x="611.2" y="0" width="3.21" height="520" fill="#808080" fill-opacity="0.15"/><rect x="614.4" y="0" width="3.21" height="520" fill="#808080" fill-opacity="0.44"/><rect x="617.7" y="0" width="3.21" height="520" fill="#808080" fill-opacity="0.17"/><rect x="620.9" y="0" width="3.21" height="520" fill="#808080" fill-opacity="0.10"/><rect x="633.7" y="0" width="3.21" height="520" fill="#808080" fill-opacity="0.49"/><rect x="636.9" y="0" width="3.21" height="520" fill="#808080" fill-opacity="0.38"/><rect x="640.1" y="0" width="3.21" height="520" fill="#808080" fill-opacity="0.39"/><rect x="643.3" y="0" width="3.21" height="520" fill="#808080" fill-opacity="0.12"/><rect x="646.5" y="0" width="3.21" height="520" fill="#808080" fill-opacity="0.23"/><rect x="652.9" y="0" width="3.21" height="520" fill="#808080" fill-opacity="0.10"/><rect x="659.4" y="0" width="3.21" height="520" fill="#808080" fill-opacity="0.07"/><rect x="669.0" y="0" width="3.21" height="520" fill="#808080" fill-opacity="0.42"/><rect x="675.4" y="0" width="3.21" height="520" fill="#808080" fill-opacity="0.32"/><rect x="678.6" y="0" width="3.21" height="520" fill="#808080" fill-opacity="0.23"/><rect x="685.0" y="0" width="3.21" height="520" fill="#808080" fill-opacity="0.10"/><rect x="688.2" y="0" width="3.21" height="520" fill="#808080" fill-opacity="0.50"/><rect x="691.4" y="0" width="3.21" height="520" fill="#808080" fill-opacity="0.49"/><rect x="694.6" y="0" width="3.21" height="520" fill="#808080" fill-opacity="0.14"/><rect x="697.9" y="0" width="3.21" height="520" fill="#808080" fill-opacity="0.28"/><rect x="701.1" y="0" width="3.21" height="520" fill="#808080" fill-opacity="0.23"/><rect x="707.5" y="0" width="3.21" height="520" fill="#808080" fill-opacity="0.13"/><rect x="710.7" y="0" width="3.21" height="520" fill="#808080" fill-opacity="0.16"/><rect x="713.9" y="0" width="3.21" height="520" fill="#808080" fill-opacity="0.06"/><rect x="717.1" y="0" width="3.21" height="520" fill="#808080" fill-opacity="0.32"/><rect x="720.3" y="0" width="3.21" height="520" fill="#808080" fill-opacity="0.08"/><rect x="723.5" y="0" width="3.21" height="520" fill="#808080" fill-opacity="0.27"/><rect x="729.9" y="0" width="3.21" height="520" fill="#808080" fill-opacity="0.08"/><rect x="515" y="0" width="216" height="520" fill="url(#hf3)"/><rect x="515" y="0" width="216" height="520" fill="url(#fade)" mask="url(#m3)"/></g><g clip-path="url(#c4)"><rect x="691" y="0" width="219" height="520" fill="#fff"/><g filter="url(#wob)" fill="#000"><polygon points="691,55 699,49 707,44 715,38 723,32 731,27 739,21 747,15 755,9 763,4 771,-2 779,-7 787,-11 795,-12 803,-8 811,-3 819,3 827,8 835,14 843,19 851,25 859,31 867,37 875,42 883,48 891,54 899,59 907,65 915,71 915,76 907,70 899,64 891,59 883,53 875,47 867,42 859,36 851,30 843,24 835,19 827,13 819,8 811,2 803,-3 795,-7 787,-6 779,-2 771,3 763,9 755,14 747,20 739,26 731,32 723,37 715,43 707,49 699,54 691,60"/><polygon points="691,65 699,59 707,54 715,48 723,42 731,37 739,31 747,25 755,19 763,14 771,8 779,3 787,-1 795,-2 803,2 811,7 819,13 827,18 835,24 843,29 851,35 859,41 867,47 875,52 883,58 891,64 899,69 907,75 915,81 915,86 907,80 899,74 891,69 883,63 875,57 867,52 859,46 851,40 843,34 835,29 827,23 819,18 811,12 803,7 795,3 787,4 779,8 771,13 763,19 755,24 747,30 739,36 731,42 723,47 715,53 707,59 699,64 691,70"/><polygon points="691,75 699,69 707,64 715,58 723,52 731,47 739,41 747,35 755,29 763,24 771,18 779,13 787,9 795,8 803,12 811,17 819,23 827,28 835,34 843,39 851,45 859,51 867,57 875,62 883,68 891,74 899,79 907,85 915,91 915,96 907,90 899,84 891,79 883,73 875,67 867,62 859,56 851,50 843,44 835,39 827,33 819,28 811,22 803,17 795,13 787,14 779,18 771,23 763,29 755,34 747,40 739,46 731,52 723,57 715,63 707,69 699,74 691,80"/><polygon points="691,85 699,79 707,74 715,68 723,62 731,57 739,51 747,45 755,39 763,34 771,28 779,23 787,19 795,18 803,22 811,27 819,33 827,38 835,44 843,49 851,55 859,61 867,67 875,72 883,78 891,84 899,89 907,95 915,101 915,106 907,100 899,94 891,89 883,83 875,77 867,72 859,66 851,60 843,54 835,49 827,43 819,38 811,32 803,27 795,23 787,24 779,28 771,33 763,39 755,44 747,50 739,56 731,62 723,67 715,73 707,79 699,84 691,90"/><polygon points="691,95 699,89 707,84 715,78 723,72 731,67 739,61 747,55 755,49 763,44 771,38 779,33 787,29 795,28 803,32 811,37 819,43 827,48 835,54 843,59 851,65 859,71 867,77 875,82 883,88 891,94 899,99 907,105 915,111 915,116 907,110 899,104 891,99 883,93 875,87 867,82 859,76 851,70 843,64 835,59 827,53 819,48 811,42 803,37 795,33 787,34 779,38 771,43 763,49 755,54 747,60 739,66 731,72 723,77 715,83 707,89 699,94 691,100"/><polygon points="691,105 699,99 707,94 715,88 723,82 731,77 739,71 747,65 755,59 763,54 771,48 779,43 787,39 795,38 803,42 811,47 819,53 827,58 835,64 843,69 851,75 859,81 867,87 875,92 883,98 891,104 899,109 907,115 915,121 915,126 907,120 899,114 891,109 883,103 875,97 867,92 859,86 851,80 843,74 835,69 827,63 819,58 811,52 803,47 795,43 787,44 779,48 771,53 763,59 755,64 747,70 739,76 731,82 723,87 715,93 707,99 699,104 691,110"/><polygon points="691,115 699,109 707,104 715,98 723,92 731,87 739,81 747,75 755,69 763,64 771,58 779,53 787,49 795,48 803,52 811,57 819,63 827,68 835,74 843,79 851,85 859,91 867,97 875,102 883,108 891,114 899,119 907,125 915,131 915,136 907,130 899,124 891,118 883,113 875,107 867,101 859,96 851,90 843,84 835,79 827,73 819,67 811,62 803,57 795,53 787,54 779,58 771,63 763,69 755,74 747,80 739,86 731,91 723,97 715,103 707,108 699,114 691,120"/><polygon points="691,125 699,119 707,113 715,108 723,102 731,96 739,91 747,85 755,79 763,74 771,68 779,63 787,59 795,58 803,62 811,67 819,72 827,78 835,83 843,89 851,95 859,100 867,106 875,112 883,117 891,123 899,129 907,135 915,140 915,145 907,139 899,133 891,128 883,122 875,117 867,111 859,105 851,100 843,94 835,88 827,83 819,77 811,72 803,67 795,63 787,64 779,68 771,73 763,79 755,84 747,90 739,95 731,101 723,107 715,112 707,118 699,124 691,129"/><polygon points="691,134 699,128 707,123 715,117 723,111 731,106 739,100 747,95 755,89 763,84 771,78 779,73 787,69 795,68 803,72 811,77 819,82 827,88 835,93 843,99 851,104 859,110 867,116 875,121 883,127 891,133 899,138 907,144 915,149 915,154 907,148 899,143 891,137 883,132 875,126 867,120 859,115 851,109 843,104 835,98 827,93 819,87 811,82 803,77 795,73 787,74 779,78 771,83 763,89 755,94 747,100 739,105 731,111 723,116 715,122 707,127 699,133 691,139"/><polygon points="691,143 699,138 707,132 715,127 723,121 731,115 739,110 747,104 755,99 763,93 771,88 779,83 787,79 795,78 803,82 811,87 819,92 827,98 835,103 843,109 851,114 859,120 867,125 875,131 883,136 891,142 899,147 907,153 915,159 915,163 907,158 899,152 891,147 883,141 875,135 867,130 859,124 851,119 843,113 835,108 827,102 819,97 811,92 803,87 795,83 787,84 779,88 771,93 763,98 755,104 747,109 739,115 731,120 723,126 715,131 707,137 699,142 691,148"/><polygon points="691,153 699,147 707,142 715,136 723,131 731,125 739,120 747,114 755,109 763,103 771,98 779,93 787,89 795,88 803,92 811,97 819,102 827,107 835,113 843,118 851,124 859,129 867,135 875,140 883,146 891,151 899,157 907,162 915,168 915,172 907,167 899,161 891,156 883,150 875,145 867,139 859,134 851,129 843,123 835,118 827,112 819,107 811,102 803,97 795,93 787,94 779,98 771,103 763,108 755,114 747,119 739,124 731,130 723,135 715,141 707,146 699,152 691,157"/><polygon points="691,162 699,157 707,151 715,146 723,140 731,135 739,129 747,124 755,118 763,113 771,108 779,103 787,99 795,98 803,102 811,107 819,112 827,117 835,123 843,128 851,133 859,139 867,144 875,150 883,155 891,161 899,166 907,172 915,177 915,182 907,176 899,171 891,165 883,160 875,154 867,149 859,144 851,138 843,133 835,127 827,122 819,117 811,112 803,107 795,103 787,104 779,108 771,113 763,118 755,123 747,129 739,134 731,140 723,145 715,150 707,156 699,161 691,167"/><polygon points="691,171 699,166 707,161 715,155 723,150 731,144 739,139 747,134 755,128 763,123 771,118 779,113 787,109 795,108 803,112 811,117 819,122 827,127 835,132 843,138 851,143 859,148 867,154 875,159 883,165 891,170 899,175 907,181 915,186 915,191 907,185 899,180 891,175 883,169 875,164 867,159 859,153 851,148 843,142 835,137 827,132 819,127 811,122 803,117 795,113 787,114 779,118 771,123 763,128 755,133 747,138 739,144 731,149 723,155 715,160 707,165 699,171 691,176"/><polygon points="691,181 699,175 707,170 715,165 723,159 731,154 739,149 747,143 755,138 763,133 771,128 779,123 787,119 795,118 803,122 811,126 819,132 827,137 835,142 843,147 851,153 859,158 867,163 875,169 883,174 891,179 899,185 907,190 915,195 915,200 907,195 899,189 891,184 883,179 875,173 867,168 859,163 851,157 843,152 835,147 827,142 819,136 811,131 803,127 795,123 787,124 779,128 771,133 763,138 755,143 747,148 739,154 731,159 723,164 715,169 707,175 699,180 691,185"/><polygon points="691,190 699,185 707,179 715,174 723,169 731,164 739,158 747,153 755,148 763,143 771,138 779,133 787,129 795,128 803,132 811,136 819,141 827,147 835,152 843,157 851,162 859,168 867,173 875,178 883,183 891,189 899,194 907,199 915,205 915,209 907,204 899,199 891,193 883,188 875,183 867,178 859,172 851,167 843,162 835,157 827,151 819,146 811,141 803,137 795,133 787,134 779,138 771,143 763,148 755,153 747,158 739,163 731,168 723,174 715,179 707,184 699,190 691,195"/><polygon points="691,199 699,194 707,189 715,184 723,178 731,173 739,168 747,163 755,158 763,153 771,148 779,143 787,139 795,138 803,142 811,146 819,151 827,156 835,162 843,167 851,172 859,177 867,182 875,188 883,193 891,198 899,203 907,209 915,214 915,219 907,213 899,208 891,203 883,198 875,192 867,187 859,182 851,177 843,172 835,166 827,161 819,156 811,151 803,147 795,143 787,144 779,148 771,152 763,157 755,163 747,168 739,173 731,178 723,183 715,188 707,194 699,199 691,204"/><polygon points="691,209 699,204 707,198 715,193 723,188 731,183 739,178 747,173 755,167 763,162 771,157 779,153 787,149 795,148 803,152 811,156 819,161 827,166 835,171 843,176 851,182 859,187 867,192 875,197 883,202 891,208 899,213 907,218 915,223 915,228 907,223 899,217 891,212 883,207 875,202 867,197 859,192 851,186 843,181 835,176 827,171 819,166 811,161 803,157 795,153 787,154 779,158 771,162 763,167 755,172 747,177 739,183 731,188 723,193 715,198 707,203 699,208 691,214"/><polygon points="691,218 699,213 707,208 715,203 723,198 731,193 739,187 747,182 755,177 763,172 771,167 779,163 787,159 795,158 803,162 811,166 819,171 827,176 835,181 843,186 851,191 859,196 867,201 875,207 883,212 891,217 899,222 907,227 915,232 915,237 907,232 899,227 891,222 883,216 875,211 867,206 859,201 851,196 843,191 835,186 827,181 819,176 811,171 803,167 795,163 787,164 779,168 771,172 763,177 755,182 747,187 739,192 731,197 723,202 715,208 707,213 699,218 691,223"/><polygon points="691,228 699,222 707,217 715,212 723,207 731,202 739,197 747,192 755,187 763,182 771,177 779,173 787,169 795,168 803,172 811,176 819,181 827,186 835,191 843,196 851,201 859,206 867,211 875,216 883,221 891,226 899,231 907,236 915,242 915,246 907,241 899,236 891,231 883,226 875,221 867,216 859,211 851,206 843,201 835,196 827,191 819,186 811,181 803,177 795,173 787,174 779,178 771,182 763,187 755,192 747,197 739,202 731,207 723,212 715,217 707,222 699,227 691,232"/><polygon points="691,237 699,232 707,227 715,222 723,217 731,212 739,207 747,202 755,197 763,192 771,187 779,183 787,179 795,178 803,182 811,186 819,191 827,196 835,201 843,206 851,211 859,216 867,221 875,226 883,231 891,236 899,241 907,246 915,251 915,255 907,250 899,245 891,240 883,235 875,230 867,225 859,220 851,215 843,210 835,205 827,201 819,196 811,191 803,187 795,183 787,184 779,188 771,192 763,197 755,202 747,207 739,212 731,217 723,222 715,227 707,232 699,237 691,242"/><polygon points="691,246 699,241 707,236 715,231 723,226 731,221 739,216 747,212 755,207 763,202 771,197 779,193 787,189 795,188 803,191 811,196 819,201 827,205 835,210 843,215 851,220 859,225 867,230 875,235 883,240 891,245 899,250 907,255 915,260 915,265 907,260 899,255 891,250 883,245 875,240 867,235 859,230 851,225 843,220 835,215 827,210 819,206 811,201 803,196 795,193 787,194 779,198 771,202 763,207 755,212 747,216 739,221 731,226 723,231 715,236 707,241 699,246 691,251"/><polygon points="691,256 699,251 707,246 715,241 723,236 731,231 739,226 747,221 755,216 763,212 771,207 779,202 787,199 795,198 803,201 811,206 819,210 827,215 835,220 843,225 851,230 859,235 867,240 875,245 883,250 891,254 899,259 907,264 915,269 915,274 907,269 899,264 891,259 883,254 875,249 867,244 859,240 851,235 843,230 835,225 827,220 819,215 811,211 803,206 795,203 787,204 779,207 771,212 763,217 755,221 747,226 739,231 731,236 723,241 715,246 707,251 699,255 691,260"/><polygon points="691,265 699,260 707,255 715,250 723,246 731,241 739,236 747,231 755,226 763,221 771,217 779,212 787,209 795,208 803,211 811,216 819,220 827,225 835,230 843,235 851,239 859,244 867,249 875,254 883,259 891,264 899,269 907,274 915,278 915,283 907,278 899,273 891,268 883,264 875,259 867,254 859,249 851,244 843,240 835,235 827,230 819,225 811,221 803,216 795,213 787,214 779,217 771,222 763,226 755,231 747,236 739,241 731,246 723,250 715,255 707,260 699,265 691,270"/><polygon points="691,274 699,270 707,265 715,260 723,255 731,250 739,246 747,241 755,236 763,231 771,227 779,222 787,219 795,218 803,221 811,226 819,230 827,235 835,240 843,244 851,249 859,254 867,259 875,264 883,268 891,273 899,278 907,283 915,288 915,292 907,287 899,283 891,278 883,273 875,268 867,264 859,259 851,254 843,249 835,244 827,240 819,235 811,231 803,226 795,223 787,224 779,227 771,232 763,236 755,241 747,246 739,250 731,255 723,260 715,265 707,269 699,274 691,279"/><polygon points="691,284 699,279 707,274 715,269 723,265 731,260 739,255 747,251 755,246 763,241 771,237 779,232 787,229 795,228 803,231 811,236 819,240 827,245 835,249 843,254 851,259 859,264 867,268 875,273 883,278 891,283 899,287 907,292 915,297 915,301 907,297 899,292 891,287 883,283 875,278 867,273 859,268 851,264 843,259 835,254 827,250 819,245 811,240 803,236 795,233 787,234 779,237 771,242 763,246 755,251 747,255 739,260 731,265 723,270 715,274 707,279 699,284 691,288"/><polygon points="691,293 699,288 707,284 715,279 723,274 731,270 739,265 747,260 755,256 763,251 771,247 779,242 787,239 795,238 803,241 811,245 819,250 827,254 835,259 843,264 851,268 859,273 867,278 875,283 883,287 891,292 899,297 907,301 915,306 915,311 907,306 899,301 891,297 883,292 875,287 867,283 859,278 851,273 843,269 835,264 827,259 819,255 811,250 803,246 795,243 787,244 779,247 771,251 763,256 755,261 747,265 739,270 731,274 723,279 715,284 707,288 699,293 691,298"/><polygon points="691,302 699,298 707,293 715,289 723,284 731,279 739,275 747,270 755,265 763,261 771,256 779,252 787,249 795,248 803,251 811,255 819,260 827,264 835,269 843,273 851,278 859,283 867,287 875,292 883,297 891,301 899,306 907,311 915,315 915,320 907,315 899,311 891,306 883,301 875,297 867,292 859,288 851,283 843,278 835,274 827,269 819,265 811,260 803,256 795,253 787,254 779,257 771,261 763,266 755,270 747,275 739,279 731,284 723,289 715,293 707,298 699,303 691,307"/><polygon points="691,312 699,307 707,303 715,298 723,293 731,289 739,284 747,280 755,275 763,271 771,266 779,262 787,259 795,258 803,261 811,265 819,270 827,274 835,279 843,283 851,288 859,292 867,297 875,301 883,306 891,311 899,315 907,320 915,325 915,329 907,325 899,320 891,315 883,311 875,306 867,302 859,297 851,293 843,288 835,283 827,279 819,275 811,270 803,266 795,263 787,264 779,267 771,271 763,276 755,280 747,285 739,289 731,294 723,298 715,303 707,307 699,312 691,317"/><polygon points="691,321 699,317 707,312 715,308 723,303 731,299 739,294 747,290 755,285 763,281 771,276 779,272 787,269 795,268 803,271 811,275 819,279 827,284 835,288 843,293 851,297 859,302 867,306 875,311 883,316 891,320 899,325 907,329 915,334 915,338 907,334 899,329 891,325 883,320 875,316 867,311 859,307 851,302 843,298 835,293 827,289 819,284 811,280 803,276 795,273 787,274 779,277 771,281 763,286 755,290 747,294 739,299 731,303 723,308 715,312 707,317 699,321 691,326"/><polygon points="691,331 699,326 707,322 715,317 723,313 731,308 739,304 747,299 755,295 763,290 771,286 779,282 787,279 795,278 803,281 811,285 819,289 827,294 835,298 843,303 851,307 859,312 867,316 875,320 883,325 891,329 899,334 907,338 915,343 915,348 907,343 899,339 891,334 883,330 875,325 867,321 859,316 851,312 843,307 835,303 827,299 819,294 811,290 803,286 795,283 787,284 779,287 771,291 763,295 755,300 747,304 739,309 731,313 723,317 715,322 707,326 699,331 691,335"/><polygon points="691,340 699,336 707,331 715,327 723,322 731,318 739,313 747,309 755,305 763,300 771,296 779,292 787,289 795,288 803,291 811,295 819,299 827,304 835,308 843,312 851,317 859,321 867,326 875,330 883,334 891,339 899,343 907,348 915,352 915,357 907,352 899,348 891,344 883,339 875,335 867,330 859,326 851,322 843,317 835,313 827,308 819,304 811,300 803,296 795,293 787,294 779,297 771,301 763,305 755,310 747,314 739,318 731,323 723,327 715,331 707,336 699,340 691,345"/><polygon points="691,349 699,345 707,341 715,336 723,332 731,327 739,323 747,319 755,314 763,310 771,306 779,302 787,299 795,298 803,301 811,305 819,309 827,313 835,318 843,322 851,326 859,331 867,335 875,339 883,344 891,348 899,353 907,357 915,361 915,366 907,362 899,357 891,353 883,349 875,344 867,340 859,335 851,331 843,327 835,323 827,318 819,314 811,310 803,306 795,303 787,304 779,307 771,311 763,315 755,319 747,324 739,328 731,332 723,337 715,341 707,345 699,350 691,354"/><polygon points="691,359 699,354 707,350 715,346 723,341 731,337 739,333 747,328 755,324 763,320 771,316 779,312 787,309 795,308 803,311 811,315 819,319 827,323 835,327 843,332 851,336 859,340 867,345 875,349 883,353 891,358 899,362 907,366 915,371 915,375 907,371 899,367 891,362 883,358 875,354 867,349 859,345 851,341 843,337 835,332 827,328 819,324 811,320 803,316 795,313 787,314 779,317 771,321 763,325 755,329 747,333 739,338 731,342 723,346 715,350 707,355 699,359 691,363"/><polygon points="691,368 699,364 707,359 715,355 723,351 731,347 739,342 747,338 755,334 763,330 771,326 779,322 787,319 795,318 803,321 811,325 819,329 827,333 835,337 843,341 851,346 859,350 867,354 875,358 883,363 891,367 899,371 907,376 915,380 915,384 907,380 899,376 891,372 883,367 875,363 867,359 859,355 851,350 843,346 835,342 827,338 819,334 811,330 803,326 795,323 787,324 779,327 771,331 763,335 755,339 747,343 739,347 731,352 723,356 715,360 707,364 699,368 691,373"/><polygon points="691,377 699,373 707,369 715,365 723,361 731,356 739,352 747,348 755,344 763,340 771,336 779,332 787,329 795,328 803,331 811,335 819,339 827,343 835,347 843,351 851,355 859,359 867,364 875,368 883,372 891,376 899,381 907,385 915,389 915,394 907,389 899,385 891,381 883,377 875,373 867,368 859,364 851,360 843,356 835,352 827,348 819,344 811,340 803,336 795,333 787,334 779,337 771,341 763,345 755,349 747,353 739,357 731,361 723,365 715,370 707,374 699,378 691,382"/><polygon points="691,387 699,383 707,378 715,374 723,370 731,366 739,362 747,358 755,354 763,350 771,346 779,342 787,339 795,338 803,341 811,345 819,349 827,353 835,357 843,361 851,365 859,369 867,373 875,377 883,382 891,386 899,390 907,394 915,398 915,403 907,399 899,395 891,390 883,386 875,382 867,378 859,374 851,370 843,366 835,362 827,357 819,353 811,350 803,346 795,343 787,344 779,347 771,351 763,354 755,358 747,363 739,367 731,371 723,375 715,379 707,383 699,387 691,391"/><polygon points="691,396 699,392 707,388 715,384 723,380 731,376 739,372 747,367 755,363 763,359 771,355 779,352 787,349 795,348 803,351 811,355 819,358 827,362 835,366 843,370 851,375 859,379 867,383 875,387 883,391 891,395 899,399 907,403 915,407 915,412 907,408 899,404 891,400 883,396 875,392 867,388 859,383 851,379 843,375 835,371 827,367 819,363 811,359 803,356 795,353 787,354 779,357 771,360 763,364 755,368 747,372 739,376 731,380 723,384 715,389 707,393 699,397 691,401"/><polygon points="691,405 699,401 707,397 715,393 723,389 731,385 739,381 747,377 755,373 763,369 771,365 779,362 787,359 795,358 803,361 811,364 819,368 827,372 835,376 843,380 851,384 859,388 867,392 875,396 883,400 891,404 899,409 907,413 915,417 915,421 907,417 899,413 891,409 883,405 875,401 867,397 859,393 851,389 843,385 835,381 827,377 819,373 811,369 803,366 795,363 787,364 779,367 771,370 763,374 755,378 747,382 739,386 731,390 723,394 715,398 707,402 699,406 691,410"/><polygon points="691,415 699,411 707,407 715,403 723,399 731,395 739,391 747,387 755,383 763,379 771,375 779,372 787,369 795,368 803,371 811,374 819,378 827,382 835,386 843,390 851,394 859,398 867,402 875,406 883,410 891,414 899,418 907,422 915,426 915,430 907,427 899,423 891,419 883,415 875,411 867,407 859,403 851,399 843,395 835,391 827,387 819,383 811,379 803,376 795,373 787,374 779,377 771,380 763,384 755,388 747,392 739,396 731,400 723,404 715,408 707,412 699,416 691,420"/><polygon points="691,424 699,420 707,416 715,412 723,408 731,405 739,401 747,397 755,393 763,389 771,385 779,382 787,379 795,378 803,381 811,384 819,388 827,392 835,396 843,400 851,404 859,407 867,411 875,415 883,419 891,423 899,427 907,431 915,435 915,440 907,436 899,432 891,428 883,424 875,420 867,416 859,412 851,408 843,404 835,401 827,397 819,393 811,389 803,386 795,383 787,384 779,387 771,390 763,394 755,398 747,402 739,405 731,409 723,413 715,417 707,421 699,425 691,429"/><polygon points="691,434 699,430 707,426 715,422 723,418 731,414 739,410 747,406 755,403 763,399 771,395 779,392 787,389 795,388 803,391 811,394 819,398 827,402 835,405 843,409 851,413 859,417 867,421 875,425 883,429 891,433 899,437 907,440 915,444 915,449 907,445 899,441 891,437 883,433 875,430 867,426 859,422 851,418 843,414 835,410 827,407 819,403 811,399 803,396 795,393 787,394 779,397 771,400 763,404 755,407 747,411 739,415 731,419 723,423 715,427 707,431 699,434 691,438"/><polygon points="691,443 699,439 707,435 715,431 723,428 731,424 739,420 747,416 755,412 763,409 771,405 779,401 787,399 795,398 803,401 811,404 819,408 827,411 835,415 843,419 851,423 859,427 867,430 875,434 883,438 891,442 899,446 907,450 915,454 915,458 907,454 899,450 891,447 883,443 875,439 867,435 859,431 851,428 843,424 835,420 827,416 819,413 811,409 803,406 795,403 787,404 779,406 771,410 763,414 755,417 747,421 739,425 731,429 723,432 715,436 707,440 699,444 691,448"/><polygon points="691,452 699,449 707,445 715,441 723,437 731,433 739,430 747,426 755,422 763,418 771,415 779,411 787,409 795,408 803,411 811,414 819,418 827,421 835,425 843,429 851,432 859,436 867,440 875,444 883,448 891,451 899,455 907,459 915,463 915,467 907,464 899,460 891,456 883,452 875,449 867,445 859,441 851,437 843,434 835,430 827,426 819,423 811,419 803,416 795,413 787,414 779,416 771,420 763,423 755,427 747,431 739,435 731,438 723,442 715,446 707,449 699,453 691,457"/><polygon points="691,462 699,458 707,454 715,450 723,447 731,443 739,439 747,436 755,432 763,428 771,425 779,421 787,419 795,418 803,421 811,424 819,427 827,431 835,435 843,438 851,442 859,446 867,450 875,453 883,457 891,461 899,464 907,468 915,472 915,477 907,473 899,469 891,465 883,462 875,458 867,454 859,451 851,447 843,443 835,440 827,436 819,432 811,429 803,426 795,423 787,424 779,426 771,430 763,433 755,437 747,441 739,444 731,448 723,452 715,455 707,459 699,463 691,466"/><polygon points="691,471 699,467 707,464 715,460 723,456 731,453 739,449 747,445 755,442 763,438 771,435 779,431 787,429 795,428 803,431 811,434 819,437 827,441 835,444 843,448 851,452 859,455 867,459 875,463 883,466 891,470 899,474 907,477 915,481 915,486 907,482 899,478 891,475 883,471 875,468 867,464 859,460 851,457 843,453 835,449 827,446 819,442 811,439 803,436 795,433 787,434 779,436 771,440 763,443 755,447 747,450 739,454 731,458 723,461 715,465 707,468 699,472 691,476"/><polygon points="691,480 699,477 707,473 715,470 723,466 731,462 739,459 747,455 755,452 763,448 771,445 779,441 787,439 795,438 803,441 811,444 819,447 827,451 835,454 843,458 851,461 859,465 867,469 875,472 883,476 891,480 899,483 907,487 915,490 915,495 907,491 899,488 891,484 883,481 875,477 867,473 859,470 851,466 843,463 835,459 827,456 819,452 811,449 803,446 795,443 787,444 779,446 771,450 763,453 755,456 747,460 739,464 731,467 723,471 715,474 707,478 699,481 691,485"/><polygon points="691,490 699,486 707,483 715,479 723,476 731,472 739,468 747,465 755,461 763,458 771,454 779,451 787,449 795,448 803,451 811,454 819,457 827,460 835,464 843,468 851,471 859,475 867,478 875,482 883,485 891,489 899,492 907,496 915,500 915,504 907,501 899,497 891,494 883,490 875,486 867,483 859,479 851,476 843,472 835,469 827,465 819,462 811,459 803,455 795,453 787,454 779,456 771,459 763,463 755,466 747,470 739,473 731,477 723,480 715,484 707,487 699,491 691,494"/><polygon points="691,499 699,496 707,492 715,489 723,485 731,482 739,478 747,475 755,471 763,468 771,464 779,461 787,459 795,458 803,460 811,464 819,467 827,470 835,474 843,477 851,481 859,484 867,488 875,491 883,495 891,498 899,502 907,505 915,509 915,513 907,510 899,506 891,503 883,499 875,496 867,492 859,489 851,486 843,482 835,479 827,475 819,472 811,469 803,465 795,463 787,464 779,466 771,469 763,473 755,476 747,479 739,483 731,486 723,490 715,493 707,497 699,500 691,504"/><polygon points="691,509 699,505 707,502 715,498 723,495 731,491 739,488 747,484 755,481 763,478 771,474 779,471 787,469 795,468 803,470 811,473 819,477 827,480 835,484 843,487 851,490 859,494 867,497 875,501 883,504 891,508 899,511 907,515 915,518 915,523 907,519 899,516 891,512 883,509 875,505 867,502 859,499 851,495 843,492 835,488 827,485 819,482 811,478 803,475 795,473 787,474 779,476 771,479 763,483 755,486 747,489 739,493 731,496 723,499 715,503 707,506 699,510 691,513"/><polygon points="691,518 699,514 707,511 715,508 723,504 731,501 739,497 747,494 755,491 763,487 771,484 779,481 787,479 795,478 803,480 811,483 819,487 827,490 835,493 843,497 851,500 859,503 867,507 875,510 883,514 891,517 899,520 907,524 915,527 915,532 907,528 899,525 891,522 883,518 875,515 867,512 859,508 851,505 843,501 835,498 827,495 819,492 811,488 803,485 795,483 787,484 779,486 771,489 763,492 755,496 747,499 739,502 731,506 723,509 715,512 707,516 699,519 691,523"/><polygon points="691,527 699,524 707,521 715,517 723,514 731,511 739,507 747,504 755,501 763,497 771,494 779,491 787,489 795,488 803,490 811,493 819,496 827,500 835,503 843,506 851,510 859,513 867,516 875,520 883,523 891,526 899,530 907,533 915,536 915,541 907,538 899,534 891,531 883,528 875,524 867,521 859,518 851,514 843,511 835,508 827,505 819,501 811,498 803,495 795,493 787,494 779,496 771,499 763,502 755,505 747,509 739,512 731,515 723,519 715,522 707,525 699,529 691,532"/><polygon points="691,537 699,533 707,530 715,527 723,523 731,520 739,517 747,514 755,510 763,507 771,504 779,501 787,499 795,498 803,500 811,503 819,506 827,510 835,513 843,516 851,519 859,523 867,526 875,529 883,532 891,536 899,539 907,542 915,546 915,550 907,547 899,544 891,540 883,537 875,534 867,531 859,527 851,524 843,521 835,518 827,514 819,511 811,508 803,505 795,503 787,504 779,506 771,509 763,512 755,515 747,518 739,522 731,525 723,528 715,531 707,535 699,538 691,541"/><polygon points="691,546 699,543 707,539 715,536 723,533 731,530 739,527 747,523 755,520 763,517 771,514 779,511 787,509 795,508 803,510 811,513 819,516 827,519 835,523 843,526 851,529 859,532 867,535 875,539 883,542 891,545 899,548 907,552 915,555 915,559 907,556 899,553 891,550 883,547 875,543 867,540 859,537 851,534 843,531 835,527 827,524 819,521 811,518 803,515 795,513 787,514 779,516 771,519 763,522 755,525 747,528 739,531 731,535 723,538 715,541 707,544 699,547 691,551"/></g><rect x="691.0" y="0" width="3.21" height="520" fill="#808080" fill-opacity="0.46"/><rect x="694.2" y="0" width="3.21" height="520" fill="#808080" fill-opacity="0.37"/><rect x="697.4" y="0" width="3.21" height="520" fill="#808080" fill-opacity="0.25"/><rect x="707.0" y="0" width="3.21" height="520" fill="#808080" fill-opacity="0.24"/><rect x="710.2" y="0" width="3.21" height="520" fill="#808080" fill-opacity="0.31"/><rect x="719.9" y="0" width="3.21" height="520" fill="#808080" fill-opacity="0.39"/><rect x="726.3" y="0" width="3.21" height="520" fill="#808080" fill-opacity="0.20"/><rect x="732.7" y="0" width="3.21" height="520" fill="#808080" fill-opacity="0.19"/><rect x="735.9" y="0" width="3.21" height="520" fill="#808080" fill-opacity="0.36"/><rect x="739.1" y="0" width="3.21" height="520" fill="#808080" fill-opacity="0.15"/><rect x="742.3" y="0" width="3.21" height="520" fill="#808080" fill-opacity="0.06"/><rect x="748.7" y="0" width="3.21" height="520" fill="#808080" fill-opacity="0.18"/><rect x="752.0" y="0" width="3.21" height="520" fill="#808080" fill-opacity="0.18"/><rect x="755.2" y="0" width="3.21" height="520" fill="#808080" fill-opacity="0.07"/><rect x="758.4" y="0" width="3.21" height="520" fill="#808080" fill-opacity="0.09"/><rect x="761.6" y="0" width="3.21" height="520" fill="#808080" fill-opacity="0.13"/><rect x="771.2" y="0" width="3.21" height="520" fill="#808080" fill-opacity="0.14"/><rect x="777.6" y="0" width="3.21" height="520" fill="#808080" fill-opacity="0.16"/><rect x="780.8" y="0" width="3.21" height="520" fill="#808080" fill-opacity="0.31"/><rect x="784.0" y="0" width="3.21" height="520" fill="#808080" fill-opacity="0.33"/><rect x="790.4" y="0" width="3.21" height="520" fill="#808080" fill-opacity="0.07"/><rect x="793.7" y="0" width="3.21" height="520" fill="#808080" fill-opacity="0.42"/><rect x="800.1" y="0" width="3.21" height="520" fill="#808080" fill-opacity="0.49"/><rect x="806.5" y="0" width="3.21" height="520" fill="#808080" fill-opacity="0.34"/><rect x="812.9" y="0" width="3.21" height="520" fill="#808080" fill-opacity="0.21"/><rect x="816.1" y="0" width="3.21" height="520" fill="#808080" fill-opacity="0.31"/><rect x="819.3" y="0" width="3.21" height="520" fill="#808080" fill-opacity="0.13"/><rect x="822.5" y="0" width="3.21" height="520" fill="#808080" fill-opacity="0.18"/><rect x="825.7" y="0" width="3.21" height="520" fill="#808080" fill-opacity="0.41"/><rect x="828.9" y="0" width="3.21" height="520" fill="#808080" fill-opacity="0.50"/><rect x="835.4" y="0" width="3.21" height="520" fill="#808080" fill-opacity="0.12"/><rect x="841.8" y="0" width="3.21" height="520" fill="#808080" fill-opacity="0.06"/><rect x="851.4" y="0" width="3.21" height="520" fill="#808080" fill-opacity="0.18"/><rect x="864.2" y="0" width="3.21" height="520" fill="#808080" fill-opacity="0.32"/><rect x="873.9" y="0" width="3.21" height="520" fill="#808080" fill-opacity="0.18"/><rect x="877.1" y="0" width="3.21" height="520" fill="#808080" fill-opacity="0.24"/><rect x="880.3" y="0" width="3.21" height="520" fill="#808080" fill-opacity="0.18"/><rect x="883.5" y="0" width="3.21" height="520" fill="#808080" fill-opacity="0.13"/><rect x="886.7" y="0" width="3.21" height="520" fill="#808080" fill-opacity="0.13"/><rect x="889.9" y="0" width="3.21" height="520" fill="#808080" fill-opacity="0.24"/><rect x="896.3" y="0" width="3.21" height="520" fill="#808080" fill-opacity="0.34"/><rect x="899.5" y="0" width="3.21" height="520" fill="#808080" fill-opacity="0.22"/><rect x="902.7" y="0" width="3.21" height="520" fill="#808080" fill-opacity="0.36"/><rect x="905.9" y="0" width="3.21" height="520" fill="#808080" fill-opacity="0.39"/><rect x="909.1" y="0" width="3.21" height="520" fill="#808080" fill-opacity="0.34"/><rect x="691" y="0" width="219" height="520" fill="url(#hf4)"/><rect x="691" y="0" width="219" height="520" fill="url(#fade)" mask="url(#m4)"/></g><g clip-path="url(#c5)"><rect x="870" y="0" width="214" height="520" fill="#fff"/><g filter="url(#wob)" fill="#000"><polygon points="870,92 878,86 886,80 894,74 902,69 910,63 918,57 926,52 934,46 942,40 950,35 958,29 966,24 974,19 982,18 990,21 998,26 1006,32 1014,37 1022,43 1030,49 1038,54 1046,60 1054,66 1062,72 1070,77 1078,83 1086,89 1086,94 1078,88 1070,82 1062,77 1054,71 1046,65 1038,59 1030,54 1022,48 1014,42 1006,37 998,31 990,26 982,23 974,24 966,29 958,34 950,40 942,45 934,51 926,57 918,62 910,68 902,74 894,79 886,85 878,91 870,97"/><polygon points="870,102 878,96 886,90 894,84 902,79 910,73 918,67 926,62 934,56 942,50 950,45 958,39 966,34 974,29 982,28 990,31 998,36 1006,42 1014,47 1022,53 1030,59 1038,64 1046,70 1054,76 1062,82 1070,87 1078,93 1086,99 1086,104 1078,98 1070,92 1062,87 1054,81 1046,75 1038,69 1030,64 1022,58 1014,52 1006,47 998,41 990,36 982,33 974,34 966,39 958,44 950,50 942,55 934,61 926,67 918,72 910,78 902,84 894,89 886,95 878,101 870,107"/><polygon points="870,112 878,106 886,100 894,94 902,89 910,83 918,77 926,72 934,66 942,60 950,55 958,49 966,44 974,39 982,38 990,41 998,46 1006,52 1014,57 1022,63 1030,69 1038,74 1046,80 1054,86 1062,92 1070,97 1078,103 1086,109 1086,114 1078,108 1070,102 1062,97 1054,91 1046,85 1038,79 1030,74 1022,68 1014,62 1006,57 998,51 990,46 982,43 974,44 966,49 958,54 950,60 942,65 934,71 926,77 918,82 910,88 902,94 894,99 886,105 878,111 870,117"/><polygon points="870,122 878,116 886,110 894,104 902,99 910,93 918,87 926,82 934,76 942,70 950,65 958,59 966,54 974,49 982,48 990,51 998,56 1006,62 1014,67 1022,73 1030,79 1038,84 1046,90 1054,96 1062,102 1070,107 1078,113 1086,119 1086,124 1078,118 1070,112 1062,107 1054,101 1046,95 1038,89 1030,84 1022,78 1014,72 1006,67 998,61 990,56 982,53 974,54 966,59 958,64 950,70 942,75 934,81 926,87 918,92 910,98 902,104 894,109 886,115 878,121 870,127"/><polygon points="870,132 878,126 886,120 894,114 902,109 910,103 918,97 926,92 934,86 942,80 950,75 958,69 966,64 974,59 982,58 990,61 998,66 1006,72 1014,77 1022,83 1030,89 1038,94 1046,100 1054,106 1062,112 1070,117 1078,123 1086,129 1086,134 1078,128 1070,122 1062,117 1054,111 1046,105 1038,99 1030,94 1022,88 1014,82 1006,77 998,71 990,66 982,63 974,64 966,69 958,74 950,80 942,85 934,91 926,97 918,102 910,108 902,114 894,119 886,125 878,131 870,137"/><polygon points="870,142 878,136 886,130 894,124 902,119 910,113 918,107 926,102 934,96 942,90 950,85 958,79 966,74 974,69 982,68 990,71 998,76 1006,82 1014,87 1022,93 1030,99 1038,104 1046,110 1054,116 1062,122 1070,127 1078,133 1086,139 1086,144 1078,138 1070,132 1062,127 1054,121 1046,115 1038,109 1030,104 1022,98 1014,92 1006,87 998,81 990,76 982,73 974,74 966,79 958,84 950,90 942,95 934,101 926,107 918,112 910,118 902,124 894,129 886,135 878,141 870,147"/><polygon points="870,152 878,146 886,140 894,134 902,129 910,123 918,117 926,112 934,106 942,100 950,95 958,89 966,84 974,79 982,78 990,81 998,86 1006,92 1014,97 1022,103 1030,109 1038,114 1046,120 1054,126 1062,132 1070,137 1078,143 1086,149 1086,153 1078,148 1070,142 1062,136 1054,131 1046,125 1038,119 1030,114 1022,108 1014,102 1006,97 998,91 990,86 982,83 974,84 966,89 958,94 950,100 942,105 934,111 926,116 918,122 910,128 902,133 894,139 886,145 878,151 870,156"/><polygon points="870,161 878,155 886,150 894,144 902,138 910,133 918,127 926,121 934,116 942,110 950,104 958,99 966,94 974,89 982,88 990,91 998,96 1006,102 1014,107 1022,113 1030,118 1038,124 1046,130 1054,135 1062,141 1070,147 1078,152 1086,158 1086,163 1078,157 1070,151 1062,146 1054,140 1046,135 1038,129 1030,123 1022,118 1014,112 1006,107 998,101 990,96 982,93 974,94 966,99 958,104 950,109 942,115 934,120 926,126 918,132 910,137 902,143 894,149 886,154 878,160 870,166"/><polygon points="870,170 878,165 886,159 894,153 902,148 910,142 918,137 926,131 934,125 942,120 950,114 958,109 966,104 974,99 982,98 990,101 998,106 1006,112 1014,117 1022,123 1030,128 1038,134 1046,139 1054,145 1062,151 1070,156 1078,162 1086,167 1086,172 1078,166 1070,161 1062,155 1054,150 1046,144 1038,139 1030,133 1022,127 1014,122 1006,116 998,111 990,106 982,103 974,104 966,109 958,114 950,119 942,125 934,130 926,136 918,141 910,147 902,152 894,158 886,164 878,169 870,175"/><polygon points="870,180 878,174 886,168 894,163 902,157 910,152 918,146 926,141 934,135 942,130 950,124 958,119 966,114 974,109 982,108 990,111 998,116 1006,121 1014,127 1022,132 1030,138 1038,143 1046,149 1054,154 1062,160 1070,166 1078,171 1086,177 1086,181 1078,176 1070,170 1062,165 1054,159 1046,154 1038,148 1030,143 1022,137 1014,132 1006,126 998,121 990,116 982,113 974,114 966,119 958,124 950,129 942,134 934,140 926,145 918,151 910,156 902,162 894,168 886,173 878,179 870,184"/><polygon points="870,189 878,183 886,178 894,172 902,167 910,161 918,156 926,150 934,145 942,139 950,134 958,129 966,124 974,119 982,118 990,121 998,126 1006,131 1014,137 1022,142 1030,148 1038,153 1046,159 1054,164 1062,170 1070,175 1078,181 1086,186 1086,191 1078,185 1070,180 1062,174 1054,169 1046,163 1038,158 1030,152 1022,147 1014,142 1006,136 998,131 990,126 982,123 974,124 966,129 958,134 950,139 942,144 934,150 926,155 918,161 910,166 902,172 894,177 886,183 878,188 870,194"/><polygon points="870,198 878,193 886,187 894,182 902,176 910,171 918,165 926,160 934,155 942,149 950,144 958,139 966,134 974,129 982,128 990,131 998,136 1006,141 1014,146 1022,152 1030,157 1038,163 1046,168 1054,174 1062,179 1070,184 1078,190 1086,195 1086,200 1078,195 1070,189 1062,184 1054,178 1046,173 1038,168 1030,162 1022,157 1014,151 1006,146 998,141 990,136 982,133 974,134 966,139 958,144 950,149 942,154 934,159 926,165 918,170 910,176 902,181 894,186 886,192 878,197 870,203"/><polygon points="870,207 878,202 886,197 894,191 902,186 910,180 918,175 926,170 934,164 942,159 950,154 958,148 966,144 974,139 982,138 990,141 998,146 1006,151 1014,156 1022,162 1030,167 1038,172 1046,178 1054,183 1062,189 1070,194 1078,199 1086,205 1086,209 1078,204 1070,199 1062,193 1054,188 1046,183 1038,177 1030,172 1022,166 1014,161 1006,156 998,151 990,146 982,143 974,144 966,148 958,153 950,159 942,164 934,169 926,174 918,180 910,185 902,191 894,196 886,201 878,207 870,212"/><polygon points="870,217 878,211 886,206 894,201 902,195 910,190 918,185 926,179 934,174 942,169 950,163 958,158 966,153 974,149 982,148 990,151 998,156 1006,161 1014,166 1022,171 1030,177 1038,182 1046,187 1054,193 1062,198 1070,203 1078,209 1086,214 1086,219 1078,213 1070,208 1062,203 1054,197 1046,192 1038,187 1030,182 1022,176 1014,171 1006,166 998,161 990,156 982,153 974,154 966,158 958,163 950,168 942,174 934,179 926,184 918,189 910,195 902,200 894,205 886,211 878,216 870,221"/><polygon points="870,226 878,221 886,215 894,210 902,205 910,200 918,194 926,189 934,184 942,179 950,173 958,168 966,163 974,159 982,158 990,161 998,166 1006,171 1014,176 1022,181 1030,186 1038,192 1046,197 1054,202 1062,208 1070,213 1078,218 1086,223 1086,228 1078,223 1070,218 1062,212 1054,207 1046,202 1038,196 1030,191 1022,186 1014,181 1006,176 998,171 990,166 982,163 974,164 966,168 958,173 950,178 942,183 934,189 926,194 918,199 910,204 902,210 894,215 886,220 878,225 870,231"/><polygon points="870,235 878,230 886,225 894,220 902,214 910,209 918,204 926,199 934,193 942,188 950,183 958,178 966,173 974,169 982,168 990,171 998,176 1006,181 1014,186 1022,191 1030,196 1038,201 1046,207 1054,212 1062,217 1070,222 1078,227 1086,233 1086,237 1078,232 1070,227 1062,222 1054,217 1046,211 1038,206 1030,201 1022,196 1014,191 1006,186 998,181 990,176 982,173 974,174 966,178 958,183 950,188 942,193 934,198 926,204 918,209 910,214 902,219 894,224 886,230 878,235 870,240"/><polygon points="870,245 878,239 886,234 894,229 902,224 910,219 918,214 926,208 934,203 942,198 950,193 958,188 966,183 974,179 982,178 990,181 998,186 1006,191 1014,196 1022,201 1030,206 1038,211 1046,216 1054,221 1062,226 1070,232 1078,237 1086,242 1086,247 1078,242 1070,236 1062,231 1054,226 1046,221 1038,216 1030,211 1022,206 1014,200 1006,195 998,191 990,186 982,183 974,184 966,188 958,193 950,198 942,203 934,208 926,213 918,218 910,224 902,229 894,234 886,239 878,244 870,249"/><polygon points="870,254 878,249 886,244 894,239 902,233 910,228 918,223 926,218 934,213 942,208 950,203 958,198 966,193 974,189 982,188 990,191 998,196 1006,200 1014,205 1022,210 1030,216 1038,221 1046,226 1054,231 1062,236 1070,241 1078,246 1086,251 1086,256 1078,251 1070,246 1062,241 1054,236 1046,231 1038,225 1030,220 1022,215 1014,210 1006,205 998,201 990,196 982,193 974,194 966,198 958,203 950,208 942,213 934,218 926,223 918,228 910,233 902,238 894,243 886,248 878,254 870,259"/><polygon points="870,263 878,258 886,253 894,248 902,243 910,238 918,233 926,228 934,223 942,218 950,213 958,208 966,203 974,199 982,198 990,201 998,205 1006,210 1014,215 1022,220 1030,225 1038,230 1046,235 1054,240 1062,245 1070,251 1078,256 1086,261 1086,265 1078,260 1070,255 1062,250 1054,245 1046,240 1038,235 1030,230 1022,225 1014,220 1006,215 998,210 990,206 982,203 974,204 966,208 958,213 950,218 942,223 934,228 926,233 918,238 910,243 902,248 894,253 886,258 878,263 870,268"/><polygon points="870,273 878,268 886,263 894,257 902,252 910,247 918,242 926,237 934,232 942,227 950,223 958,218 966,213 974,209 982,208 990,211 998,215 1006,220 1014,225 1022,230 1030,235 1038,240 1046,245 1054,250 1062,255 1070,260 1078,265 1086,270 1086,275 1078,270 1070,265 1062,260 1054,255 1046,250 1038,245 1030,240 1022,235 1014,230 1006,225 998,220 990,216 982,213 974,214 966,218 958,223 950,227 942,232 934,237 926,242 918,247 910,252 902,257 894,262 886,267 878,272 870,277"/><polygon points="870,282 878,277 886,272 894,267 902,262 910,257 918,252 926,247 934,242 942,237 950,232 958,228 966,223 974,219 982,218 990,221 998,225 1006,230 1014,235 1022,240 1030,245 1038,250 1046,255 1054,259 1062,264 1070,269 1078,274 1086,279 1086,284 1078,279 1070,274 1062,269 1054,264 1046,259 1038,254 1030,249 1022,245 1014,240 1006,235 998,230 990,226 982,223 974,224 966,228 958,233 950,237 942,242 934,247 926,252 918,257 910,262 902,267 894,272 886,277 878,282 870,287"/><polygon points="870,291 878,286 886,281 894,276 902,272 910,267 918,262 926,257 934,252 942,247 950,242 958,238 966,233 974,229 982,228 990,231 998,235 1006,240 1014,245 1022,249 1030,254 1038,259 1046,264 1054,269 1062,274 1070,279 1078,284 1086,289 1086,293 1078,289 1070,284 1062,279 1054,274 1046,269 1038,264 1030,259 1022,254 1014,250 1006,245 998,240 990,236 982,233 974,234 966,238 958,242 950,247 942,252 934,257 926,262 918,266 910,271 902,276 894,281 886,286 878,291 870,296"/><polygon points="870,301 878,296 886,291 894,286 902,281 910,276 918,271 926,266 934,262 942,257 950,252 958,247 966,243 974,239 982,238 990,241 998,245 1006,250 1014,254 1022,259 1030,264 1038,269 1046,274 1054,279 1062,283 1070,288 1078,293 1086,298 1086,303 1078,298 1070,293 1062,288 1054,283 1046,279 1038,274 1030,269 1022,264 1014,259 1006,255 998,250 990,246 982,243 974,244 966,248 958,252 950,257 942,262 934,267 926,271 918,276 910,281 902,286 894,291 886,295 878,300 870,305"/><polygon points="870,310 878,305 886,300 894,295 902,291 910,286 918,281 926,276 934,271 942,267 950,262 958,257 966,253 974,249 982,248 990,251 998,255 1006,260 1014,264 1022,269 1030,274 1038,279 1046,283 1054,288 1062,293 1070,298 1078,303 1086,307 1086,312 1078,307 1070,302 1062,298 1054,293 1046,288 1038,283 1030,279 1022,274 1014,269 1006,265 998,260 990,256 982,253 974,254 966,258 958,262 950,267 942,272 934,276 926,281 918,286 910,291 902,295 894,300 886,305 878,310 870,314"/><polygon points="870,319 878,314 886,310 894,305 902,300 910,295 918,291 926,286 934,281 942,276 950,272 958,267 966,263 974,259 982,258 990,261 998,265 1006,269 1014,274 1022,279 1030,283 1038,288 1046,293 1054,298 1062,302 1070,307 1078,312 1086,317 1086,321 1078,317 1070,312 1062,307 1054,302 1046,298 1038,293 1030,288 1022,284 1014,279 1006,274 998,270 990,266 982,263 974,264 966,268 958,272 950,277 942,281 934,286 926,291 918,295 910,300 902,305 894,310 886,314 878,319 870,324"/><polygon points="870,328 878,324 886,319 894,314 902,310 910,305 918,300 926,296 934,291 942,286 950,282 958,277 966,273 974,269 982,268 990,271 998,275 1006,279 1014,284 1022,289 1030,293 1038,298 1046,303 1054,307 1062,312 1070,317 1078,321 1086,326 1086,331 1078,326 1070,321 1062,317 1054,312 1046,307 1038,303 1030,298 1022,293 1014,289 1006,284 998,280 990,276 982,273 974,274 966,278 958,282 950,287 942,291 934,296 926,300 918,305 910,310 902,314 894,319 886,324 878,328 870,333"/><polygon points="870,338 878,333 886,328 894,324 902,319 910,314 918,310 926,305 934,301 942,296 950,291 958,287 966,283 974,279 982,278 990,281 998,285 1006,289 1014,294 1022,298 1030,303 1038,308 1046,312 1054,317 1062,321 1070,326 1078,331 1086,335 1086,340 1078,335 1070,331 1062,326 1054,322 1046,317 1038,312 1030,308 1022,303 1014,299 1006,294 998,290 990,286 982,283 974,284 966,288 958,292 950,296 942,301 934,305 926,310 918,315 910,319 902,324 894,328 886,333 878,338 870,342"/><polygon points="870,347 878,342 886,338 894,333 902,329 910,324 918,319 926,315 934,310 942,306 950,301 958,297 966,293 974,289 982,288 990,291 998,295 1006,299 1014,304 1022,308 1030,313 1038,317 1046,322 1054,326 1062,331 1070,336 1078,340 1086,345 1086,349 1078,345 1070,340 1062,336 1054,331 1046,327 1038,322 1030,317 1022,313 1014,308 1006,304 998,300 990,296 982,293 974,294 966,298 958,302 950,306 942,311 934,315 926,320 918,324 910,329 902,333 894,338 886,343 878,347 870,352"/><polygon points="870,356 878,352 886,347 894,343 902,338 910,334 918,329 926,325 934,320 942,316 950,311 958,307 966,303 974,299 982,298 990,301 998,305 1006,309 1014,313 1022,318 1030,322 1038,327 1046,331 1054,336 1062,340 1070,345 1078,350 1086,354 1086,359 1078,354 1070,350 1062,345 1054,341 1046,336 1038,332 1030,327 1022,323 1014,318 1006,314 998,310 990,306 982,303 974,304 966,308 958,312 950,316 942,320 934,325 926,329 918,334 910,338 902,343 894,347 886,352 878,356 870,361"/><polygon points="870,366 878,361 886,357 894,352 902,348 910,343 918,339 926,334 934,330 942,325 950,321 958,317 966,313 974,309 982,308 990,311 998,315 1006,319 1014,323 1022,328 1030,332 1038,336 1046,341 1054,345 1062,350 1070,354 1078,359 1086,363 1086,368 1078,364 1070,359 1062,355 1054,350 1046,346 1038,341 1030,337 1022,332 1014,328 1006,324 998,320 990,316 982,313 974,314 966,318 958,322 950,326 942,330 934,335 926,339 918,344 910,348 902,352 894,357 886,361 878,366 870,370"/><polygon points="870,375 878,370 886,366 894,362 902,357 910,353 918,348 926,344 934,340 942,335 950,331 958,327 966,323 974,319 982,318 990,321 998,325 1006,329 1014,333 1022,337 1030,342 1038,346 1046,351 1054,355 1062,359 1070,364 1078,368 1086,373 1086,377 1078,373 1070,369 1062,364 1054,360 1046,355 1038,351 1030,347 1022,342 1014,338 1006,334 998,329 990,326 982,323 974,324 966,327 958,332 950,336 942,340 934,344 926,349 918,353 910,358 902,362 894,366 886,371 878,375 870,380"/><polygon points="870,384 878,380 886,375 894,371 902,367 910,362 918,358 926,354 934,349 942,345 950,341 958,336 966,332 974,329 982,328 990,331 998,334 1006,339 1014,343 1022,347 1030,351 1038,356 1046,360 1054,365 1062,369 1070,373 1078,378 1086,382 1086,387 1078,382 1070,378 1062,374 1054,369 1046,365 1038,361 1030,356 1022,352 1014,348 1006,343 998,339 990,336 982,333 974,334 966,337 958,341 950,346 942,350 934,354 926,358 918,363 910,367 902,371 894,376 886,380 878,385 870,389"/><polygon points="870,394 878,389 886,385 894,381 902,376 910,372 918,368 926,363 934,359 942,355 950,351 958,346 966,342 974,339 982,338 990,341 998,344 1006,348 1014,353 1022,357 1030,361 1038,365 1046,370 1054,374 1062,378 1070,383 1078,387 1086,391 1086,396 1078,392 1070,387 1062,383 1054,379 1046,375 1038,370 1030,366 1022,362 1014,358 1006,353 998,349 990,346 982,343 974,344 966,347 958,351 950,355 942,360 934,364 926,368 918,372 910,377 902,381 894,385 886,390 878,394 870,398"/><polygon points="870,403 878,399 886,394 894,390 902,386 910,381 918,377 926,373 934,369 942,365 950,360 958,356 966,352 974,349 982,348 990,351 998,354 1006,358 1014,362 1022,367 1030,371 1038,375 1046,379 1054,384 1062,388 1070,392 1078,396 1086,401 1086,405 1078,401 1070,397 1062,393 1054,388 1046,384 1038,380 1030,376 1022,372 1014,367 1006,363 998,359 990,356 982,353 974,354 966,357 958,361 950,365 942,369 934,374 926,378 918,382 910,386 902,391 894,395 886,399 878,403 870,407"/><polygon points="870,412 878,408 886,404 894,399 902,395 910,391 918,387 926,383 934,378 942,374 950,370 958,366 966,362 974,359 982,358 990,361 998,364 1006,368 1014,372 1022,376 1030,381 1038,385 1046,389 1054,393 1062,397 1070,402 1078,406 1086,410 1086,415 1078,411 1070,406 1062,402 1054,398 1046,394 1038,390 1030,385 1022,381 1014,377 1006,373 998,369 990,366 982,363 974,364 966,367 958,371 950,375 942,379 934,383 926,388 918,392 910,396 902,400 894,404 886,408 878,413 870,417"/><polygon points="870,421 878,417 886,413 894,409 902,405 910,401 918,396 926,392 934,388 942,384 950,380 958,376 966,372 974,369 982,368 990,371 998,374 1006,378 1014,382 1022,386 1030,390 1038,394 1046,399 1054,403 1062,407 1070,411 1078,415 1086,419 1086,424 1078,420 1070,416 1062,412 1054,407 1046,403 1038,399 1030,395 1022,391 1014,387 1006,383 998,379 990,375 982,373 974,374 966,377 958,381 950,385 942,389 934,393 926,397 918,401 910,405 902,410 894,414 886,418 878,422 870,426"/><polygon points="870,431 878,427 886,423 894,418 902,414 910,410 918,406 926,402 934,398 942,394 950,390 958,386 966,382 974,379 982,378 990,380 998,384 1006,388 1014,392 1022,396 1030,400 1038,404 1046,408 1054,412 1062,416 1070,420 1078,425 1086,429 1086,433 1078,429 1070,425 1062,421 1054,417 1046,413 1038,409 1030,405 1022,401 1014,397 1006,393 998,389 990,385 982,383 974,384 966,387 958,391 950,395 942,399 934,403 926,407 918,411 910,415 902,419 894,423 886,427 878,431 870,435"/><polygon points="870,440 878,436 886,432 894,428 902,424 910,420 918,416 926,412 934,408 942,404 950,400 958,396 966,392 974,389 982,388 990,390 998,394 1006,398 1014,402 1022,406 1030,410 1038,414 1046,418 1054,422 1062,426 1070,430 1078,434 1086,438 1086,443 1078,439 1070,435 1062,431 1054,427 1046,423 1038,419 1030,415 1022,411 1014,407 1006,403 998,399 990,395 982,393 974,394 966,397 958,401 950,405 942,409 934,413 926,417 918,421 910,425 902,429 894,433 886,437 878,441 870,445"/><polygon points="870,449 878,445 886,441 894,437 902,433 910,429 918,425 926,421 934,417 942,413 950,410 958,406 966,402 974,399 982,398 990,400 998,404 1006,408 1014,412 1022,415 1030,419 1038,423 1046,427 1054,431 1062,435 1070,439 1078,443 1086,447 1086,452 1078,448 1070,444 1062,440 1054,436 1046,432 1038,428 1030,424 1022,420 1014,416 1006,413 998,409 990,405 982,403 974,404 966,407 958,411 950,414 942,418 934,422 926,426 918,430 910,434 902,438 894,442 886,446 878,450 870,454"/><polygon points="870,459 878,455 886,451 894,447 902,443 910,439 918,435 926,431 934,427 942,423 950,419 958,416 966,412 974,409 982,408 990,410 998,414 1006,418 1014,421 1022,425 1030,429 1038,433 1046,437 1054,441 1062,445 1070,449 1078,453 1086,457 1086,461 1078,457 1070,454 1062,450 1054,446 1046,442 1038,438 1030,434 1022,430 1014,426 1006,422 998,419 990,415 982,413 974,414 966,417 958,421 950,424 942,428 934,432 926,436 918,440 910,444 902,448 894,452 886,455 878,459 870,463"/><polygon points="870,468 878,464 886,460 894,456 902,452 910,449 918,445 926,441 934,437 942,433 950,429 958,426 966,422 974,419 982,418 990,420 998,424 1006,427 1014,431 1022,435 1030,439 1038,443 1046,447 1054,450 1062,454 1070,458 1078,462 1086,466 1086,471 1078,467 1070,463 1062,459 1054,455 1046,451 1038,448 1030,444 1022,440 1014,436 1006,432 998,429 990,425 982,423 974,424 966,427 958,430 950,434 942,438 934,442 926,446 918,449 910,453 902,457 894,461 886,465 878,469 870,473"/><polygon points="870,477 878,473 886,470 894,466 902,462 910,458 918,454 926,450 934,447 942,443 950,439 958,435 966,432 974,429 982,428 990,430 998,434 1006,437 1014,441 1022,445 1030,449 1038,452 1046,456 1054,460 1062,464 1070,468 1078,472 1086,475 1086,480 1078,476 1070,472 1062,469 1054,465 1046,461 1038,457 1030,453 1022,450 1014,446 1006,442 998,439 990,435 982,433 974,434 966,437 958,440 950,444 942,448 934,452 926,455 918,459 910,463 902,467 894,470 886,474 878,478 870,482"/><polygon points="870,487 878,483 886,479 894,475 902,471 910,468 918,464 926,460 934,456 942,453 950,449 958,445 966,442 974,439 982,438 990,440 998,444 1006,447 1014,451 1022,455 1030,458 1038,462 1046,466 1054,470 1062,473 1070,477 1078,481 1086,485 1086,489 1078,486 1070,482 1062,478 1054,474 1046,471 1038,467 1030,463 1022,459 1014,456 1006,452 998,449 990,445 982,443 974,444 966,447 958,450 950,454 942,458 934,461 926,465 918,469 910,472 902,476 894,480 886,484 878,487 870,491"/><polygon points="870,496 878,492 886,488 894,485 902,481 910,477 918,474 926,470 934,466 942,462 950,459 958,455 966,452 974,449 982,448 990,450 998,453 1006,457 1014,461 1022,464 1030,468 1038,472 1046,475 1054,479 1062,483 1070,487 1078,490 1086,494 1086,499 1078,495 1070,491 1062,488 1054,484 1046,480 1038,476 1030,473 1022,469 1014,466 1006,462 998,458 990,455 982,453 974,454 966,457 958,460 950,464 942,467 934,471 926,475 918,478 910,482 902,486 894,489 886,493 878,497 870,501"/><polygon points="870,505 878,502 886,498 894,494 902,490 910,487 918,483 926,479 934,476 942,472 950,469 958,465 966,462 974,459 982,458 990,460 998,463 1006,467 1014,470 1022,474 1030,478 1038,481 1046,485 1054,489 1062,492 1070,496 1078,500 1086,503 1086,508 1078,504 1070,501 1062,497 1054,493 1046,490 1038,486 1030,483 1022,479 1014,475 1006,472 998,468 990,465 982,463 974,464 966,467 958,470 950,474 942,477 934,481 926,484 918,488 910,492 902,495 894,499 886,503 878,506 870,510"/><polygon points="870,514 878,511 886,507 894,504 902,500 910,496 918,493 926,489 934,486 942,482 950,478 958,475 966,472 974,469 982,468 990,470 998,473 1006,477 1014,480 1022,484 1030,487 1038,491 1046,495 1054,498 1062,502 1070,505 1078,509 1086,513 1086,517 1078,514 1070,510 1062,507 1054,503 1046,499 1038,496 1030,492 1022,489 1014,485 1006,482 998,478 990,475 982,473 974,474 966,477 958,480 950,483 942,487 934,490 926,494 918,498 910,501 902,505 894,508 886,512 878,516 870,519"/><polygon points="870,524 878,520 886,517 894,513 902,510 910,506 918,502 926,499 934,495 942,492 950,488 958,485 966,482 974,479 982,478 990,480 998,483 1006,487 1014,490 1022,494 1030,497 1038,501 1046,504 1054,508 1062,511 1070,515 1078,518 1086,522 1086,527 1078,523 1070,520 1062,516 1054,513 1046,509 1038,505 1030,502 1022,498 1014,495 1006,492 998,488 990,485 982,483 974,484 966,487 958,490 950,493 942,497 934,500 926,504 918,507 910,511 902,514 894,518 886,521 878,525 870,528"/><polygon points="870,533 878,530 886,526 894,523 902,519 910,516 918,512 926,509 934,505 942,502 950,498 958,495 966,492 974,489 982,488 990,490 998,493 1006,496 1014,500 1022,503 1030,507 1038,510 1046,514 1054,517 1062,521 1070,524 1078,528 1086,531 1086,536 1078,533 1070,529 1062,526 1054,522 1046,519 1038,515 1030,512 1022,508 1014,505 1006,501 998,498 990,495 982,493 974,494 966,497 958,500 950,503 942,506 934,510 926,513 918,517 910,520 902,524 894,527 886,531 878,534 870,538"/><polygon points="870,542 878,539 886,535 894,532 902,529 910,525 918,522 926,518 934,515 942,511 950,508 958,505 966,502 974,499 982,498 990,500 998,503 1006,506 1014,510 1022,513 1030,517 1038,520 1046,523 1054,527 1062,530 1070,534 1078,537 1086,541 1086,545 1078,542 1070,538 1062,535 1054,532 1046,528 1038,525 1030,521 1022,518 1014,515 1006,511 998,508 990,505 982,503 974,504 966,506 958,510 950,513 942,516 934,520 926,523 918,526 910,530 902,533 894,537 886,540 878,544 870,547"/><polygon points="870,552 878,548 886,545 894,541 902,538 910,535 918,531 926,528 934,525 942,521 950,518 958,515 966,511 974,509 982,508 990,510 998,513 1006,516 1014,520 1022,523 1030,526 1038,530 1046,533 1054,536 1062,540 1070,543 1078,547 1086,550 1086,555 1078,551 1070,548 1062,545 1054,541 1046,538 1038,534 1030,531 1022,528 1014,524 1006,521 998,518 990,515 982,513 974,514 966,516 958,520 950,523 942,526 934,529 926,533 918,536 910,539 902,543 894,546 886,550 878,553 870,556"/><polygon points="870,561 878,558 886,554 894,551 902,548 910,544 918,541 926,538 934,534 942,531 950,528 958,524 966,521 974,519 982,518 990,520 998,523 1006,526 1014,529 1022,533 1030,536 1038,539 1046,543 1054,546 1062,549 1070,553 1078,556 1086,559 1086,564 1078,561 1070,557 1062,554 1054,551 1046,547 1038,544 1030,541 1022,537 1014,534 1006,531 998,528 990,525 982,523 974,524 966,526 958,529 950,533 942,536 934,539 926,542 918,546 910,549 902,552 894,556 886,559 878,562 870,566"/><polygon points="870,570 878,567 886,564 894,560 902,557 910,554 918,551 926,547 934,544 942,541 950,538 958,534 966,531 974,529 982,528 990,530 998,533 1006,536 1014,539 1022,542 1030,546 1038,549 1046,552 1054,555 1062,559 1070,562 1078,565 1086,569 1086,573 1078,570 1070,567 1062,564 1054,560 1046,557 1038,554 1030,550 1022,547 1014,544 1006,541 998,538 990,535 982,533 974,534 966,536 958,539 950,542 942,546 934,549 926,552 918,555 910,559 902,562 894,565 886,568 878,572 870,575"/><polygon points="870,580 878,576 886,573 894,570 902,567 910,563 918,560 926,557 934,554 942,551 950,547 958,544 966,541 974,539 982,538 990,540 998,543 1006,546 1014,549 1022,552 1030,555 1038,559 1046,562 1054,565 1062,568 1070,572 1078,575 1086,578 1086,583 1078,579 1070,576 1062,573 1054,570 1046,567 1038,563 1030,560 1022,557 1014,554 1006,551 998,548 990,545 982,543 974,544 966,546 958,549 950,552 942,555 934,559 926,562 918,565 910,568 902,571 894,575 886,578 878,581 870,584"/></g><rect x="870.0" y="0" width="3.21" height="520" fill="#808080" fill-opacity="0.38"/><rect x="876.4" y="0" width="3.21" height="520" fill="#808080" fill-opacity="0.30"/><rect x="879.6" y="0" width="3.21" height="520" fill="#808080" fill-opacity="0.45"/><rect x="886.0" y="0" width="3.21" height="520" fill="#808080" fill-opacity="0.28"/><rect x="898.9" y="0" width="3.21" height="520" fill="#808080" fill-opacity="0.27"/><rect x="905.3" y="0" width="3.21" height="520" fill="#808080" fill-opacity="0.20"/><rect x="908.5" y="0" width="3.21" height="520" fill="#808080" fill-opacity="0.05"/><rect x="914.9" y="0" width="3.21" height="520" fill="#808080" fill-opacity="0.08"/><rect x="918.1" y="0" width="3.21" height="520" fill="#808080" fill-opacity="0.06"/><rect x="921.3" y="0" width="3.21" height="520" fill="#808080" fill-opacity="0.09"/><rect x="924.5" y="0" width="3.21" height="520" fill="#808080" fill-opacity="0.38"/><rect x="927.7" y="0" width="3.21" height="520" fill="#808080" fill-opacity="0.42"/><rect x="934.2" y="0" width="3.21" height="520" fill="#808080" fill-opacity="0.49"/><rect x="937.4" y="0" width="3.21" height="520" fill="#808080" fill-opacity="0.17"/><rect x="940.6" y="0" width="3.21" height="520" fill="#808080" fill-opacity="0.46"/><rect x="943.8" y="0" width="3.21" height="520" fill="#808080" fill-opacity="0.32"/><rect x="947.0" y="0" width="3.21" height="520" fill="#808080" fill-opacity="0.12"/><rect x="953.4" y="0" width="3.21" height="520" fill="#808080" fill-opacity="0.43"/><rect x="956.6" y="0" width="3.21" height="520" fill="#808080" fill-opacity="0.50"/><rect x="959.8" y="0" width="3.21" height="520" fill="#808080" fill-opacity="0.18"/><rect x="966.2" y="0" width="3.21" height="520" fill="#808080" fill-opacity="0.33"/><rect x="969.4" y="0" width="3.21" height="520" fill="#808080" fill-opacity="0.28"/><rect x="972.7" y="0" width="3.21" height="520" fill="#808080" fill-opacity="0.38"/><rect x="975.9" y="0" width="3.21" height="520" fill="#808080" fill-opacity="0.47"/><rect x="979.1" y="0" width="3.21" height="520" fill="#808080" fill-opacity="0.47"/><rect x="982.3" y="0" width="3.21" height="520" fill="#808080" fill-opacity="0.25"/><rect x="985.5" y="0" width="3.21" height="520" fill="#808080" fill-opacity="0.06"/><rect x="988.7" y="0" width="3.21" height="520" fill="#808080" fill-opacity="0.12"/><rect x="991.9" y="0" width="3.21" height="520" fill="#808080" fill-opacity="0.11"/><rect x="995.1" y="0" width="3.21" height="520" fill="#808080" fill-opacity="0.27"/><rect x="998.3" y="0" width="3.21" height="520" fill="#808080" fill-opacity="0.18"/><rect x="1001.5" y="0" width="3.21" height="520" fill="#808080" fill-opacity="0.33"/><rect x="1004.7" y="0" width="3.21" height="520" fill="#808080" fill-opacity="0.12"/><rect x="1007.9" y="0" width="3.21" height="520" fill="#808080" fill-opacity="0.16"/><rect x="1011.2" y="0" width="3.21" height="520" fill="#808080" fill-opacity="0.46"/><rect x="1014.4" y="0" width="3.21" height="520" fill="#808080" fill-opacity="0.30"/><rect x="1017.6" y="0" width="3.21" height="520" fill="#808080" fill-opacity="0.43"/><rect x="1020.8" y="0" width="3.21" height="520" fill="#808080" fill-opacity="0.23"/><rect x="1027.2" y="0" width="3.21" height="520" fill="#808080" fill-opacity="0.07"/><rect x="1043.2" y="0" width="3.21" height="520" fill="#808080" fill-opacity="0.10"/><rect x="1046.4" y="0" width="3.21" height="520" fill="#808080" fill-opacity="0.29"/><rect x="1049.6" y="0" width="3.21" height="520" fill="#808080" fill-opacity="0.37"/><rect x="1052.9" y="0" width="3.21" height="520" fill="#808080" fill-opacity="0.47"/><rect x="1056.1" y="0" width="3.21" height="520" fill="#808080" fill-opacity="0.15"/><rect x="1068.9" y="0" width="3.21" height="520" fill="#808080" fill-opacity="0.37"/><rect x="1075.3" y="0" width="3.21" height="520" fill="#808080" fill-opacity="0.25"/><rect x="1078.5" y="0" width="3.21" height="520" fill="#808080" fill-opacity="0.09"/><rect x="1081.7" y="0" width="3.21" height="520" fill="#808080" fill-opacity="0.15"/><rect x="870" y="0" width="214" height="520" fill="url(#hf5)"/><rect x="870" y="0" width="214" height="520" fill="url(#fade)" mask="url(#m5)"/></g></svg><svg style="position:absolute;left:128px;top:143px;" width="1064" height="1125" viewBox="0 0 1064 1125"><line x1="68.3" y1="0" x2="68.3" y2="1125" stroke="#3c3c3c" stroke-width="1" stroke-dasharray="1.5 2"/><line x1="196.6" y1="0" x2="196.6" y2="1125" stroke="#3c3c3c" stroke-width="1" stroke-dasharray="1.5 2"/><line x1="324.9" y1="0" x2="324.9" y2="1125" stroke="#3c3c3c" stroke-width="1" stroke-dasharray="1.5 2"/><line x1="453.2" y1="0" x2="453.2" y2="1125" stroke="#3c3c3c" stroke-width="1" stroke-dasharray="1.5 2"/><line x1="581.5" y1="0" x2="581.5" y2="1125" stroke="#3c3c3c" stroke-width="1" stroke-dasharray="1.5 2"/><line x1="709.8" y1="0" x2="709.8" y2="1125" stroke="#3c3c3c" stroke-width="1" stroke-dasharray="1.5 2"/><line x1="838.1" y1="0" x2="838.1" y2="1125" stroke="#3c3c3c" stroke-width="1" stroke-dasharray="1.5 2"/><line x1="966.4" y1="0" x2="966.4" y2="1125" stroke="#3c3c3c" stroke-width="1" stroke-dasharray="1.5 2"/><line x1="0" y1="0.5" x2="1064" y2="0.5" stroke="#3c3c3c" stroke-width="1" stroke-dasharray="1.5 2"/><line x1="0" y1="137.7" x2="1064" y2="137.7" stroke="#3c3c3c" stroke-width="1" stroke-dasharray="1.5 2"/><line x1="0" y1="274.9" x2="1064" y2="274.9" stroke="#3c3c3c" stroke-width="1" stroke-dasharray="1.5 2"/><line x1="0" y1="412.1" x2="1064" y2="412.1" stroke="#3c3c3c" stroke-width="1" stroke-dasharray="1.5 2"/><line x1="0" y1="549.3" x2="1064" y2="549.3" stroke="#3c3c3c" stroke-width="1" stroke-dasharray="1.5 2"/><line x1="0" y1="686.5" x2="1064" y2="686.5" stroke="#3c3c3c" stroke-width="1" stroke-dasharray="1.5 2"/><line x1="0" y1="823.7" x2="1064" y2="823.7" stroke="#3c3c3c" stroke-width="1" stroke-dasharray="1.5 2"/><line x1="0" y1="960.9" x2="1064" y2="960.9" stroke="#3c3c3c" stroke-width="1" stroke-dasharray="1.5 2"/><line x1="0" y1="1098.1" x2="1064" y2="1098.1" stroke="#3c3c3c" stroke-width="1" stroke-dasharray="1.5 2"/><line x1="0" y1="1124.5" x2="1064" y2="1124.5" stroke="#3c3c3c" stroke-width="1" stroke-dasharray="1.5 2"/></svg><svg style="position:absolute;left:128px;top:143px;" width="1064" height="1125" viewBox="0 0 1064 1125"><rect x="168.5" y="159.0" width="5" height="5" fill="#000"/><rect x="168.5" y="164.0" width="5" height="5" fill="#fff"/><rect x="168.5" y="169.0" width="5" height="5" fill="#000"/><rect x="168.5" y="174.0" width="5" height="5" fill="#fff"/><rect x="168.5" y="179.0" width="5" height="5" fill="#000"/><rect x="168.5" y="184.0" width="5" height="5" fill="#fff"/><rect x="168.5" y="189.0" width="5" height="5" fill="#000"/><rect x="168.5" y="194.0" width="5" height="5" fill="#fff"/><rect x="168.5" y="199.0" width="5" height="5" fill="#000"/><rect x="168.5" y="204.0" width="5" height="5" fill="#fff"/><rect x="168.5" y="209.0" width="5" height="5" fill="#000"/><rect x="168.5" y="214.0" width="5" height="5" fill="#fff"/><rect x="168.5" y="219.0" width="5" height="5" fill="#000"/><rect x="168.5" y="224.0" width="5" height="5" fill="#fff"/><rect x="168.5" y="229.0" width="5" height="5" fill="#000"/><rect x="168.5" y="234.0" width="5" height="5" fill="#fff"/><rect x="168.5" y="239.0" width="5" height="5" fill="#000"/><rect x="168.5" y="244.0" width="5" height="5" fill="#fff"/><rect x="168.5" y="249.0" width="5" height="5" fill="#000"/><rect x="168.5" y="254.0" width="5" height="5" fill="#fff"/><rect x="168.5" y="259.0" width="5" height="5" fill="#000"/><rect x="168.5" y="264.0" width="5" height="5" fill="#fff"/><rect x="168.5" y="269.0" width="5" height="5" fill="#000"/><rect x="168.5" y="274.0" width="5" height="5" fill="#fff"/><rect x="168.5" y="279.0" width="5" height="5" fill="#000"/><rect x="168.5" y="284.0" width="5" height="5" fill="#fff"/><rect x="168.5" y="289.0" width="5" height="5" fill="#000"/><rect x="168.5" y="294.0" width="5" height="5" fill="#fff"/><rect x="168.5" y="299.0" width="5" height="5" fill="#000"/><rect x="168.5" y="304.0" width="5" height="5" fill="#fff"/><rect x="168.5" y="309.0" width="5" height="5" fill="#000"/><rect x="168.5" y="314.0" width="5" height="5" fill="#fff"/><rect x="168.5" y="319.0" width="5" height="5" fill="#000"/><rect x="168.5" y="324.0" width="5" height="5" fill="#fff"/><rect x="168.5" y="329.0" width="5" height="5" fill="#000"/><rect x="168.5" y="334.0" width="5" height="5" fill="#fff"/><rect x="168.5" y="339.0" width="5" height="5" fill="#000"/><rect x="168.5" y="344.0" width="5" height="5" fill="#fff"/><rect x="168.5" y="349.0" width="5" height="5" fill="#000"/><rect x="168.5" y="354.0" width="5" height="5" fill="#fff"/><rect x="168.5" y="359.0" width="5" height="5" fill="#000"/><rect x="168.5" y="364.0" width="5" height="5" fill="#fff"/><rect x="168.5" y="369.0" width="5" height="5" fill="#000"/><rect x="168.5" y="374.0" width="5" height="5" fill="#fff"/><rect x="168.5" y="379.0" width="5" height="5" fill="#000"/><rect x="168.5" y="384.0" width="5" height="5" fill="#fff"/><rect x="168.5" y="389.0" width="5" height="5" fill="#000"/><rect x="168.5" y="394.0" width="5" height="5" fill="#fff"/><rect x="168.5" y="399.0" width="5" height="5" fill="#000"/><rect x="168.5" y="404.0" width="5" height="5" fill="#fff"/><rect x="168.5" y="409.0" width="5" height="5" fill="#000"/><rect x="168.5" y="414.0" width="5" height="5" fill="#fff"/><rect x="168.5" y="419.0" width="5" height="5" fill="#000"/><rect x="168.5" y="424.0" width="5" height="5" fill="#fff"/><rect x="403.5" y="287.0" width="5" height="5" fill="#000"/><rect x="403.5" y="292.0" width="5" height="5" fill="#fff"/><rect x="403.5" y="297.0" width="5" height="5" fill="#000"/><rect x="403.5" y="302.0" width="5" height="5" fill="#fff"/><rect x="403.5" y="307.0" width="5" height="5" fill="#000"/><rect x="403.5" y="312.0" width="5" height="5" fill="#fff"/><rect x="403.5" y="317.0" width="5" height="5" fill="#000"/><rect x="403.5" y="322.0" width="5" height="5" fill="#fff"/><rect x="403.5" y="327.0" width="5" height="5" fill="#000"/><rect x="403.5" y="332.0" width="5" height="5" fill="#fff"/><rect x="403.5" y="337.0" width="5" height="5" fill="#000"/><rect x="403.5" y="342.0" width="5" height="5" fill="#fff"/><rect x="403.5" y="347.0" width="5" height="5" fill="#000"/><rect x="403.5" y="352.0" width="5" height="5" fill="#fff"/><rect x="403.5" y="357.0" width="5" height="5" fill="#000"/><rect x="403.5" y="362.0" width="5" height="5" fill="#fff"/><rect x="403.5" y="367.0" width="5" height="5" fill="#000"/><rect x="403.5" y="372.0" width="5" height="5" fill="#fff"/><rect x="403.5" y="377.0" width="5" height="5" fill="#000"/><rect x="403.5" y="382.0" width="5" height="5" fill="#fff"/><rect x="403.5" y="387.0" width="5" height="5" fill="#000"/><rect x="403.5" y="392.0" width="5" height="5" fill="#fff"/><rect x="440.5" y="297.0" width="5" height="5" fill="#000"/><rect x="440.5" y="302.0" width="5" height="5" fill="#fff"/><rect x="440.5" y="307.0" width="5" height="5" fill="#000"/><rect x="440.5" y="312.0" width="5" height="5" fill="#fff"/><rect x="440.5" y="317.0" width="5" height="5" fill="#000"/><rect x="440.5" y="322.0" width="5" height="5" fill="#fff"/><rect x="440.5" y="327.0" width="5" height="5" fill="#000"/><rect x="440.5" y="332.0" width="5" height="5" fill="#fff"/><rect x="440.5" y="337.0" width="5" height="5" fill="#000"/><rect x="440.5" y="342.0" width="5" height="5" fill="#fff"/><rect x="440.5" y="347.0" width="5" height="5" fill="#000"/><rect x="440.5" y="352.0" width="5" height="5" fill="#fff"/><rect x="440.5" y="357.0" width="5" height="5" fill="#000"/><rect x="440.5" y="362.0" width="5" height="5" fill="#fff"/><rect x="440.5" y="367.0" width="5" height="5" fill="#000"/><rect x="440.5" y="372.0" width="5" height="5" fill="#fff"/><rect x="440.5" y="377.0" width="5" height="5" fill="#000"/><rect x="440.5" y="382.0" width="5" height="5" fill="#fff"/><rect x="440.5" y="387.0" width="5" height="5" fill="#000"/><rect x="440.5" y="392.0" width="5" height="5" fill="#fff"/><rect x="632.5" y="307.0" width="5" height="5" fill="#000"/><rect x="632.5" y="312.0" width="5" height="5" fill="#fff"/><rect x="632.5" y="317.0" width="5" height="5" fill="#000"/><rect x="632.5" y="322.0" width="5" height="5" fill="#fff"/><rect x="632.5" y="327.0" width="5" height="5" fill="#000"/><rect x="632.5" y="332.0" width="5" height="5" fill="#fff"/><rect x="632.5" y="337.0" width="5" height="5" fill="#000"/><rect x="632.5" y="342.0" width="5" height="5" fill="#fff"/><rect x="632.5" y="347.0" width="5" height="5" fill="#000"/><rect x="632.5" y="352.0" width="5" height="5" fill="#fff"/><rect x="632.5" y="357.0" width="5" height="5" fill="#000"/><rect x="632.5" y="362.0" width="5" height="5" fill="#fff"/><rect x="632.5" y="367.0" width="5" height="5" fill="#000"/><rect x="632.5" y="372.0" width="5" height="5" fill="#fff"/><rect x="632.5" y="377.0" width="5" height="5" fill="#000"/><rect x="632.5" y="382.0" width="5" height="5" fill="#fff"/><rect x="632.5" y="387.0" width="5" height="5" fill="#000"/><rect x="632.5" y="392.0" width="5" height="5" fill="#fff"/><rect x="796.5" y="327.0" width="5" height="5" fill="#000"/><rect x="796.5" y="332.0" width="5" height="5" fill="#fff"/><rect x="796.5" y="337.0" width="5" height="5" fill="#000"/><rect x="796.5" y="342.0" width="5" height="5" fill="#fff"/><rect x="796.5" y="347.0" width="5" height="5" fill="#000"/><rect x="796.5" y="352.0" width="5" height="5" fill="#fff"/><rect x="796.5" y="357.0" width="5" height="5" fill="#000"/><rect x="796.5" y="362.0" width="5" height="5" fill="#fff"/><rect x="796.5" y="367.0" width="5" height="5" fill="#000"/><rect x="796.5" y="372.0" width="5" height="5" fill="#fff"/><rect x="796.5" y="377.0" width="5" height="5" fill="#000"/><rect x="796.5" y="382.0" width="5" height="5" fill="#fff"/><rect x="962.5" y="297.0" width="5" height="5" fill="#000"/><rect x="962.5" y="302.0" width="5" height="5" fill="#fff"/><rect x="962.5" y="307.0" width="5" height="5" fill="#000"/><rect x="962.5" y="312.0" width="5" height="5" fill="#fff"/><rect x="962.5" y="317.0" width="5" height="5" fill="#000"/><rect x="962.5" y="322.0" width="5" height="5" fill="#fff"/><rect x="962.5" y="327.0" width="5" height="5" fill="#000"/><rect x="962.5" y="332.0" width="5" height="5" fill="#fff"/><rect x="962.5" y="337.0" width="5" height="5" fill="#000"/><rect x="962.5" y="342.0" width="5" height="5" fill="#fff"/><rect x="962.5" y="347.0" width="5" height="5" fill="#000"/><rect x="962.5" y="352.0" width="5" height="5" fill="#fff"/><rect x="962.5" y="357.0" width="5" height="5" fill="#000"/><rect x="962.5" y="362.0" width="5" height="5" fill="#fff"/><rect x="962.5" y="367.0" width="5" height="5" fill="#000"/><rect x="962.5" y="372.0" width="5" height="5" fill="#fff"/></svg><div style="position:absolute;left:1192px;top:143px;width:3px;height:1128px;background:#fbfbfb"></div><div style="position:absolute;left:1195px;top:143px;width:22px;height:1125px;background:linear-gradient(90deg,#ffffff,#f0f0f0)"></div><div style="position:absolute;left:1195px;top:1245px;width:22px;height:1px;background:#d4d4d4"></div><svg style="position:absolute;left:1199px;top:1254px;" width="13" height="7" viewBox="0 0 13 7"><path d="M0 0 L13 0 L6.5 7 Z" fill="#555"/></svg><div style="position:absolute;left:128px;top:1268px;width:1064px;height:3px;background:#fbfbfb"></div><div style="position:absolute;left:128px;top:1271px;width:1064px;height:22px;background:#e6e6e6"></div><div style="position:absolute;left:128px;top:1271px;width:21px;height:22px;background:linear-gradient(#fdfdfd,#f2f2f2)"></div><div style="position:absolute;left:149px;top:1271px;width:1px;height:22px;background:#d0d0d0"></div><div style="position:absolute;left:440px;top:1271px;width:372px;height:22px;background:linear-gradient(#ffffff,#f2f2f2)"></div><div style="position:absolute;left:440px;top:1271px;width:1px;height:22px;background:#d0d0d0"></div><div style="position:absolute;left:1169px;top:1271px;width:23px;height:22px;background:linear-gradient(#fdfdfd,#f2f2f2)"></div><div style="position:absolute;left:1169px;top:1271px;width:1px;height:22px;background:#d0d0d0"></div><svg style="position:absolute;left:1177px;top:1277px;" width="7" height="12" viewBox="0 0 7 12"><path d="M0 0 L7 6 L0 12 Z" fill="#555"/></svg><svg style="position:absolute;left:137px;top:1277px;" width="7" height="12" viewBox="0 0 7 12"><path d="M7 0 L0 6 L7 12 Z" fill="#555"/></svg><div style="position:absolute;left:508px;top:1320px;width:731px;height:1px;background:#a8a8a8"></div><div style="position:absolute;left:23px;top:1320px;width:86px;height:39px;background:#e7e7e7;border:1px solid #a5a5a5;border-top-width:2px;border-radius:0 0 5px 5px;box-sizing:border-box"></div><div style="position:absolute;top:1331.98px;font-size:20.1px;line-height:20.1px;white-space:nowrap;color:#000;left:43.4px;">Input</div><div style="position:absolute;left:109px;top:1319px;width:400px;height:44px;background:linear-gradient(#e5f3fd,#f3f9fe);border:1px solid #a5a5a5;border-top:none;border-radius:0 0 5px 5px;box-sizing:border-box"></div><div style="position:absolute;top:1333.07px;font-size:20px;line-height:20px;white-space:nowrap;color:#000;left:129.2px;transform:scaleX(1.0174);transform-origin:left 0;">Output - Output gather [ Mute - DOWN ]</div><div style="position:absolute;top:32.02px;font-size:20.05px;line-height:20.05px;white-space:nowrap;color:#000;font-weight:700;left:1282px;">Module Manager</div><div style="position:absolute;left:1276px;top:62px;width:625px;height:34px;background:linear-gradient(#fdfdfd,#ebebeb);border:1px solid #c4c4c4;border-bottom:none;box-sizing:border-box"></div><div style="position:absolute;left:1277px;top:94px;width:624px;height:2px;background:#a9a9a9"></div><div style="position:absolute;left:1276px;top:96px;width:625px;height:831px;background:#fff;border:1px solid #c4c4c4;border-top:none;box-sizing:border-box"></div><div style="position:absolute;left:1912px;top:62px;width:168px;height:865px;background:#fff;border:1px solid #c4c4c4;box-sizing:border-box"></div><div style="position:absolute;top:67.97px;font-size:20px;line-height:20px;white-space:nowrap;color:#000;left:1919.3px;transform:scaleX(0.9662);transform-origin:left 0;">Clear all picking</div><div style="position:absolute;top:94.07px;font-size:20px;line-height:20px;white-space:nowrap;color:#000;left:1919.3px;transform:scaleX(0.9733);transform-origin:left 0;">Load picking</div><div style="position:absolute;top:120.17px;font-size:20px;line-height:20px;white-space:nowrap;color:#000;left:1919.3px;transform:scaleX(0.9524);transform-origin:left 0;">Save picking</div><div style="position:absolute;left:1377px;top:229.3px;width:523px;height:26px;background:#fffacd"></div><div style="position:absolute;left:1277px;top:255.3px;width:623px;height:25.4px;background:#efefef"></div><div style="position:absolute;left:1314px;top:102.8px;width:13.5px;height:13.5px;background:#e8681e"></div><div style="position:absolute;top:101.17px;font-size:20px;line-height:20px;white-space:nowrap;color:#000;left:1344.8px;transform:scaleX(0.926);transform-origin:left 0;">Flow</div><svg style="position:absolute;left:1333px;top:124.94999999999999px;" width="22" height="22" viewBox="0 0 22 22"><rect x="1" y="1" width="20" height="20" fill="#fff" stroke="#c3c3c3" stroke-width="2"/><defs><linearGradient id="pg" x1="0" y1="0" x2="0" y2="1"><stop offset="0" stop-color="#a8a8a8"/><stop offset="1" stop-color="#5e5e5e"/></linearGradient></defs><rect x="4" y="4" width="14" height="14" rx="1.5" fill="url(#pg)" stroke="#262626" stroke-width="2.2"/></svg><svg style="position:absolute;left:1370px;top:128.45px;" width="17" height="15" viewBox="0 0 17 15"><path d="M1.3 6.8 L6.2 13.2 L15.6 1.4" fill="none" stroke="#004596" stroke-width="3.3"/></svg><div style="position:absolute;top:127.62px;font-size:20px;line-height:20px;white-space:nowrap;color:#000;left:1402.5px;transform:scaleX(0.9303);transform-origin:left 0;">Read seismic traces</div><svg style="position:absolute;left:1309px;top:159.4px;" width="12" height="6" viewBox="0 0 12 6"><path d="M0 0 L12 0 L6 6 Z" fill="#5c5c5c"/></svg><svg style="position:absolute;left:1333px;top:151.4px;" width="22" height="22" viewBox="0 0 22 22"><rect x="1" y="1" width="20" height="20" fill="#fff" stroke="#c3c3c3" stroke-width="2"/><rect x="4" y="4" width="14" height="14" rx="1.5" fill="url(#pg)" stroke="#262626" stroke-width="2.2"/></svg><div style="position:absolute;left:1372px;top:155.70000000000002px;width:13.5px;height:13.5px;background:#e8681e"></div><div style="position:absolute;top:154.07px;font-size:20px;line-height:20px;white-space:nowrap;color:#000;left:1402.5px;transform:scaleX(0.926);transform-origin:left 0;">Flow</div><div style="position:absolute;top:154.07px;font-size:20px;line-height:20px;white-space:nowrap;color:#000;left:1593.5px;transform:scaleX(0.9195);transform-origin:left 0;">SCAC WINDOW DEFINITION</div><svg style="position:absolute;left:1462px;top:164.5px;" width="127.40000000000009" height="3" viewBox="0 0 127.40000000000009 3"><line x1="0" y1="1.2" x2="124.4" y2="1.2" stroke="#1e1e1e" stroke-width="1.6" stroke-dasharray="4.87 2.6"/></svg><svg style="position:absolute;left:1847.6px;top:164.5px;" width="31.40000000000009" height="3" viewBox="0 0 31.40000000000009 3"><line x1="0" y1="1.2" x2="28.4" y2="1.2" stroke="#1e1e1e" stroke-width="1.6" stroke-dasharray="5.15 2.6"/></svg><svg style="position:absolute;left:1449px;top:164.5px;" width="6" height="3" viewBox="0 0 6 3"><line x1="0" y1="1" x2="5.4" y2="1" stroke="#222" stroke-width="1.6"/></svg><div style="position:absolute;left:1878.0px;top:168.6px;width:2.4px;height:2.4px;background:#111"></div><div style="position:absolute;left:1883.2px;top:168.6px;width:2.4px;height:2.4px;background:#111"></div><div style="position:absolute;left:1888.4px;top:168.6px;width:2.4px;height:2.4px;background:#111"></div><svg style="position:absolute;left:1358px;top:177.85px;" width="22" height="22" viewBox="0 0 22 22"><rect x="1" y="1" width="20" height="20" fill="#fff" stroke="#c3c3c3" stroke-width="2"/><path d="M5.2 11.6 L9.2 17.2 L16.6 4.6" fill="none" stroke="#000" stroke-width="2.9" stroke-linejoin="miter"/></svg><svg style="position:absolute;left:1395px;top:181.35px;" width="17" height="15" viewBox="0 0 17 15"><path d="M1.3 6.8 L6.2 13.2 L15.6 1.4" fill="none" stroke="#004596" stroke-width="3.3"/></svg><div style="position:absolute;top:180.52px;font-size:20px;line-height:20px;white-space:nowrap;color:#000;left:1427.5px;transform:scaleX(0.9263);transform-origin:left 0;">Sort traces - by SOURCE</div><svg style="position:absolute;left:1334px;top:212.29999999999998px;" width="12" height="6" viewBox="0 0 12 6"><path d="M0 0 L12 0 L6 6 Z" fill="#5c5c5c"/></svg><svg style="position:absolute;left:1358px;top:204.29999999999998px;" width="22" height="22" viewBox="0 0 22 22"><rect x="1" y="1" width="20" height="20" fill="#fff" stroke="#c3c3c3" stroke-width="2"/><path d="M5.2 11.6 L9.2 17.2 L16.6 4.6" fill="none" stroke="#000" stroke-width="2.9" stroke-linejoin="miter"/></svg><svg style="position:absolute;left:1395px;top:207.79999999999998px;" width="17" height="15" viewBox="0 0 17 15"><path d="M1.3 6.8 L6.2 13.2 L15.6 1.4" fill="none" stroke="#004596" stroke-width="3.3"/></svg><div style="position:absolute;top:206.97px;font-size:20px;line-height:20px;white-space:nowrap;color:#000;left:1427.5px;transform:scaleX(0.9614);transform-origin:left 0;">Seismic loop</div><svg style="position:absolute;left:1383px;top:230.75px;" width="22" height="22" viewBox="0 0 22 22"><rect x="1" y="1" width="20" height="20" fill="#fff" stroke="#c3c3c3" stroke-width="2"/><path d="M5.2 11.6 L9.2 17.2 L16.6 4.6" fill="none" stroke="#000" stroke-width="2.9" stroke-linejoin="miter"/></svg><svg style="position:absolute;left:1420px;top:234.25px;" width="17" height="15" viewBox="0 0 17 15"><path d="M1.3 6.8 L6.2 13.2 L15.6 1.4" fill="none" stroke="#004596" stroke-width="3.3"/></svg><div style="position:absolute;top:233.42px;font-size:20px;line-height:20px;white-space:nowrap;color:#000;left:1452.5px;transform:scaleX(0.9788);transform-origin:left 0;">Band-pass filter</div><svg style="position:absolute;left:1383px;top:257.19999999999993px;" width="22" height="22" viewBox="0 0 22 22"><rect x="1" y="1" width="20" height="20" fill="#fff" stroke="#c3c3c3" stroke-width="2"/><path d="M5.2 11.6 L9.2 17.2 L16.6 4.6" fill="none" stroke="#000" stroke-width="2.9" stroke-linejoin="miter"/></svg><svg style="position:absolute;left:1420px;top:260.69999999999993px;" width="17" height="15" viewBox="0 0 17 15"><path d="M1.3 6.8 L6.2 13.2 L15.6 1.4" fill="none" stroke="#004596" stroke-width="3.3"/></svg><div style="position:absolute;top:259.87px;font-size:20px;line-height:20px;white-space:nowrap;color:#000;left:1452.5px;transform:scaleX(0.9776);transform-origin:left 0;">Mute - UP</div><svg style="position:absolute;left:1383px;top:283.65px;" width="22" height="22" viewBox="0 0 22 22"><rect x="1" y="1" width="20" height="20" fill="#fff" stroke="#c3c3c3" stroke-width="2"/><path d="M5.2 11.6 L9.2 17.2 L16.6 4.6" fill="none" stroke="#000" stroke-width="2.9" stroke-linejoin="miter"/></svg><svg style="position:absolute;left:1420px;top:287.15px;" width="17" height="15" viewBox="0 0 17 15"><path d="M1.3 6.8 L6.2 13.2 L15.6 1.4" fill="none" stroke="#004596" stroke-width="3.3"/></svg><div style="position:absolute;top:286.32px;font-size:20px;line-height:20px;white-space:nowrap;color:#000;left:1452.5px;transform:scaleX(1.0036);transform-origin:left 0;">Mute - DOWN</div><svg style="position:absolute;left:1333px;top:310.09999999999997px;" width="22" height="22" viewBox="0 0 22 22"><rect x="1" y="1" width="20" height="20" fill="#fff" stroke="#c3c3c3" stroke-width="2"/><rect x="4" y="4" width="14" height="14" rx="1.5" fill="url(#pg)" stroke="#262626" stroke-width="2.2"/></svg><div style="position:absolute;left:1372px;top:314.4px;width:13.5px;height:13.5px;background:#e8681e"></div><div style="position:absolute;top:312.77px;font-size:20px;line-height:20px;white-space:nowrap;color:#000;left:1402.5px;transform:scaleX(0.926);transform-origin:left 0;">Flow</div><svg style="position:absolute;left:1309px;top:344.54999999999995px;" width="12" height="6" viewBox="0 0 12 6"><path d="M0 0 L12 0 L6 6 Z" fill="#5c5c5c"/></svg><svg style="position:absolute;left:1333px;top:336.54999999999995px;" width="22" height="22" viewBox="0 0 22 22"><rect x="1" y="1" width="20" height="20" fill="#fff" stroke="#c3c3c3" stroke-width="2"/><rect x="4" y="4" width="14" height="14" rx="1.5" fill="url(#pg)" stroke="#262626" stroke-width="2.2"/></svg><div style="position:absolute;left:1372px;top:340.84999999999997px;width:13.5px;height:13.5px;background:#e8681e"></div><div style="position:absolute;top:339.22px;font-size:20px;line-height:20px;white-space:nowrap;color:#000;left:1402.5px;transform:scaleX(0.926);transform-origin:left 0;">Flow</div><div style="position:absolute;top:339.22px;font-size:20px;line-height:20px;white-space:nowrap;color:#000;left:1704.6px;transform:scaleX(0.844);transform-origin:left 0;">SCAC</div><svg style="position:absolute;left:1462px;top:349.65px;" width="239" height="3" viewBox="0 0 239 3"><line x1="0" y1="1.2" x2="236.0" y2="1.2" stroke="#1e1e1e" stroke-width="1.6" stroke-dasharray="4.86 2.6"/></svg><svg style="position:absolute;left:1758.7px;top:349.65px;" width="120.29999999999995" height="3" viewBox="0 0 120.29999999999995 3"><line x1="0" y1="1.2" x2="117.3" y2="1.2" stroke="#1e1e1e" stroke-width="1.6" stroke-dasharray="4.89 2.6"/></svg><svg style="position:absolute;left:1449px;top:349.65px;" width="6" height="3" viewBox="0 0 6 3"><line x1="0" y1="1" x2="5.4" y2="1" stroke="#222" stroke-width="1.6"/></svg><div style="position:absolute;left:1878.0px;top:353.75px;width:2.4px;height:2.4px;background:#111"></div><div style="position:absolute;left:1883.2px;top:353.75px;width:2.4px;height:2.4px;background:#111"></div><div style="position:absolute;left:1888.4px;top:353.75px;width:2.4px;height:2.4px;background:#111"></div><svg style="position:absolute;left:1334px;top:371.0px;" width="12" height="6" viewBox="0 0 12 6"><path d="M0 0 L12 0 L6 6 Z" fill="#5c5c5c"/></svg><svg style="position:absolute;left:1358px;top:363.0px;" width="22" height="22" viewBox="0 0 22 22"><rect x="1" y="1" width="20" height="20" fill="#fff" stroke="#c3c3c3" stroke-width="2"/><path d="M5.2 11.6 L9.2 17.2 L16.6 4.6" fill="none" stroke="#000" stroke-width="2.9" stroke-linejoin="miter"/></svg><svg style="position:absolute;left:1395px;top:366.5px;" width="17" height="15" viewBox="0 0 17 15"><path d="M1.3 6.8 L6.2 13.2 L15.6 1.4" fill="none" stroke="#004596" stroke-width="3.3"/></svg><div style="position:absolute;top:365.67px;font-size:20px;line-height:20px;white-space:nowrap;color:#000;left:1427.5px;transform:scaleX(0.9836);transform-origin:left 0;">SC Amplitude correction - Calculate</div><svg style="position:absolute;left:1359px;top:397.44999999999993px;" width="12" height="6" viewBox="0 0 12 6"><path d="M0 0 L12 0 L6 6 Z" fill="#5c5c5c"/></svg><svg style="position:absolute;left:1383px;top:389.44999999999993px;" width="22" height="22" viewBox="0 0 22 22"><rect x="1" y="1" width="20" height="20" fill="#fff" stroke="#c3c3c3" stroke-width="2"/><path d="M5.2 11.6 L9.2 17.2 L16.6 4.6" fill="none" stroke="#000" stroke-width="2.9" stroke-linejoin="miter"/></svg><svg style="position:absolute;left:1420px;top:392.94999999999993px;" width="17" height="15" viewBox="0 0 17 15"><path d="M1.3 6.8 L6.2 13.2 L15.6 1.4" fill="none" stroke="#004596" stroke-width="3.3"/></svg><div style="position:absolute;top:392.12px;font-size:20px;line-height:20px;white-space:nowrap;color:#000;font-style:italic;left:1452.5px;transform:scaleX(0.9594);transform-origin:left 0;">Sub-sequence - On input data</div><svg style="position:absolute;left:1408px;top:415.9px;" width="22" height="22" viewBox="0 0 22 22"><rect x="1" y="1" width="20" height="20" fill="#fff" stroke="#c3c3c3" stroke-width="2"/><path d="M5.2 11.6 L9.2 17.2 L16.6 4.6" fill="none" stroke="#000" stroke-width="2.9" stroke-linejoin="miter"/></svg><svg style="position:absolute;left:1445px;top:419.4px;" width="17" height="15" viewBox="0 0 17 15"><path d="M1.3 6.8 L6.2 13.2 L15.6 1.4" fill="none" stroke="#004596" stroke-width="3.3"/></svg><div style="position:absolute;top:418.57px;font-size:20px;line-height:20px;white-space:nowrap;color:#000;font-style:italic;left:1477.5px;transform:scaleX(0.9644);transform-origin:left 0;">Band-pass filter</div><svg style="position:absolute;left:1408px;top:442.3499999999999px;" width="22" height="22" viewBox="0 0 22 22"><rect x="1" y="1" width="20" height="20" fill="#fff" stroke="#c3c3c3" stroke-width="2"/><path d="M5.2 11.6 L9.2 17.2 L16.6 4.6" fill="none" stroke="#000" stroke-width="2.9" stroke-linejoin="miter"/></svg><div style="position:absolute;left:1447px;top:446.6499999999999px;width:13.5px;height:13.5px;background:#e8681e"></div><div style="position:absolute;top:445.02px;font-size:20px;line-height:20px;white-space:nowrap;color:#000;font-style:italic;left:1477.5px;transform:scaleX(0.9665);transform-origin:left 0;">Mute - UP</div><svg style="position:absolute;left:1408px;top:468.79999999999995px;" width="22" height="22" viewBox="0 0 22 22"><rect x="1" y="1" width="20" height="20" fill="#fff" stroke="#c3c3c3" stroke-width="2"/><path d="M5.2 11.6 L9.2 17.2 L16.6 4.6" fill="none" stroke="#000" stroke-width="2.9" stroke-linejoin="miter"/></svg><div style="position:absolute;left:1447px;top:473.09999999999997px;width:13.5px;height:13.5px;background:#e8681e"></div><div style="position:absolute;top:471.47px;font-size:20px;line-height:20px;white-space:nowrap;color:#000;font-style:italic;left:1477.5px;transform:scaleX(0.9876);transform-origin:left 0;">Mute - DOWN</div><svg style="position:absolute;left:1358px;top:495.25px;" width="22" height="22" viewBox="0 0 22 22"><rect x="1" y="1" width="20" height="20" fill="#fff" stroke="#c3c3c3" stroke-width="2"/><rect x="4" y="4" width="14" height="14" rx="1.5" fill="url(#pg)" stroke="#262626" stroke-width="2.2"/></svg><svg style="position:absolute;left:1395px;top:498.75px;" width="17" height="15" viewBox="0 0 17 15"><path d="M1.3 6.8 L6.2 13.2 L15.6 1.4" fill="none" stroke="#004596" stroke-width="3.3"/></svg><div style="position:absolute;top:497.92px;font-size:20px;line-height:20px;white-space:nowrap;color:#000;left:1427.5px;transform:scaleX(0.9244);transform-origin:left 0;">Save item - SCAC</div><svg style="position:absolute;left:1358px;top:521.6999999999999px;" width="22" height="22" viewBox="0 0 22 22"><rect x="1" y="1" width="20" height="20" fill="#fff" stroke="#c3c3c3" stroke-width="2"/><path d="M5.2 11.6 L9.2 17.2 L16.6 4.6" fill="none" stroke="#000" stroke-width="2.9" stroke-linejoin="miter"/></svg><div style="position:absolute;left:1397px;top:525.9999999999999px;width:13.5px;height:13.5px;background:#e8681e"></div><div style="position:absolute;top:524.37px;font-size:20px;line-height:20px;white-space:nowrap;color:#000;left:1427.5px;transform:scaleX(0.9263);transform-origin:left 0;">Sort traces - by SOURCE</div><svg style="position:absolute;left:1334px;top:556.15px;" width="12" height="6" viewBox="0 0 12 6"><path d="M0 0 L12 0 L6 6 Z" fill="#5c5c5c"/></svg><svg style="position:absolute;left:1358px;top:548.15px;" width="22" height="22" viewBox="0 0 22 22"><rect x="1" y="1" width="20" height="20" fill="#fff" stroke="#c3c3c3" stroke-width="2"/><path d="M5.2 11.6 L9.2 17.2 L16.6 4.6" fill="none" stroke="#000" stroke-width="2.9" stroke-linejoin="miter"/></svg><div style="position:absolute;left:1397px;top:552.4499999999999px;width:13.5px;height:13.5px;background:#e8681e"></div><div style="position:absolute;top:550.82px;font-size:20px;line-height:20px;white-space:nowrap;color:#000;left:1427.5px;transform:scaleX(0.9614);transform-origin:left 0;">Seismic loop</div><svg style="position:absolute;left:1383px;top:574.5999999999999px;" width="22" height="22" viewBox="0 0 22 22"><rect x="1" y="1" width="20" height="20" fill="#fff" stroke="#c3c3c3" stroke-width="2"/><path d="M5.2 11.6 L9.2 17.2 L16.6 4.6" fill="none" stroke="#000" stroke-width="2.9" stroke-linejoin="miter"/></svg><svg style="position:absolute;left:1420px;top:578.0999999999999px;" width="17" height="15" viewBox="0 0 17 15"><path d="M1.3 6.8 L6.2 13.2 L15.6 1.4" fill="none" stroke="#004596" stroke-width="3.3"/></svg><div style="position:absolute;top:577.27px;font-size:20px;line-height:20px;white-space:nowrap;color:#000;left:1452.5px;transform:scaleX(0.9992);transform-origin:left 0;">SC Amplitude correction - Apply</div><svg style="position:absolute;left:1383px;top:601.05px;" width="22" height="22" viewBox="0 0 22 22"><rect x="1" y="1" width="20" height="20" fill="#fff" stroke="#c3c3c3" stroke-width="2"/><path d="M5.2 11.6 L9.2 17.2 L16.6 4.6" fill="none" stroke="#000" stroke-width="2.9" stroke-linejoin="miter"/></svg><svg style="position:absolute;left:1420px;top:604.55px;" width="17" height="15" viewBox="0 0 17 15"><path d="M1.3 6.8 L6.2 13.2 L15.6 1.4" fill="none" stroke="#004596" stroke-width="3.3"/></svg><div style="position:absolute;top:603.72px;font-size:20px;line-height:20px;white-space:nowrap;color:#000;left:1452.5px;transform:scaleX(0.9436);transform-origin:left 0;">Crop</div><svg style="position:absolute;left:1383px;top:627.5px;" width="22" height="22" viewBox="0 0 22 22"><rect x="1" y="1" width="20" height="20" fill="#fff" stroke="#c3c3c3" stroke-width="2"/><path d="M5.2 11.6 L9.2 17.2 L16.6 4.6" fill="none" stroke="#000" stroke-width="2.9" stroke-linejoin="miter"/></svg><svg style="position:absolute;left:1420px;top:631.0px;" width="17" height="15" viewBox="0 0 17 15"><path d="M1.3 6.8 L6.2 13.2 L15.6 1.4" fill="none" stroke="#004596" stroke-width="3.3"/></svg><div style="position:absolute;top:630.17px;font-size:20px;line-height:20px;white-space:nowrap;color:#000;left:1452.5px;transform:scaleX(0.9538);transform-origin:left 0;">Save seismic by gather</div><div style="position:absolute;left:1276px;top:926px;width:625px;height:1px;background:#c4c4c4"></div><div style="position:absolute;left:1912px;top:926px;width:168px;height:1px;background:#c4c4c4"></div><div style="position:absolute;left:1468px;top:929px;width:611px;height:1.2px;background:#b8b8b8"></div><div style="position:absolute;left:1468px;top:929.7px;width:140px;height:39px;background:#dcdcdc;border:1px solid #b0b0b0;border-top:none;border-radius:0 0 4px 4px;box-sizing:border-box"></div><div style="position:absolute;left:1276.5px;top:926px;width:192px;height:46px;background:linear-gradient(#f3f3f3,#fafafa);border:1px solid #a5a5a5;border-top:none;border-radius:0 0 5px 5px;box-sizing:border-box"></div><div style="position:absolute;top:942.27px;font-size:20px;line-height:20px;white-space:nowrap;color:#000;left:1297.5px;transform:scaleX(1.0008);transform-origin:left 0;">Module Manager</div><div style="position:absolute;top:940.67px;font-size:20px;line-height:20px;white-space:nowrap;color:#000;left:1487.8px;transform:scaleX(0.9671);transform-origin:left 0;">Graph View</div><div style="position:absolute;left:1266px;top:972px;width:814px;height:12px;background:#e6e6e6"></div><div style="position:absolute;left:1266px;top:972px;width:10px;height:12px;background:#e3e3e3"></div><div style="position:absolute;top:996.47px;font-size:20px;line-height:20px;white-space:nowrap;color:#000;font-weight:700;left:1281.7px;transform:scaleX(0.9899);transform-origin:left 0;">Module Properties</div><div style="position:absolute;left:1291.4px;top:1042px;width:633.3px;height:37px;background:#fff;border:1.5px solid #a9a9a9;border-radius:4px;box-sizing:border-box"></div><div style="position:absolute;top:1052.37px;font-size:20px;line-height:20px;white-space:nowrap;color:#7a7a7a;font-style:italic;left:1296.7px;transform:scaleX(0.9294);transform-origin:left 0;">Search Property</div><div style="position:absolute;left:1935.2px;top:1048.4px;width:23px;height:23px;background:#fff;border:1.5px solid #c6c6c6;box-sizing:border-box"></div><div style="position:absolute;top:1051.37px;font-size:20px;line-height:20px;white-space:nowrap;color:#6f6f6f;left:1967.4px;transform:scaleX(0.9533);transform-origin:left 0;">Advanced</div><div style="position:absolute;left:1291.4px;top:1093.5px;width:155.5999999999999px;height:39px;background:#dcdcdc;border:1px solid #b4b4b4;border-bottom:none;border-radius:4px 4px 0 0;box-sizing:border-box"></div><div style="position:absolute;top:1105.27px;font-size:20px;line-height:20px;white-space:nowrap;color:#000;left:1324.2px;transform:scaleX(0.9949);transform-origin:left 0;">Input data</div><div style="position:absolute;left:1600.7px;top:1093.5px;width:155.29999999999995px;height:39px;background:#dcdcdc;border:1px solid #b4b4b4;border-bottom:none;border-radius:4px 4px 0 0;box-sizing:border-box"></div><div style="position:absolute;top:1105.27px;font-size:20px;line-height:20px;white-space:nowrap;color:#000;left:1642.7px;transform:scaleX(0.959);transform-origin:left 0;">Settings</div><div style="position:absolute;left:1756px;top:1093.5px;width:153.79999999999995px;height:39px;background:#dcdcdc;border:1px solid #b4b4b4;border-bottom:none;border-radius:4px 4px 0 0;box-sizing:border-box"></div><div style="position:absolute;top:1105.27px;font-size:20px;line-height:20px;white-space:nowrap;color:#000;left:1779px;transform:scaleX(1.0094);transform-origin:left 0;">Output data</div><div style="position:absolute;left:1909.8px;top:1093.5px;width:153.79999999999995px;height:39px;background:#dcdcdc;border:1px solid #b4b4b4;border-bottom:none;border-radius:4px 4px 0 0;box-sizing:border-box"></div><div style="position:absolute;top:1105.27px;font-size:20px;line-height:20px;white-space:nowrap;color:#7d7d7d;left:1936px;transform:scaleX(1.0146);transform-origin:left 0;">Information</div><div style="position:absolute;left:1447px;top:1090px;width:153.7px;height:44px;background:linear-gradient(#fafafa,#f2f2f2);border:1px solid #a5a5a5;border-bottom:none;border-radius:5px 5px 0 0;box-sizing:border-box"></div><div style="position:absolute;top:1103.57px;font-size:20px;line-height:20px;white-space:nowrap;color:#000;left:1475.6px;transform:scaleX(0.9259);transform-origin:left 0;">Parameters</div><div style="position:absolute;left:1291.5px;top:1146px;width:771.5px;height:187px;background:#fff;border:1px solid #c2c2c2;box-sizing:border-box"></div><div style="position:absolute;left:1292.5px;top:1147px;width:769.5px;height:31px;background:linear-gradient(#ffffff,#ededed)"></div><div style="position:absolute;left:1292.5px;top:1177px;width:769.5px;height:2px;background:#a9a9a9"></div><div style="position:absolute;left:1639.5px;top:1147px;width:1px;height:31px;background:#cfcfcf"></div><div style="position:absolute;left:1903.5px;top:1147px;width:1px;height:31px;background:#cfcfcf"></div><div style="position:absolute;top:1155.07px;font-size:20px;line-height:20px;white-space:nowrap;color:#000;left:1297px;transform:scaleX(0.956);transform-origin:left 0;">Name</div><div style="position:absolute;top:1155.07px;font-size:20px;line-height:20px;white-space:nowrap;color:#000;left:1645.5px;transform:scaleX(0.9967);transform-origin:left 0;">Value</div><div style="position:absolute;top:1155.07px;font-size:20px;line-height:20px;white-space:nowrap;color:#000;left:1909.3px;transform:scaleX(0.918);transform-origin:left 0;">Reference</div><div style="position:absolute;left:1292.5px;top:1213.6px;width:769.5px;height:32px;background:#e9e7e4"></div><div style="position:absolute;top:1188.07px;font-size:20px;line-height:20px;white-space:nowrap;color:#000;left:1331.6px;transform:scaleX(0.9318);transform-origin:left 0;">Type</div><div style="position:absolute;top:1188.07px;font-size:20px;line-height:20px;white-space:nowrap;color:#000;left:1650.3px;transform:scaleX(1.0158);transform-origin:left 0;">Mute up</div><svg style="position:absolute;left:1880.8px;top:1190px;" width="13" height="7" viewBox="0 0 13 7"><path d="M0 0 L13 0 L6.5 7 Z" fill="#000"/></svg><div style="position:absolute;top:1188.07px;font-size:20px;line-height:20px;white-space:nowrap;color:#000;left:1911.6px;transform:scaleX(0.8586);transform-origin:left 0;">NOT SET</div><div style="position:absolute;top:1220.67px;font-size:20px;line-height:20px;white-space:nowrap;color:#000;left:1331.6px;transform:scaleX(0.9862);transform-origin:left 0;">Taper window &lt;ms&gt;</div><div style="position:absolute;top:1220.67px;font-size:20px;line-height:20px;white-space:nowrap;color:#000;left:1646px;transform:scaleX(0.9351);transform-origin:left 0;">0</div><div style="position:absolute;top:1220.67px;font-size:20px;line-height:20px;white-space:nowrap;color:#000;left:1911.6px;transform:scaleX(0.8586);transform-origin:left 0;">NOT SET</div><div style="position:absolute;left:1292.5px;top:1309.6px;width:769.5px;height:22.4px;background:#e6e6e6"></div><div style="position:absolute;left:1292.5px;top:1309.6px;width:769.5px;height:1px;background:#d8d8d8"></div><div style="position:absolute;left:1292.5px;top:1310.6px;width:21.5px;height:21.4px;background:#f7f7f7"></div><div style="position:absolute;left:1314px;top:1310.6px;width:1px;height:21.4px;background:#cfcfcf"></div><div style="position:absolute;left:1315px;top:1310.6px;width:356.3px;height:21.4px;background:linear-gradient(#ffffff,#f4f4f4)"></div><div style="position:absolute;left:1671.3px;top:1310.6px;width:1px;height:21.4px;background:#d0d0d0"></div><div style="position:absolute;left:2039px;top:1310.6px;width:23px;height:21.4px;background:#f7f7f7"></div><div style="position:absolute;left:2039px;top:1310.6px;width:1px;height:21.4px;background:#cfcfcf"></div><svg style="position:absolute;left:1299px;top:1315px;" width="8" height="12" viewBox="0 0 8 12"><path d="M8 0 L0 6 L8 12 Z" fill="#555"/></svg><svg style="position:absolute;left:2050px;top:1315px;" width="7" height="12" viewBox="0 0 7 12"><path d="M0 0 L7 6 L0 12 Z" fill="#555"/></svg><div style="position:absolute;left:1276px;top:1350px;width:803px;height:1px;background:#b0b0b0"></div><div style="position:absolute;left:1276.9px;top:1350px;width:151.7px;height:39.5px;background:#dcdcdc;border:1px solid #b0b0b0;border-top:none;border-radius:0 0 4px 4px;box-sizing:border-box"></div><div style="position:absolute;left:1428.6px;top:1350px;width:128.8px;height:39.5px;background:#dcdcdc;border:1px solid #b0b0b0;border-top:none;border-radius:0 0 4px 4px;box-sizing:border-box"></div><div style="position:absolute;left:1557.4px;top:1349px;width:200.8px;height:43.5px;background:linear-gradient(#f7f7f7,#fbfbfb);border:1px solid #a5a5a5;border-top:none;border-radius:0 0 5px 5px;box-sizing:border-box"></div><div style="position:absolute;top:1361.37px;font-size:20px;line-height:20px;white-space:nowrap;color:#000;left:1296.7px;transform:scaleX(0.9741);transform-origin:left 0;">Tracking info</div><div style="position:absolute;top:1361.37px;font-size:20px;line-height:20px;white-space:nowrap;color:#000;left:1448.9px;transform:scaleX(0.9757);transform-origin:left 0;">Help View</div><div style="position:absolute;top:1363.87px;font-size:20px;line-height:20px;white-space:nowrap;color:#000;left:1577.8px;transform:scaleX(0.9896);transform-origin:left 0;">Module Properties</div><div style="position:absolute;left:457px;top:613px;width:507px;height:316px;background:rgba(0,0,0,0.10);filter:blur(2px)"></div><div style="position:absolute;left:460px;top:616px;width:501px;height:310px;background:#f0f0f0;border:1px solid #9a9a9a;box-sizing:border-box"></div><div style="position:absolute;left:461px;top:617px;width:499px;height:35.5px;background:#fff"></div><div style="position:absolute;top:627.18px;font-size:15.5px;line-height:15.5px;white-space:nowrap;color:#222;left:469.5px;transform:scaleX(0.9665);transform-origin:left 0;">Select Vista(s)</div><div style="position:absolute;left:935.1px;top:624.6px;width:24.6px;height:24.4px;background:#c94a4a"></div><svg style="position:absolute;left:943.5px;top:633px;" width="9" height="9" viewBox="0 0 9 9"><path d="M1 1 L8 8 M8 1 L1 8" stroke="#fff" stroke-width="1.8"/></svg><svg style="position:absolute;left:467px;top:666px;" width="23" height="23" viewBox="0 0 23 23"><rect x="1" y="1" width="21" height="21" fill="#fff" stroke="#c6c6c6" stroke-width="1.6"/><defs><linearGradient id="pg2" x1="0" y1="0" x2="0" y2="1"><stop offset="0" stop-color="#a8a8a8"/><stop offset="1" stop-color="#5e5e5e"/></linearGradient></defs><rect x="4.2" y="4.2" width="14.6" height="14.6" rx="1.5" fill="url(#pg2)" stroke="#262626" stroke-width="2.2"/></svg><div style="position:absolute;top:668.57px;font-size:20px;line-height:20px;white-space:nowrap;color:#000;left:498.7px;transform:scaleX(0.9603);transform-origin:left 0;">Select All</div><div style="position:absolute;left:463.5px;top:699.2px;width:493.5px;height:183px;background:#fff;border:1px solid #bdbdbd;box-sizing:border-box"></div><svg style="position:absolute;left:470.5px;top:702.4px;" width="22" height="24" viewBox="0 0 22 24"><rect x="1" y="1" width="20" height="22" fill="#fff" stroke="#c3c3c3" stroke-width="1.6"/><path d="M5.6 12.6 L9.6 18.6 L16.6 5.6" fill="none" stroke="#000" stroke-width="2.9"/></svg><div style="position:absolute;top:704.67px;font-size:20px;line-height:20px;white-space:nowrap;color:#000;left:503.9px;transform:scaleX(0.9166);transform-origin:left 0;">Curve</div><svg style="position:absolute;left:470.5px;top:728.85px;" width="22" height="24" viewBox="0 0 22 24"><rect x="1" y="1" width="20" height="22" fill="#fff" stroke="#c3c3c3" stroke-width="1.6"/></svg><div style="position:absolute;top:731.12px;font-size:20px;line-height:20px;white-space:nowrap;color:#000;left:503.9px;transform:scaleX(0.9808);transform-origin:left 0;">Gather of difference</div><svg style="position:absolute;left:470.5px;top:755.3px;" width="22" height="24" viewBox="0 0 22 24"><rect x="1" y="1" width="20" height="22" fill="#fff" stroke="#c3c3c3" stroke-width="1.6"/></svg><div style="position:absolute;top:757.57px;font-size:20px;line-height:20px;white-space:nowrap;color:#000;left:503.9px;transform:scaleX(1.0062);transform-origin:left 0;">Input gather</div><svg style="position:absolute;left:470.5px;top:781.75px;" width="22" height="24" viewBox="0 0 22 24"><rect x="1" y="1" width="20" height="22" fill="#fff" stroke="#c3c3c3" stroke-width="1.6"/></svg><div style="position:absolute;top:784.02px;font-size:20px;line-height:20px;white-space:nowrap;color:#000;left:503.9px;transform:scaleX(0.9697);transform-origin:left 0;">Manual</div><svg style="position:absolute;left:470.5px;top:808.1999999999999px;" width="22" height="24" viewBox="0 0 22 24"><rect x="1" y="1" width="20" height="22" fill="#fff" stroke="#c3c3c3" stroke-width="1.6"/></svg><div style="position:absolute;top:810.47px;font-size:20px;line-height:20px;white-space:nowrap;color:#000;left:503.9px;transform:scaleX(1.0148);transform-origin:left 0;">Output gather</div><div style="position:absolute;left:574.7px;top:884.4px;width:131.1px;height:38px;background:linear-gradient(#f6f9fc,#e1e8ef);border:2px solid #3c9cf0;border-radius:4px;box-sizing:border-box"></div><div style="position:absolute;top:895.27px;font-size:20px;line-height:20px;white-space:nowrap;color:#000;left:627px;transform:scaleX(0.8998);transform-origin:left 0;">OK</div><div style="position:absolute;left:716.4px;top:884.4px;width:131.4px;height:38px;background:linear-gradient(#fbfbfb,#ececec);border:1.5px solid #a8a8a8;border-radius:4px;box-sizing:border-box"></div><div style="position:absolute;top:895.27px;font-size:20px;line-height:20px;white-space:nowrap;color:#000;left:753.5px;transform:scaleX(0.9317);transform-origin:left 0;">Cancel</div><svg style="position:absolute;left:840px;top:660px;" width="116" height="32" viewBox="0 0 116 32">
<path d="M6.5 10.5 C6.5 6 9.5 5 12.5 5 C16 5 19 7 19 10.5 C19 14 16 15 14.5 16.5 C13.3 17.8 13 19 13 22" fill="none" stroke="#333" stroke-width="2.8"/>
<rect x="11.3" y="25.5" width="3.4" height="3.4" fill="#333"/>
<path d="M30 5 L45 5 Q47 5 47 7.5 L47 11 L30 11 Z" fill="#004c99"/>
<rect x="33.5" y="15.5" width="13" height="5.5" rx="0.8" fill="none" stroke="#555" stroke-width="1.2"/>
<rect x="33.5" y="23" width="13" height="5.5" rx="0.8" fill="none" stroke="#555" stroke-width="1.2"/>
<path d="M46.5 17 L48.5 18 L48.5 27 L46.5 27" fill="none" stroke="#555" stroke-width="1.2"/>
<path d="M36 11 L36 13.5 L39 13.5 L39 15.5" fill="none" stroke="#555" stroke-width="1"/>
<rect x="59.6" y="5.5" width="3.5" height="3.8" fill="#333"/><rect x="66.8" y="5.5" width="16" height="3.8" fill="#333"/>
<path d="M71.5 13 L77 13 L77 20 L81.5 20 L74.2 29.5 L67 20 L71.5 20 Z" fill="#004c99"/>
<path d="M100.8 6 L107.8 13.8 L103.8 13.8 L103.8 21 L97.8 21 L97.8 13.8 L93.8 13.8 Z" fill="#004c99"/>
<rect x="89.4" y="24.5" width="3.4" height="4" fill="#333"/><rect x="97" y="24.5" width="15" height="4" fill="#333"/>
</svg><svg style="position:absolute;left:600px;top:20px" width="300" height="45"><polygon points="33.69,20.01 37.22,20.24 37.22,24.36 33.69,24.59 32.88,26.54 35.22,29.20 32.30,32.12 29.64,29.78 27.69,30.59 27.46,34.12 23.34,34.12 23.11,30.59 21.16,29.78 18.50,32.12 15.58,29.20 17.92,26.54 17.11,24.59 13.58,24.36 13.58,20.24 17.11,20.01 17.92,18.06 15.58,15.40 18.50,12.48 21.16,14.82 23.11,14.01 23.34,10.48 27.46,10.48 27.69,14.01 29.64,14.82 32.30,12.48 35.22,15.40 32.88,18.06" fill="#004c99"/><circle cx="25.399999999999977" cy="22.299999999999997" r="8.6" fill="#004c99"/><circle cx="25.399999999999977" cy="22.299999999999997" r="3.6" fill="#cfe8fb"/><rect x="56" y="10" width="24.5" height="24.5" fill="none" stroke="#333" stroke-width="2" stroke-dasharray="2 2.2"/><rect x="70" y="24" width="10.5" height="10.5" fill="#cfe8fb" stroke="#333" stroke-width="1.6"/><path d="M60 14 L69 14 L66 17 L72 23 L69 26 L63 20 L60 23 Z" fill="#333"/><path d="M90 18.6 L102.6 18.6 L96.3 25.6 Z" fill="#4b5661"/><circle cx="127.5" cy="18.5" r="8.3" fill="none" stroke="#333" stroke-width="2.2"/><path d="M133.5 24.5 L142.5 33.5" stroke="#333" stroke-width="3"/><g transform="translate(176,25) rotate(-40)"><rect x="-6.5" y="-10" width="13" height="20" rx="6.5" fill="none" stroke="#333" stroke-width="1.7"/><path d="M-6.5 -2 L6.5 -2 M0 -10 L0 -2" stroke="#333" stroke-width="1.4"/></g><path d="M161 10 C165 10 164 15 167 16" fill="none" stroke="#333" stroke-width="1.5"/><path d="M217.5 11 L229.5 18.5 L217.5 25 L205.5 18.5 Z" fill="none" stroke="#333" stroke-width="2"/><path d="M204.5 25 L209 23 L217.5 28 L226 23 L230.5 25 L217.5 33 Z" fill="#004c99"/><path d="M223.5 29 L231.5 29 L227.5 34 Z" fill="#4b5661"/><polyline points="254.47,9.00 255.30,10.00 255.60,11.00 255.31,12.00 254.49,13.00 253.32,14.00 252.09,15.00 251.06,16.00 250.48,17.00 250.47,18.00 251.05,19.00 252.07,20.00 253.30,21.00 254.47,22.00 255.30,23.00 255.60,24.00 255.31,25.00 254.49,26.00 253.32,27.00 252.09,28.00 251.06,29.00 250.48,30.00 250.47,31.00 251.05,32.00 252.07,33.00 253.30,34.00 254.47,35.00" fill="none" stroke="#004c99" stroke-width="1.8"/><polyline points="262.77,9.00 263.60,10.00 263.90,11.00 263.61,12.00 262.79,13.00 261.62,14.00 260.39,15.00 259.36,16.00 258.78,17.00 258.77,18.00 259.35,19.00 260.37,20.00 261.60,21.00 262.77,22.00 263.60,23.00 263.90,24.00 263.61,25.00 262.79,26.00 261.62,27.00 260.39,28.00 259.36,29.00 258.78,30.00 258.77,31.00 259.35,32.00 260.37,33.00 261.60,34.00 262.77,35.00" fill="none" stroke="#e8681e" stroke-width="1.8"/><polyline points="271.07,9.00 271.90,10.00 272.20,11.00 271.91,12.00 271.09,13.00 269.92,14.00 268.69,15.00 267.66,16.00 267.08,17.00 267.07,18.00 267.65,19.00 268.67,20.00 269.90,21.00 271.07,22.00 271.90,23.00 272.20,24.00 271.91,25.00 271.09,26.00 269.92,27.00 268.69,28.00 267.66,29.00 267.08,30.00 267.07,31.00 267.65,32.00 268.67,33.00 269.90,34.00 271.07,35.00" fill="none" stroke="#004c99" stroke-width="1.8"/><path d="M281.79999999999995 18.6 L294.4 18.6 L288.09999999999997 25.6 Z" fill="#4b5661"/></svg><svg style="position:absolute;left:890px;top:20px" width="360" height="45"><path d="M22 9 C17 14 20 18 24 22 C18 26 20 31 23 35" fill="none" stroke="#e8681e" stroke-width="1.8"/><rect x="26.5" y="15" width="19" height="13" fill="none" stroke="#333" stroke-width="1.8"/><path d="M32.5 15 L32.5 28" stroke="#333" stroke-width="1.3"/><path d="M39 15 L39 28" stroke="#333" stroke-width="1.3"/><path d="M26.5 19.5 L45.5 19.5" stroke="#333" stroke-width="1.3"/><path d="M26.5 24 L45.5 24" stroke="#333" stroke-width="1.3"/><path d="M65 11 L65 33 L87 33" fill="none" stroke="#333" stroke-width="1.8"/><path d="M68 32 L68 23 C68 16 72 13 74 15 C75 17 77 16 79 18 C83 21 84 26 84 32" fill="none" stroke="#e8681e" stroke-width="1.8"/><path d="M97.39999999999998 18.6 L109.99999999999997 18.6 L103.69999999999997 25.6 Z" fill="#4b5661"/><path d="M138.5 14 L138.5 31 M130 22 L147 22" stroke="#333" stroke-width="2.6"/><path d="M138.5 8.5 L138.5 13 M138.5 32 L138.5 36 M125 22 L129 22 M148 22 L152 22" stroke="#004c99" stroke-width="1.6" stroke-dasharray="1.5 1.2"/><path d="M141 25 L148 26 L146 28 L151 33 L149 35 L144 30 L142 32 Z" fill="#e8681e"/><path d="M171 13 Q171 11 173 11 L191 11 Q193 11 193 13 L193 26 Q193 28 191 28 L180 28 L174 34 L174 28 L173 28 Q171 28 171 26 Z" fill="none" stroke="#333" stroke-width="1.8"/><rect x="176.5" y="18.5" width="3" height="3" fill="#333"/><rect x="181" y="18.5" width="3" height="3" fill="#333"/><rect x="185.5" y="18.5" width="3" height="3" fill="#333"/><path d="M217 15 L213.5 15 L213.5 33 L235.5 33 L235.5 15 L231 15" fill="none" stroke="#333" stroke-width="1.8"/><path d="M213.5 25 C218 21 222 27 225 24 C228 21 231 26 235.5 23 M213.5 30 C218 26 222 32 225 29 C228 26 231 31 235.5 28" fill="none" stroke="#333" stroke-width="1.5"/><path d="M224.5 8.5 L229.5 14 L226 14 L226 20 L223 20 L223 14 L219.5 14 Z" fill="#004c99"/><circle cx="264" cy="22" r="9.5" fill="none" stroke="#333" stroke-width="1.9"/><circle cx="264" cy="22" r="3.8" fill="none" stroke="#333" stroke-width="1.9"/><path d="M264 31.5 L280 31.5 L280 29" fill="none" stroke="#333" stroke-width="1.6"/><path d="M270 13 L273 12 L274 15" fill="none" stroke="#333" stroke-width="1.3"/><circle cx="310" cy="22.200000000000003" r="12" fill="none" stroke="#333" stroke-width="1.9"/><path d="M310 8.600000000000001 L310 12" stroke="#333" stroke-width="1.8"/><path d="M310 32.5 L310 35.8" stroke="#333" stroke-width="1.8"/><path d="M296.79999999999995 22.200000000000003 L300 22.200000000000003" stroke="#333" stroke-width="1.8"/><path d="M320 22.200000000000003 L323.4000000000001 22.200000000000003" stroke="#333" stroke-width="1.8"/><path d="M316.5 15.5 L312 24 L308.5 20.5 Z" fill="#e8681e"/><path d="M303.5 29 L308.5 20.5 L312 24 Z" fill="#004c99"/><path d="M332 18.6 L344.6 18.6 L338.3 25.6 Z" fill="#4b5661"/></svg><svg style="position:absolute;left:1580px;top:20px" width="500" height="42"><path d="M15.5 28 L15.5 8 L29.5 8 Q31.5 8 31.5 10 L31.5 16" fill="none" stroke="#333" stroke-width="1.6"/><path d="M15.5 28 L24.5 28" stroke="#333" stroke-width="1.6"/><rect x="18.5" y="11.0" width="3.6" height="3.4" fill="#333"/><rect x="24.0" y="11.0" width="3.6" height="3.4" fill="#333"/><rect x="18.5" y="16.5" width="3.6" height="3.4" fill="#333"/><rect x="24.0" y="16.5" width="3.6" height="3.4" fill="#333"/><rect x="18.5" y="22.0" width="3.6" height="3.4" fill="#333"/><rect x="24.0" y="22.0" width="3.6" height="3.4" fill="#333"/><circle cx="33" cy="25.5" r="8.3" fill="#004c99"/><path d="M33 20.5 L33 30.5 M28 25.5 L38 25.5" stroke="#fff" stroke-width="2.8"/><path d="M51.5 28 L51.5 8 L65.5 8 Q67.5 8 67.5 10 L67.5 16" fill="none" stroke="#333" stroke-width="1.6"/><path d="M51.5 28 L60.5 28" stroke="#333" stroke-width="1.6"/><rect x="54.5" y="11.0" width="3.6" height="3.4" fill="#333"/><rect x="60.0" y="11.0" width="3.6" height="3.4" fill="#333"/><rect x="54.5" y="16.5" width="3.6" height="3.4" fill="#333"/><rect x="60.0" y="16.5" width="3.6" height="3.4" fill="#333"/><rect x="54.5" y="22.0" width="3.6" height="3.4" fill="#333"/><rect x="60.0" y="22.0" width="3.6" height="3.4" fill="#333"/><circle cx="69.5" cy="25.5" r="8.3" fill="#e8681e"/><path d="M64.5 25.5 L74.5 25.5" stroke="#fff" stroke-width="2.8"/><path d="M101 7.5 L109 17 L104 17 L104 25 L98 25 L98 17 L93 17 Z" fill="#004c99"/><rect x="88" y="29" width="3" height="4.5" fill="#333"/><rect x="96" y="29" width="18" height="4.5" fill="#333"/><rect x="124" y="7.5" width="4.5" height="4.5" fill="#333"/><rect x="132.5" y="7.5" width="18" height="4.5" fill="#333"/><path d="M137.5 15.5 L143.5 15.5 L143.5 23 L148.5 23 L140.5 33.5 L132.5 23 L137.5 23 Z" fill="#004c99"/><rect x="161" y="12" width="1.2" height="16" fill="#c8c8c8"/><path d="M177 11.3 L192 20.799999999999997 L177 30.4 Z" fill="#004c99"/><path d="M208.5 16 L208.5 31.5 L231 31.5 M209.5 9.5 L230 9.5 Q231 9.5 231 11 L231 24" fill="none" stroke="#333" stroke-width="1.7"/><path d="M208.5 12 L211.5 17 L205.5 17 Z M231 28 L228 23 L234 23 Z" fill="#333"/><path d="M215 12.5 L226 20.799999999999997 L215 29 Z" fill="#004c99"/><rect x="249.5999999999999" y="14" width="13.4" height="13" fill="#e8681e"/><rect x="280" y="12" width="1.2" height="16" fill="#c8c8c8"/><path d="M294 11 L294 33.2 L313.5 33.2 L313.5 14" fill="none" stroke="#333" stroke-width="1.6"/><path d="M291.29999999999995 7.5 L308.5 7.5 L311 10 L311 30.5 L291.29999999999995 30.5 Z" fill="#f0f0f0" stroke="#333" stroke-width="1.6"/><rect x="294.5" y="12.5" width="2.6" height="2.6" fill="#333"/><rect x="299" y="12.5" width="8" height="2.6" fill="#333"/><rect x="294.5" y="17.5" width="2.6" height="2.6" fill="#333"/><rect x="299" y="17.5" width="8" height="2.6" fill="#333"/><rect x="294.5" y="22.5" width="2.6" height="2.6" fill="#333"/><rect x="299" y="22.5" width="8" height="2.6" fill="#333"/><rect x="330.79999999999995" y="10" width="17" height="21.5" rx="1.6" fill="none" stroke="#333" stroke-width="1.5"/><rect x="336" y="7" width="6.5" height="4.5" fill="#333"/><rect x="363" y="16" width="20.5" height="17" fill="none" stroke="#333" stroke-width="2"/><rect x="363" y="16" width="20.5" height="4.5" fill="#333"/><path d="M373 7.5 L377 11.5 M377 7.5 L373 11.5 M380 10.5 L383 13.5 M383 10.5 L380 13.5" stroke="#004c99" stroke-width="1.5"/><circle cx="386.5" cy="16.5" r="0.9" fill="#004c99"/><path d="M396.4000000000001 17 L409.80000000000007 17 L403.1000000000001 24 Z" fill="#555"/><rect x="418" y="12" width="1.2" height="16" fill="#c8c8c8"/><path d="M438 13 L444.5 13 L444.5 23 L447.29999999999995 25.5 L435.29999999999995 25.5 L438 23 Z" fill="#fff" stroke="#111" stroke-width="1.4"/><rect x="441.5" y="13" width="3" height="12" fill="#111"/><path d="M441.29999999999995 25.5 L441.29999999999995 30.299999999999997" stroke="#111" stroke-width="1.4"/><rect x="469.5" y="12.5" width="17.5" height="17.5" rx="3.5" fill="none" stroke="#555" stroke-width="1.3"/><rect x="473.5" y="20" width="6.5" height="6.5" fill="none" stroke="#555" stroke-width="1.3"/><path d="M476 20 L476 17 L483 17 L483 23.5 L480 23.5" fill="none" stroke="#555" stroke-width="1.3"/></svg><svg style="position:absolute;left:1880px;top:985px" width="200" height="40"><ellipse cx="17" cy="10.5" rx="7.5" ry="3" fill="none" stroke="#333" stroke-width="1.4"/><path d="M9.5 10.5 L9.5 27 Q17 31 22 29.5 M24.5 10.5 L24.5 17 M9.5 16 Q17 19.5 22 17.5 M9.5 21.5 Q15 24.5 20 23.5" fill="none" stroke="#333" stroke-width="1.4"/><path d="M21 19.5 L33 19.5 L35.799999999999955 22 L35.799999999999955 33 L21 33 Z" fill="#333"/><rect x="25" y="21.5" width="6" height="4" fill="#f0f0f0"/><rect x="46" y="12" width="1.2" height="16" fill="#c8c8c8"/><path d="M62.5 17.5 L68.5 25.5 L74.5 17.5" fill="none" stroke="#333" stroke-width="1.5"/><path d="M101.5 15.5 L110.5 21 L101.5 26.5" fill="none" stroke="#333" stroke-width="1.5"/><path d="M137 12.5 L143.5 12.5 L143.5 22 L146.29999999999995 24.5 L134.29999999999995 24.5 L137 22 Z" fill="#fff" stroke="#111" stroke-width="1.4"/><rect x="140.5" y="12.5" width="3" height="11" fill="#111"/><path d="M140.29999999999995 24.5 L140.29999999999995 30" stroke="#111" stroke-width="1.4"/><rect x="169.5" y="12" width="18" height="17.5" rx="3.5" fill="none" stroke="#555" stroke-width="1.3"/><rect x="173.5" y="19.5" width="6.5" height="6.5" fill="none" stroke="#555" stroke-width="1.3"/><path d="M176 19.5 L176 16.5 L183 16.5 L183 23 L180 23" fill="none" stroke="#555" stroke-width="1.3"/></svg><svg style="position:absolute;left:1151px;top:78px;" width="155" height="175" viewBox="0 0 155 175"><rect x="0" y="0" width="155" height="175" fill="#00b050"/>
<rect x="2" y="2" width="151" height="171" fill="#363c45"/>
<g transform="translate(1,0)">
<polygon points="35.2,86 24,97 15,104 13.6,109.7 18,111.5 24.4,112.3 30.7,108.5 38,104" fill="#ec9872"/>
<polygon points="32,108 28.2,125 20.6,141.5 18,148.5 21,150 24.4,147 34.6,132.6 40.9,119.9 39,104" fill="#ed9b75"/>
<polygon points="110.1,11.3 139.3,41.8 132,50 126,59 119.6,69.1 116,76 113.3,84.3 108,92 104.4,99.6 100,104 95.5,108.5 91,113 87.9,118.6 84,124 80.3,131.3 77,138 75.2,144 71.4,149.7 69,152 65,152.3 62,150 60,144 56,136 52.3,128.8 48,122 43.4,116.1 39,108 37.1,99.6 35,92 35.2,84.3 34.5,78 35.8,71.7 37,68 40.9,65.3 47,62 56.1,59 66,55 75.2,50.1 82,45 90.4,38.6 95,32 100.6,23.4" fill="#f5bd9b"/>
<polygon points="110.1,11.3 139.3,41.8 135,46.5 125,35 113,24 104.5,18.5" fill="#e9977a"/>
<polygon points="139.3,41.8 132,50 126,59 119.6,69.1 116,76 113.3,84.3 108,92 104.4,99.6 101,100 106,90 112,78 118,64 126,52 134,45" fill="#eda385"/>
<polygon points="56.8,95.8 65,90.7 76.5,104.7 67.6,123.7 56.1,116.1 54.9,106" fill="#363c45"/>
<path d="M44 70 C50 78 56 84 60 92" fill="none" stroke="#e9a486" stroke-width="1.2"/>
</g></svg><div style="position:absolute;left:1356px;top:248.3px;width:216px;height:38.4px;border:5.5px solid #00b050;border-radius:9px;background:rgba(0,168,80,0.22);box-sizing:border-box"></div><svg style="position:absolute;left:0;top:0" width="2098" height="1418"><path d="M1452.0 248.5 L1315.3 171.4" stroke="#11aa4f" stroke-width="2.6"/><path d="M1304.0 165.0 L1317.0 182.7 L1315.3 171.4 L1325.8 167.0 Z" fill="#11aa4f"/><path d="M1151.5 165.0 L689.8 614.4" stroke="#11aa4f" stroke-width="2.6"/><path d="M680.5 623.5 L701.1 616.0 L689.8 614.4 L688.6 603.1 Z" fill="#11aa4f"/></svg>
</body></html>
